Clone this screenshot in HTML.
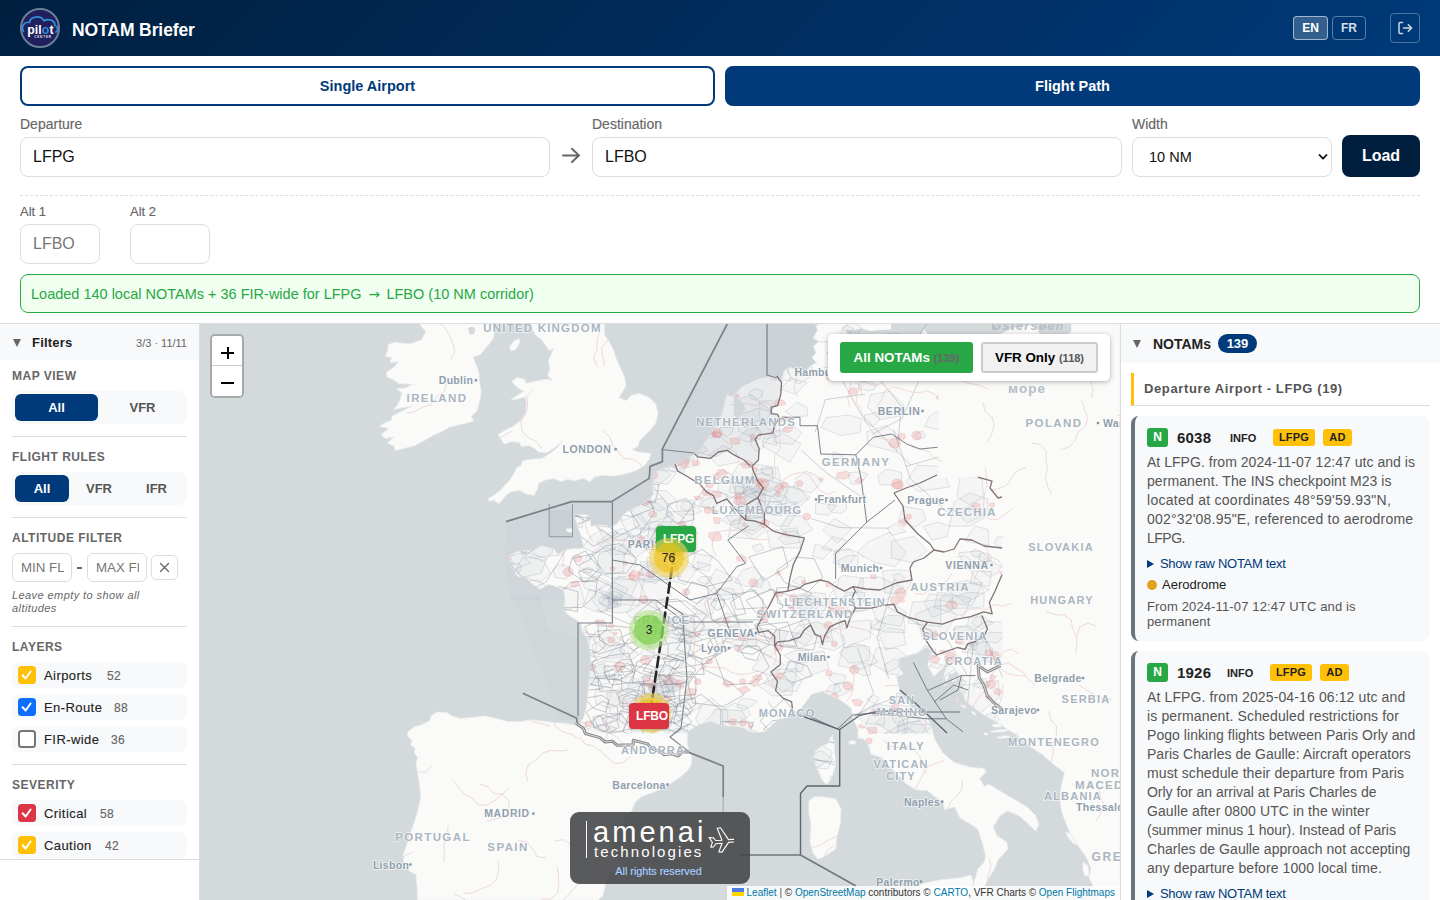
<!DOCTYPE html>
<html lang="en">
<head>
<meta charset="utf-8">
<title>NOTAM Briefer</title>
<style>
*{box-sizing:border-box;margin:0;padding:0}
html,body{width:1440px;height:900px;overflow:hidden;background:#fff}
body{font-family:"Liberation Sans",sans-serif;color:#222;position:relative;font-size:14px}
.abs{position:absolute}
/* header */
#hdr{position:absolute;left:0;top:0;width:1440px;height:56px;background:linear-gradient(135deg,#001f3f 0%,#003a7a 100%)}
#logo{position:absolute;left:20px;top:8px;width:40px;height:40px}
#title{position:absolute;left:72px;top:18.500px;font-size:17.5px;font-weight:700;color:#fff;line-height:22px;white-space:nowrap;letter-spacing:-0.1px}
.lang{position:absolute;top:16px;height:24px;border:1px solid rgba(255,255,255,.35);border-radius:4px;color:#fff;font-size:12px;font-weight:700;text-align:center;line-height:22px}
#en{left:1293px;width:35px;background:rgba(255,255,255,.2);border-color:rgba(255,255,255,.55)}
#fr{left:1332px;width:34px;color:rgba(255,255,255,.85)}
#logout{position:absolute;left:1390px;top:13px;width:30px;height:30px;border:1px solid rgba(255,255,255,.3);border-radius:4px}
/* tabs */
.tab{position:absolute;top:66px;height:40px;border:2px solid #003a7a;border-radius:8px;font-size:14.5px;font-weight:700;text-align:center;line-height:36px}
#tab1{left:20px;width:695px;color:#003a7a;background:#fff}
#tab2{left:725px;width:695px;color:#fff;background:#003a7a}
.lbl{position:absolute;font-size:14px;color:#666;-webkit-text-stroke:.15px #666;line-height:16px;white-space:nowrap}
.inp{position:absolute;height:40px;border:1px solid #ddd;border-radius:8px;background:#fff;font-size:16px;line-height:38px;padding-left:12px;color:#111}
#load{position:absolute;left:1342px;top:135px;width:78px;height:42px;border-radius:8px;background:#001f3f;color:#fff;font-weight:700;font-size:16px;text-align:center;line-height:41px}
#dash{position:absolute;left:20px;top:195px;width:1400px;height:0;border-top:1px dashed #ddd}
#status{position:absolute;left:20px;top:274px;width:1400px;height:39px;border:1px solid #28a745;border-radius:8px;background:#f0fff0;color:#28a745;font-size:14.5px;line-height:39.500px;padding-left:10px;white-space:nowrap}
#hline{position:absolute;left:0;top:323px;width:1440px;height:1px;background:#ddd}

/* sidebar */
#side{position:absolute;left:0;top:324px;width:199px;height:536px;background:#fff;border-bottom:1px solid #ddd}
#side .hd{position:absolute;left:0;top:0;width:199px;height:36px;background:#f8f9fa}
.tri{position:absolute;width:0;height:0;border-left:4px solid transparent;border-right:4px solid transparent;border-top:8px solid #666}
.sl{position:absolute;left:12px;font-size:12px;font-weight:700;color:#666;letter-spacing:.5px;line-height:14px;white-space:nowrap}
.seg{position:absolute;left:12px;width:175px;height:33px;background:#f8f9fa;border-radius:8px}
.seg div{position:absolute;top:3px;height:27px;border-radius:6px;font-size:13px;font-weight:700;color:#555;text-align:center;line-height:27px}
.seg div.on{background:#003a7a;color:#fff}
.dv{position:absolute;left:12px;width:175px;height:1px;background:#ddd}
.fl{position:absolute;height:29px;border:1px solid #ddd;border-radius:6px;font-size:13.300px;color:#777;line-height:27px;padding-left:8px;white-space:nowrap;overflow:hidden;background:#fff}
.row{position:absolute;left:12px;width:175px;height:26px;background:#f8f9fa;border-radius:6px;font-size:13px;color:#222;line-height:26px;white-space:nowrap}
.row .cb{position:absolute;left:6px;top:4px;width:18px;height:18px;border-radius:3.5px}
.row .t{position:absolute;left:32px;top:1px;font-weight:400;letter-spacing:.42px;-webkit-text-stroke:.12px #222}
.row .n{position:absolute;top:1px;font-size:12px;color:#666;letter-spacing:.3px;-webkit-text-stroke:.15px #666}

/* right panel */
#pan{position:absolute;left:1120px;top:324px;width:320px;height:576px;background:#fff;border-left:1px solid #ddd;overflow:hidden}
#pan .hd{position:absolute;left:0;top:0;width:319px;height:39px;background:#f8f9fa}
#pan .sec{position:absolute;left:10px;top:49px;width:299px;height:33px;border-left:3px solid #ffc107;border-bottom:1px solid #ddd;font-size:13px;font-weight:700;color:#555;line-height:32px;padding-left:10px;letter-spacing:.62px;white-space:nowrap}
.card{position:absolute;left:10px;width:299px;background:#f8f9fa;border-left:4px solid #6c757d;border-radius:8px}
.card .nb{position:absolute;left:12px;top:12px;width:21px;height:19px;border-radius:3px;background:#28a745;color:#fff;font-size:12px;font-weight:700;text-align:center;line-height:19px}
.card .id{position:absolute;left:42px;top:12px;font-size:15px;font-weight:700;color:#222;line-height:19px;letter-spacing:.2px}
.card .info{position:absolute;top:12px;font-size:11px;font-weight:700;color:#222;line-height:20px}
.card .bd{position:absolute;top:13px;height:17px;border-radius:3px;background:#ffc107;color:#222;font-size:11px;font-weight:700;text-align:center;line-height:17px;letter-spacing:.2px}
.card .body{position:absolute;left:12px;top:37px;font-size:14px;color:#555;line-height:19px;white-space:nowrap;letter-spacing:-.02px}
.card .raw{position:absolute;left:12px;font-size:13px;color:#003a7a;line-height:16px;white-space:nowrap;padding-left:13px;letter-spacing:-.3px}
.card .raw:before{content:"";position:absolute;left:0;top:4px;border-top:4px solid transparent;border-bottom:4px solid transparent;border-left:7px solid #003a7a}
.card .cat{position:absolute;left:27px;font-size:13px;color:#222;line-height:16px;white-space:nowrap}
.card .cat:before{content:"";position:absolute;left:-15px;top:3px;width:10px;height:10px;border-radius:5px;background:#e0a21f}
.card .when{position:absolute;left:12px;font-size:13px;color:#555;line-height:15px;white-space:nowrap;letter-spacing:.14px}

#map{position:absolute;left:200px;top:324px;width:920px;height:576px;overflow:hidden;background:#d4dadc}

.zc{position:absolute;left:10px;top:10px;width:34px;height:64px;border:2px solid rgba(0,0,0,.22);border-radius:5px;background:#fff;overflow:hidden;background-clip:padding-box}
.zb{position:relative;width:30px;height:30px;background:#fff}.zb i{position:absolute;background:#000;display:block}
.lg{position:absolute;left:628px;top:10px;width:282px;height:47px;background:#fff;border-radius:5px;box-shadow:0 1px 5px rgba(0,0,0,.3)}
.lg div{position:absolute;top:8px;height:31px;border-radius:3px;font-size:13.400px;font-weight:700;line-height:31px;text-align:center;white-space:nowrap}
.lg span{font-size:11px;font-weight:700}
.lg .b1{left:12px;width:133px;background:#28a745;color:#fff}
.lg .b1 span{color:#6a646a}
.lg .b2{left:153px;width:117px;background:#f1f1f1;color:#000;border:2px solid #ccc;line-height:27px}
.lg .b2 span{color:#555}
.apt{position:absolute;width:40px;height:26px;border-radius:4px;color:#fff;font-size:12px;font-weight:700;line-height:26px;text-align:center;box-shadow:0 1px 3px rgba(0,0,0,.25);letter-spacing:-.2px}
.cl{position:absolute;width:40px;height:40px;border-radius:20px}
.cl div{position:absolute;left:5px;top:5px;width:30px;height:30px;border-radius:15px;font-size:12px;line-height:30px;text-align:center;color:#222}
.cl.y{background:rgba(241,211,87,.6)}.cl.y div{background:rgba(240,194,12,.6)}
.cl.g{background:rgba(181,226,140,.6)}.cl.g div{background:rgba(110,204,57,.6)}
.am{position:absolute;left:370px;top:488px;width:180px;height:72px;border-radius:9px;background:rgba(66,67,69,.88)}
.am .bar{position:absolute;left:16px;top:9px;width:1px;height:37px;background:#fff}
.am .a1{position:absolute;left:23px;top:1.500px;font-size:29px;line-height:36px;color:#fff;letter-spacing:3.050px;white-space:nowrap}
.am .a2{position:absolute;left:24px;top:29.800px;font-size:15px;line-height:20px;color:#fff;letter-spacing:2.100px;white-space:nowrap}
.am .pl{position:absolute;left:135.500px;top:13px}
.am .a3{position:absolute;left:0;width:180px;top:51.500px;font-size:10.800px;line-height:14px;color:#a6cbfb;text-align:center;letter-spacing:0;-webkit-text-stroke:.2px #a6cbfb;padding-right:3px}
.attr{position:absolute;right:0;bottom:0;height:14px;padding:0 5px;background:rgba(255,255,255,.8);font-size:10px;line-height:14px;color:#333;white-space:nowrap;letter-spacing:0}
.attr a{color:#0078a8}
</style>
</head>
<body>
<div id="hdr">
  <svg id="logo" viewBox="0 0 40 40">
    <circle cx="20" cy="20" r="19" fill="#20205e" stroke="#6b7f96" stroke-width="2"/>
    <path d="M3.500 23.500C0.500 18 5 13.200 9.500 14.500C10 8.500 20.500 6.500 24 12.800C28 10.300 35 12 35 17.500C38.300 18.500 38.300 22.500 36 24" fill="none" stroke="#2f8fd8" stroke-width="1.700" stroke-linecap="round"/>
    <text x="7.200" y="26.400" font-family="Liberation Sans, sans-serif" font-size="12.300" font-weight="700" fill="#fff" letter-spacing="0.1">pil<tspan fill="#2f8fd8">o</tspan>t</text>
    <text x="23" y="29.600" font-family="Liberation Sans, sans-serif" font-size="3" font-weight="700" fill="#e6e9f5" text-anchor="middle" letter-spacing="0.9">CENTER</text>
  </svg>
  <div id="title">NOTAM Briefer</div>
  <div class="lang" id="en">EN</div>
  <div class="lang" id="fr">FR</div>
  <div id="logout"><svg width="28" height="28" viewBox="0 0 28 28" style="position:absolute;left:0;top:0"><path d="M11.5 8.5H9.3a1.3 1.3 0 0 0-1.3 1.3v8.4a1.3 1.3 0 0 0 1.3 1.3h2.2M12.5 14h8M17.3 10.7l3.3 3.3-3.3 3.3" fill="none" stroke="#cfd8e6" stroke-width="1.5" stroke-linecap="round" stroke-linejoin="round"/></svg></div>
</div>
<div class="tab" id="tab1">Single Airport</div>
<div class="tab" id="tab2">Flight Path</div>

<div class="lbl" style="left:20px;top:116px">Departure</div>
<div class="inp" style="left:20px;top:137px;width:530px">LFPG</div>
<svg class="abs" style="left:561px;top:147px" width="20" height="18" viewBox="0 0 20 18"><path d="M2 8.400H17.600M11 1.800L17.900 8.400L11 15" fill="none" stroke="#666" stroke-width="2" stroke-linecap="round" stroke-linejoin="miter"/></svg>
<div class="lbl" style="left:592px;top:116px">Destination</div>
<div class="inp" style="left:592px;top:137px;width:530px">LFBO</div>
<div class="lbl" style="left:1132px;top:116px">Width</div>
<div class="inp" style="left:1132px;top:137px;width:200px;font-size:14.5px;padding-left:16px">10 NM
  <svg class="abs" style="right:3px;top:15px" width="10" height="8" viewBox="0 0 10 8"><path d="M1.500 2l3.500 3.700L8.500 2" fill="none" stroke="#111" stroke-width="1.8" stroke-linecap="round" stroke-linejoin="round"/></svg>
</div>
<div id="load">Load</div>
<div id="dash"></div>
<div class="lbl" style="left:20px;top:204px;font-size:13px">Alt 1</div>
<div class="inp" style="left:20px;top:224px;width:80px;color:#777">LFBO</div>
<div class="lbl" style="left:130px;top:204px;font-size:13px">Alt 2</div>
<div class="inp" style="left:130px;top:224px;width:80px"></div>
<div id="status">Loaded 140 local NOTAMs + 36 FIR-wide for LFPG <span style="font-family:'DejaVu Sans',sans-serif;font-size:13.500px;line-height:10px;margin:0 2.500px 0 3px">→</span> LFBO (10 NM corridor)</div>
<div id="hline"></div>
<div class="abs" style="left:199px;top:324px;width:1px;height:576px;background:#ddd"></div>

<div id="side">
  <div class="hd">
    <div class="tri" style="left:13px;top:15px"></div>
    <div class="abs" style="left:32px;top:10.500px;font-size:13px;font-weight:700;color:#222;line-height:16px;letter-spacing:.2px">Filters</div>
    <div class="abs" style="right:12px;top:12px;font-size:11px;color:#666;line-height:14px;white-space:nowrap">3/3 · 11/11</div>
  </div>
  <div class="sl" style="top:45px">MAP VIEW</div>
  <div class="seg" style="top:67px"><div class="on" style="left:3px;width:83px">All</div><div style="left:89px;width:83px">VFR</div></div>
  <div class="dv" style="top:112px"></div>
  <div class="sl" style="top:126px">FLIGHT RULES</div>
  <div class="seg" style="top:148px"><div class="on" style="left:3px;width:54px">All</div><div style="left:60px;width:54px">VFR</div><div style="left:117px;width:55px">IFR</div></div>
  <div class="dv" style="top:193px"></div>
  <div class="sl" style="top:207px">ALTITUDE FILTER</div>
  <div class="fl" style="left:12px;top:229px;width:60px"><span style="display:block;width:43px;overflow:hidden">MIN FL</span></div>
  <div class="abs" style="left:77px;top:243px;width:5px;height:1.500px;background:#666"></div>
  <div class="fl" style="left:87px;top:229px;width:60px"><span style="display:block;width:43px;overflow:hidden">MAX FL</span></div>
  <div class="abs" style="left:151px;top:231px;width:27px;height:25px;border:1px solid #ddd;border-radius:5px;background:#fff"><svg width="25" height="23" viewBox="0 0 25 23"><path d="M8.500 7.500l8 8M16.500 7.500l-8 8" stroke="#666" stroke-width="1.300" stroke-linecap="round"/></svg></div>
  <div class="abs" style="left:12px;top:265px;font-size:11px;font-style:italic;color:#666;line-height:13px;letter-spacing:.42px;white-space:nowrap">Leave empty to show all<br>altitudes</div>
  <div class="dv" style="top:302px"></div>
  <div class="sl" style="top:316px">LAYERS</div>
<div class="row" style="top:338px"><div class="cb" style="background:#ffc107"><svg width="18" height="18" viewBox="0 0 18 18"><path d="M4.600 9.300l3 3.200 5-7" fill="none" stroke="#fff" stroke-width="2" stroke-linecap="round" stroke-linejoin="round"/></svg></div><span class="t">Airports</span><span class="n" style="left:95px">52</span></div>
<div class="row" style="top:370px"><div class="cb" style="background:#0d6efd"><svg width="18" height="18" viewBox="0 0 18 18"><path d="M4.600 9.300l3 3.200 5-7" fill="none" stroke="#fff" stroke-width="2" stroke-linecap="round" stroke-linejoin="round"/></svg></div><span class="t">En-Route</span><span class="n" style="left:102px">88</span></div>
<div class="row" style="top:402px"><div class="cb" style="background:#fff;border:2px solid #767676"></div><span class="t">FIR-wide</span><span class="n" style="left:99px">36</span></div>
  <div class="dv" style="top:440px"></div>
  <div class="sl" style="top:454px">SEVERITY</div>
<div class="row" style="top:476px"><div class="cb" style="background:#dc3545"><svg width="18" height="18" viewBox="0 0 18 18"><path d="M4.600 9.300l3 3.200 5-7" fill="none" stroke="#fff" stroke-width="2" stroke-linecap="round" stroke-linejoin="round"/></svg></div><span class="t">Critical</span><span class="n" style="left:88px">58</span></div>
<div class="row" style="top:508px"><div class="cb" style="background:#ffc107"><svg width="18" height="18" viewBox="0 0 18 18"><path d="M4.600 9.300l3 3.200 5-7" fill="none" stroke="#fff" stroke-width="2" stroke-linecap="round" stroke-linejoin="round"/></svg></div><span class="t">Caution</span><span class="n" style="left:93px">42</span></div>
</div>

<div id="map">
<svg id="mapsvg" width="920" height="576" viewBox="200 324 920 576" style="position:absolute;left:0;top:0;font-family:'Liberation Sans',sans-serif">
<rect x="200" y="324" width="920" height="576" fill="#d4dadc"/>
<path d="M727.2 324.0 L840.0 324.0 L840.0 400.0 L700.0 470.0 L662.4 461.6 L662.4 448.8Z" fill="#6d7780" fill-opacity=".035"/><path d="M767.0 324.0 L840.0 324.0 L840.0 380.0 L767.0 375.0Z" fill="#6d7780" fill-opacity=".03"/><path d="M506.0 521.6 L571.6 501.6 L611.6 501.6 L649.2 478.4 L650.0 466.4 L662.4 461.6 L700.0 470.0 L700.0 600.0 L510.0 600.0 L505.0 560.0Z" fill="#6d7780" fill-opacity=".035"/><rect x="549.2" y="510.4" width="23.300" height="26.4" fill="#6d7780" fill-opacity=".06"/><path d="M578.0 623.0 L612.0 623.0 L612.0 718.0 L578.0 718.0Z" fill="#6d7780" fill-opacity=".025"/><path d="M513.0 597.0 L540.0 597.0 L548.0 628.0 L580.0 639.0 L580.0 720.0 L560.0 720.0Z" fill="#6d7780" fill-opacity=".03"/>
<defs><clipPath id="landclip"><path d="M815.2 324.0 L817.6 330.4 L813.0 338.4 L819.0 341.5 L813.5 346.0 L816.0 352.8 L812.0 358.0 L817.0 362.5 L810.4 366.0 L806.0 371.5 L800.0 369.6 L793.6 368.8 L789.0 367.5 L784.0 371.2 L782.3 379.9 L773.2 376.9 L759.6 378.8 L741.8 387.1 L733.0 396.6 L726.8 395.5 L723.6 409.0 L722.0 414.3 L712.3 432.1 L706.1 440.6 L699.3 451.5 L691.3 455.9 L684.9 459.6 L672.4 466.1 L660.6 469.3 L654.5 472.6 L652.7 488.0 L653.7 494.4 L646.0 502.4 L636.4 507.2 L626.8 512.0 L620.4 517.6 L617.2 524.0 L610.8 526.7 L599.6 524.8 L590.8 526.4 L590.0 520.0 L588.4 515.2 L582.0 514.4 L574.8 514.4 L576.4 523.2 L579.6 531.2 L582.0 539.2 L584.4 548.5 L574.0 548.8 L566.0 549.6 L558.0 554.4 L553.2 548.8 L546.8 547.2 L540.4 545.3 L534.0 550.4 L526.0 550.4 L516.4 552.0 L510.0 555.2 L509.2 560.0 L514.8 562.4 L511.6 568.0 L519.6 569.9 L514.8 572.8 L518.0 576.3 L526.0 577.6 L532.4 584.0 L540.4 589.1 L548.4 584.3 L558.0 587.2 L564.4 592.0 L565.0 599.6 L564.4 610.8 L569.2 615.6 L577.2 620.4 L581.2 624.4 L582.0 631.6 L586.0 636.4 L588.4 642.8 L590.0 650.8 L590.8 660.4 L590.0 673.2 L588.4 686.0 L587.6 698.8 L586.0 710.0 L583.6 718.0 L580.4 722.8 L576.4 725.2 L564.0 723.2 L552.8 722.4 L540.0 720.8 L530.4 720.0 L520.8 721.6 L508.0 721.6 L498.4 719.2 L485.6 716.0 L472.8 717.6 L460.0 718.4 L452.0 716.0 L447.2 712.8 L437.6 712.0 L431.2 716.0 L429.6 720.8 L421.6 724.8 L413.6 727.2 L408.0 732.0 L407.2 736.0 L412.0 740.0 L410.4 744.8 L415.2 748.0 L414.4 752.8 L417.6 757.6 L416.0 764.0 L417.6 772.0 L420.0 788.0 L420.8 797.6 L418.4 808.8 L415.2 820.0 L411.2 831.2 L406.4 845.6 L403.2 855.2 L404.0 864.8 L409.6 871.2 L416.0 874.4 L416.8 884.0 L417.6 893.6 L417.6 900.0 L598.0 900.0 L602.6 895.9 L607.6 875.2 L623.7 864.1 L615.1 857.1 L611.0 842.4 L618.5 827.6 L632.0 810.0 L635.2 802.0 L641.6 796.4 L652.8 792.4 L664.0 787.6 L672.0 782.8 L680.0 777.2 L688.0 770.0 L691.2 764.4 L692.0 757.2 L688.8 751.6 L687.2 742.8 L687.2 733.2 L689.6 730.0 L696.0 726.0 L704.0 722.8 L712.0 721.2 L718.4 724.4 L728.0 726.0 L736.0 726.0 L744.0 727.6 L748.8 731.6 L758.4 732.4 L766.4 730.8 L772.8 723.6 L779.2 719.6 L788.8 716.4 L801.2 708.0 L811.5 694.3 L821.7 691.2 L830.1 694.7 L842.0 701.0 L851.5 708.3 L853.1 718.4 L858.1 729.3 L858.1 737.7 L863.1 738.7 L867.7 743.3 L871.1 754.1 L881.3 757.2 L887.0 763.7 L896.8 773.4 L905.7 783.2 L915.5 789.8 L927.3 790.5 L934.8 796.8 L942.8 801.6 L944.6 809.7 L954.6 806.7 L955.6 808.9 L960.0 817.8 L971.1 824.4 L977.8 828.9 L982.2 842.2 L985.6 855.6 L984.4 862.2 L977.8 868.9 L975.6 877.8 L973.3 885.6 L978.0 892.0 L984.0 887.3 L988.9 877.8 L994.4 868.9 L997.8 860.0 L1007.8 848.9 L1006.7 842.2 L996.7 835.6 L993.3 826.7 L1000.0 815.6 L1007.8 811.1 L1018.9 815.6 L1028.9 824.4 L1035.6 831.1 L1038.9 824.4 L1035.6 815.6 L1026.7 806.7 L1013.3 798.9 L1000.0 791.1 L988.9 784.4 L984.4 786.4 L979.6 778.4 L986.0 772.0 L984.4 768.8 L970.0 767.2 L954.0 762.4 L942.8 752.8 L934.8 740.0 L931.6 727.2 L926.8 716.0 L910.8 706.4 L899.6 692.0 L896.4 676.0 L902.9 673.9 L898.4 665.8 L899.1 658.1 L916.6 652.9 L926.8 647.0 L931.8 651.2 L927.7 664.9 L933.7 676.4 L941.6 669.0 L947.1 661.6 L957.6 672.6 L962.1 688.3 L965.1 700.4 L980.3 712.7 L992.6 719.6 L1015.1 734.0 L1030.1 746.4 L1041.8 754.1 L1052.9 763.7 L1064.5 772.5 L1061.1 787.1 L1060.0 799.8 L1062.0 812.7 L1066.7 824.4 L1070.0 833.3 L1075.6 842.2 L1082.2 851.1 L1087.8 860.0 L1091.1 868.9 L1088.9 877.8 L1093.3 886.2 L1098.0 900.0 L1120.0 900.0 L1120.0 324.0Z M604.4 324.0 L604.4 334.4 L609.2 341.6 L614.0 351.2 L616.4 359.2 L620.4 368.0 L624.4 376.8 L626.0 385.6 L622.0 392.8 L618.8 397.6 L626.0 400.8 L631.6 395.2 L639.6 393.6 L649.2 397.6 L655.6 404.0 L658.0 413.6 L655.6 423.2 L649.2 431.2 L644.4 436.0 L639.6 440.8 L638.0 446.4 L631.6 449.6 L638.0 452.0 L650.8 453.6 L649.2 459.2 L644.4 465.6 L636.4 470.4 L626.8 473.6 L614.0 476.0 L602.8 475.2 L594.8 476.8 L590.0 481.6 L583.6 478.4 L574.0 480.8 L567.6 479.2 L561.2 481.6 L553.2 478.4 L545.2 480.0 L538.8 483.2 L537.2 489.6 L534.0 495.2 L526.0 493.9 L519.6 490.4 L510.0 492.0 L505.2 496.0 L502.0 500.0 L498.8 503.5 L493.2 500.0 L489.2 501.6 L488.4 498.4 L494.0 495.2 L500.4 490.4 L505.2 484.8 L510.0 480.0 L514.0 473.6 L516.4 468.0 L521.2 465.6 L522.8 460.8 L532.4 459.2 L542.0 458.4 L550.0 453.6 L558.0 447.2 L562.8 440.0 L556.4 446.4 L546.8 452.8 L538.8 452.0 L534.0 448.0 L529.2 445.6 L521.2 446.4 L519.6 442.4 L511.6 441.6 L504.4 444.0 L500.4 438.4 L498.0 434.4 L505.2 430.4 L513.2 426.4 L521.2 420.0 L526.0 412.0 L526.8 404.0 L525.2 396.8 L519.6 398.4 L510.8 400.0 L516.4 396.0 L524.4 391.2 L518.0 388.0 L511.6 381.6 L517.2 377.6 L524.4 379.2 L526.0 383.5 L532.4 381.9 L542.0 380.0 L547.6 379.2 L553.2 380.8 L547.6 375.2 L550.0 368.8 L548.4 360.8 L554.0 348.0 L549.2 350.4 L542.0 340.0 L535.6 335.2 L530.0 324.0Z M419.6 324.0 L426.0 332.0 L421.2 340.0 L410.0 344.0 L394.0 342.4 L388.4 344.8 L387.6 351.2 L385.2 356.0 L391.6 357.6 L390.0 362.4 L398.8 361.6 L394.0 367.2 L386.8 372.0 L386.8 376.8 L394.0 380.0 L398.8 383.5 L413.2 384.3 L405.2 388.0 L396.4 388.8 L402.0 392.8 L400.4 399.2 L397.2 405.6 L393.2 409.6 L405.2 407.2 L413.2 405.9 L402.0 411.2 L392.4 416.0 L391.6 420.0 L382.8 424.0 L379.6 426.4 L389.2 428.3 L381.2 434.4 L385.2 438.4 L394.0 436.8 L387.6 443.2 L394.0 445.9 L395.6 450.4 L405.2 448.0 L414.8 445.6 L426.0 439.5 L432.4 435.5 L442.0 431.5 L448.4 427.5 L458.0 425.1 L467.6 422.7 L474.0 421.1 L471.1 416.8 L477.2 410.4 L479.6 400.8 L481.2 391.2 L479.6 383.2 L478.8 372.0 L475.6 364.0 L473.2 356.8 L480.4 354.4 L488.4 344.8 L493.2 338.4 L494.0 332.0 L492.4 324.0Z M832.4 735.6 L834.0 742.8 L834.8 754.0 L835.6 763.6 L833.2 773.2 L830.0 781.2 L826.0 784.4 L822.0 779.6 L818.8 771.6 L815.6 765.2 L814.0 757.2 L815.6 750.8 L822.0 746.0 L828.4 743.6 L830.0 738.0Z M808.9 801.1 L814.0 797.0 L822.2 796.7 L835.6 798.9 L841.1 808.9 L840.0 824.4 L836.7 837.8 L835.6 848.9 L824.4 856.7 L817.8 858.9 L813.3 853.3 L810.0 842.2 L811.1 824.4 L808.9 813.3Z M921.0 884.0 L940.0 880.0 L960.0 878.0 L971.0 875.0 L973.0 882.0 L968.0 900.0 L915.0 900.0Z M511.0 351.0 L509.5 347.0 L514.0 341.0 L519.0 339.0 L520.0 342.0 L516.0 349.0Z M566.5 529.0 L572.5 528.5 L572.5 532.0 L567.0 532.0Z M1066.0 832.0 L1070.0 834.0 L1076.0 842.0 L1077.0 845.0 L1073.0 843.0 L1068.0 837.0Z M1083.0 862.0 L1088.0 866.0 L1089.0 875.0 L1085.0 876.0 L1083.0 870.0Z M955.4 671.7 L953.7 673.6 L950.9 674.1 L947.9 673.0 L946.1 670.8 L946.0 668.3 L947.7 666.4 L950.5 665.9 L953.5 667.0 L955.3 669.2Z M948.4 677.4 L947.2 682.6 L945.7 685.7 L944.3 685.5 L943.7 682.1 L944.0 676.8 L945.2 671.6 L946.7 668.5 L948.1 668.7 L948.7 672.1Z M957.2 678.2 L957.1 679.3 L956.1 680.5 L954.5 681.4 L952.9 681.7 L952.0 681.2 L952.1 680.1 L953.1 678.9 L954.7 678.0 L956.3 677.7Z M965.9 693.4 L964.2 693.3 L961.2 691.5 L957.9 688.7 L955.6 686.0 L955.1 684.4 L956.8 684.5 L959.8 686.3 L963.1 689.1 L965.4 691.8Z M965.6 708.1 L964.3 707.9 L961.7 706.3 L958.8 703.9 L956.8 701.6 L956.4 700.3 L957.7 700.5 L960.3 702.1 L963.2 704.5 L965.2 706.8Z M1002.9 725.6 L1001.8 726.5 L999.1 727.1 L995.7 727.1 L993.0 726.5 L991.9 725.6 L993.0 724.7 L995.7 724.1 L999.1 724.1 L1001.8 724.7Z M1008.7 730.1 L1007.0 730.9 L1002.6 731.7 L997.0 732.2 L992.5 732.2 L990.7 731.7 L992.4 730.9 L996.8 730.1 L1002.4 729.6 L1006.9 729.6Z M1009.6 736.5 L1008.4 737.3 L1005.2 738.1 L1001.2 738.4 L997.9 738.3 L996.6 737.7 L997.8 736.9 L1001.0 736.1 L1005.0 735.8 L1008.3 735.9Z M1022.7 742.0 L1021.9 742.8 L1019.6 743.7 L1016.6 744.5 L1014.1 744.9 L1013.1 744.6 L1013.9 743.8 L1016.2 742.9 L1019.2 742.1 L1021.7 741.7Z M988.0 734.0 L987.6 734.7 L986.6 735.1 L985.4 735.1 L984.4 734.7 L984.0 734.0 L984.4 733.3 L985.4 732.9 L986.6 732.9 L987.6 733.3Z M856.0 742.4 L855.3 743.5 L853.5 744.1 L851.3 744.1 L849.5 743.5 L848.8 742.4 L849.5 741.3 L851.3 740.7 L853.5 740.7 L855.3 741.3Z M975.8 714.9 L975.0 715.0 L973.6 714.3 L972.2 713.1 L971.3 711.9 L971.2 711.1 L972.0 711.0 L973.4 711.7 L974.8 712.9 L975.7 714.1Z"/></clipPath></defs>
<path d="M815.2 324.0 L817.6 330.4 L813.0 338.4 L819.0 341.5 L813.5 346.0 L816.0 352.8 L812.0 358.0 L817.0 362.5 L810.4 366.0 L806.0 371.5 L800.0 369.6 L793.6 368.8 L789.0 367.5 L784.0 371.2 L782.3 379.9 L773.2 376.9 L759.6 378.8 L741.8 387.1 L733.0 396.6 L726.8 395.5 L723.6 409.0 L722.0 414.3 L712.3 432.1 L706.1 440.6 L699.3 451.5 L691.3 455.9 L684.9 459.6 L672.4 466.1 L660.6 469.3 L654.5 472.6 L652.7 488.0 L653.7 494.4 L646.0 502.4 L636.4 507.2 L626.8 512.0 L620.4 517.6 L617.2 524.0 L610.8 526.7 L599.6 524.8 L590.8 526.4 L590.0 520.0 L588.4 515.2 L582.0 514.4 L574.8 514.4 L576.4 523.2 L579.6 531.2 L582.0 539.2 L584.4 548.5 L574.0 548.8 L566.0 549.6 L558.0 554.4 L553.2 548.8 L546.8 547.2 L540.4 545.3 L534.0 550.4 L526.0 550.4 L516.4 552.0 L510.0 555.2 L509.2 560.0 L514.8 562.4 L511.6 568.0 L519.6 569.9 L514.8 572.8 L518.0 576.3 L526.0 577.6 L532.4 584.0 L540.4 589.1 L548.4 584.3 L558.0 587.2 L564.4 592.0 L565.0 599.6 L564.4 610.8 L569.2 615.6 L577.2 620.4 L581.2 624.4 L582.0 631.6 L586.0 636.4 L588.4 642.8 L590.0 650.8 L590.8 660.4 L590.0 673.2 L588.4 686.0 L587.6 698.8 L586.0 710.0 L583.6 718.0 L580.4 722.8 L576.4 725.2 L564.0 723.2 L552.8 722.4 L540.0 720.8 L530.4 720.0 L520.8 721.6 L508.0 721.6 L498.4 719.2 L485.6 716.0 L472.8 717.6 L460.0 718.4 L452.0 716.0 L447.2 712.8 L437.6 712.0 L431.2 716.0 L429.6 720.8 L421.6 724.8 L413.6 727.2 L408.0 732.0 L407.2 736.0 L412.0 740.0 L410.4 744.8 L415.2 748.0 L414.4 752.8 L417.6 757.6 L416.0 764.0 L417.6 772.0 L420.0 788.0 L420.8 797.6 L418.4 808.8 L415.2 820.0 L411.2 831.2 L406.4 845.6 L403.2 855.2 L404.0 864.8 L409.6 871.2 L416.0 874.4 L416.8 884.0 L417.6 893.6 L417.6 900.0 L598.0 900.0 L602.6 895.9 L607.6 875.2 L623.7 864.1 L615.1 857.1 L611.0 842.4 L618.5 827.6 L632.0 810.0 L635.2 802.0 L641.6 796.4 L652.8 792.4 L664.0 787.6 L672.0 782.8 L680.0 777.2 L688.0 770.0 L691.2 764.4 L692.0 757.2 L688.8 751.6 L687.2 742.8 L687.2 733.2 L689.6 730.0 L696.0 726.0 L704.0 722.8 L712.0 721.2 L718.4 724.4 L728.0 726.0 L736.0 726.0 L744.0 727.6 L748.8 731.6 L758.4 732.4 L766.4 730.8 L772.8 723.6 L779.2 719.6 L788.8 716.4 L801.2 708.0 L811.5 694.3 L821.7 691.2 L830.1 694.7 L842.0 701.0 L851.5 708.3 L853.1 718.4 L858.1 729.3 L858.1 737.7 L863.1 738.7 L867.7 743.3 L871.1 754.1 L881.3 757.2 L887.0 763.7 L896.8 773.4 L905.7 783.2 L915.5 789.8 L927.3 790.5 L934.8 796.8 L942.8 801.6 L944.6 809.7 L954.6 806.7 L955.6 808.9 L960.0 817.8 L971.1 824.4 L977.8 828.9 L982.2 842.2 L985.6 855.6 L984.4 862.2 L977.8 868.9 L975.6 877.8 L973.3 885.6 L978.0 892.0 L984.0 887.3 L988.9 877.8 L994.4 868.9 L997.8 860.0 L1007.8 848.9 L1006.7 842.2 L996.7 835.6 L993.3 826.7 L1000.0 815.6 L1007.8 811.1 L1018.9 815.6 L1028.9 824.4 L1035.6 831.1 L1038.9 824.4 L1035.6 815.6 L1026.7 806.7 L1013.3 798.9 L1000.0 791.1 L988.9 784.4 L984.4 786.4 L979.6 778.4 L986.0 772.0 L984.4 768.8 L970.0 767.2 L954.0 762.4 L942.8 752.8 L934.8 740.0 L931.6 727.2 L926.8 716.0 L910.8 706.4 L899.6 692.0 L896.4 676.0 L902.9 673.9 L898.4 665.8 L899.1 658.1 L916.6 652.9 L926.8 647.0 L931.8 651.2 L927.7 664.9 L933.7 676.4 L941.6 669.0 L947.1 661.6 L957.6 672.6 L962.1 688.3 L965.1 700.4 L980.3 712.7 L992.6 719.6 L1015.1 734.0 L1030.1 746.4 L1041.8 754.1 L1052.9 763.7 L1064.5 772.5 L1061.1 787.1 L1060.0 799.8 L1062.0 812.7 L1066.7 824.4 L1070.0 833.3 L1075.6 842.2 L1082.2 851.1 L1087.8 860.0 L1091.1 868.9 L1088.9 877.8 L1093.3 886.2 L1098.0 900.0 L1120.0 900.0 L1120.0 324.0Z M604.4 324.0 L604.4 334.4 L609.2 341.6 L614.0 351.2 L616.4 359.2 L620.4 368.0 L624.4 376.8 L626.0 385.6 L622.0 392.8 L618.8 397.6 L626.0 400.8 L631.6 395.2 L639.6 393.6 L649.2 397.6 L655.6 404.0 L658.0 413.6 L655.6 423.2 L649.2 431.2 L644.4 436.0 L639.6 440.8 L638.0 446.4 L631.6 449.6 L638.0 452.0 L650.8 453.6 L649.2 459.2 L644.4 465.6 L636.4 470.4 L626.8 473.6 L614.0 476.0 L602.8 475.2 L594.8 476.8 L590.0 481.6 L583.6 478.4 L574.0 480.8 L567.6 479.2 L561.2 481.6 L553.2 478.4 L545.2 480.0 L538.8 483.2 L537.2 489.6 L534.0 495.2 L526.0 493.9 L519.6 490.4 L510.0 492.0 L505.2 496.0 L502.0 500.0 L498.8 503.5 L493.2 500.0 L489.2 501.6 L488.4 498.4 L494.0 495.2 L500.4 490.4 L505.2 484.8 L510.0 480.0 L514.0 473.6 L516.4 468.0 L521.2 465.6 L522.8 460.8 L532.4 459.2 L542.0 458.4 L550.0 453.6 L558.0 447.2 L562.8 440.0 L556.4 446.4 L546.8 452.8 L538.8 452.0 L534.0 448.0 L529.2 445.6 L521.2 446.4 L519.6 442.4 L511.6 441.6 L504.4 444.0 L500.4 438.4 L498.0 434.4 L505.2 430.4 L513.2 426.4 L521.2 420.0 L526.0 412.0 L526.8 404.0 L525.2 396.8 L519.6 398.4 L510.8 400.0 L516.4 396.0 L524.4 391.2 L518.0 388.0 L511.6 381.6 L517.2 377.6 L524.4 379.2 L526.0 383.5 L532.4 381.9 L542.0 380.0 L547.6 379.2 L553.2 380.8 L547.6 375.2 L550.0 368.8 L548.4 360.8 L554.0 348.0 L549.2 350.4 L542.0 340.0 L535.6 335.2 L530.0 324.0Z M419.6 324.0 L426.0 332.0 L421.2 340.0 L410.0 344.0 L394.0 342.4 L388.4 344.8 L387.6 351.2 L385.2 356.0 L391.6 357.6 L390.0 362.4 L398.8 361.6 L394.0 367.2 L386.8 372.0 L386.8 376.8 L394.0 380.0 L398.8 383.5 L413.2 384.3 L405.2 388.0 L396.4 388.8 L402.0 392.8 L400.4 399.2 L397.2 405.6 L393.2 409.6 L405.2 407.2 L413.2 405.9 L402.0 411.2 L392.4 416.0 L391.6 420.0 L382.8 424.0 L379.6 426.4 L389.2 428.3 L381.2 434.4 L385.2 438.4 L394.0 436.8 L387.6 443.2 L394.0 445.9 L395.6 450.4 L405.2 448.0 L414.8 445.6 L426.0 439.5 L432.4 435.5 L442.0 431.5 L448.4 427.5 L458.0 425.1 L467.6 422.7 L474.0 421.1 L471.1 416.8 L477.2 410.4 L479.6 400.8 L481.2 391.2 L479.6 383.2 L478.8 372.0 L475.6 364.0 L473.2 356.8 L480.4 354.4 L488.4 344.8 L493.2 338.4 L494.0 332.0 L492.4 324.0Z M832.4 735.6 L834.0 742.8 L834.8 754.0 L835.6 763.6 L833.2 773.2 L830.0 781.2 L826.0 784.4 L822.0 779.6 L818.8 771.6 L815.6 765.2 L814.0 757.2 L815.6 750.8 L822.0 746.0 L828.4 743.6 L830.0 738.0Z M808.9 801.1 L814.0 797.0 L822.2 796.7 L835.6 798.9 L841.1 808.9 L840.0 824.4 L836.7 837.8 L835.6 848.9 L824.4 856.7 L817.8 858.9 L813.3 853.3 L810.0 842.2 L811.1 824.4 L808.9 813.3Z M921.0 884.0 L940.0 880.0 L960.0 878.0 L971.0 875.0 L973.0 882.0 L968.0 900.0 L915.0 900.0Z M511.0 351.0 L509.5 347.0 L514.0 341.0 L519.0 339.0 L520.0 342.0 L516.0 349.0Z M566.5 529.0 L572.5 528.5 L572.5 532.0 L567.0 532.0Z M1066.0 832.0 L1070.0 834.0 L1076.0 842.0 L1077.0 845.0 L1073.0 843.0 L1068.0 837.0Z M1083.0 862.0 L1088.0 866.0 L1089.0 875.0 L1085.0 876.0 L1083.0 870.0Z M955.4 671.7 L953.7 673.6 L950.9 674.1 L947.9 673.0 L946.1 670.8 L946.0 668.3 L947.7 666.4 L950.5 665.9 L953.5 667.0 L955.3 669.2Z M948.4 677.4 L947.2 682.6 L945.7 685.7 L944.3 685.5 L943.7 682.1 L944.0 676.8 L945.2 671.6 L946.7 668.5 L948.1 668.7 L948.7 672.1Z M957.2 678.2 L957.1 679.3 L956.1 680.5 L954.5 681.4 L952.9 681.7 L952.0 681.2 L952.1 680.1 L953.1 678.9 L954.7 678.0 L956.3 677.7Z M965.9 693.4 L964.2 693.3 L961.2 691.5 L957.9 688.7 L955.6 686.0 L955.1 684.4 L956.8 684.5 L959.8 686.3 L963.1 689.1 L965.4 691.8Z M965.6 708.1 L964.3 707.9 L961.7 706.3 L958.8 703.9 L956.8 701.6 L956.4 700.3 L957.7 700.5 L960.3 702.1 L963.2 704.5 L965.2 706.8Z M1002.9 725.6 L1001.8 726.5 L999.1 727.1 L995.7 727.1 L993.0 726.5 L991.9 725.6 L993.0 724.7 L995.7 724.1 L999.1 724.1 L1001.8 724.7Z M1008.7 730.1 L1007.0 730.9 L1002.6 731.7 L997.0 732.2 L992.5 732.2 L990.7 731.7 L992.4 730.9 L996.8 730.1 L1002.4 729.6 L1006.9 729.6Z M1009.6 736.5 L1008.4 737.3 L1005.2 738.1 L1001.2 738.4 L997.9 738.3 L996.6 737.7 L997.8 736.9 L1001.0 736.1 L1005.0 735.8 L1008.3 735.9Z M1022.7 742.0 L1021.9 742.8 L1019.6 743.7 L1016.6 744.5 L1014.1 744.9 L1013.1 744.6 L1013.9 743.8 L1016.2 742.9 L1019.2 742.1 L1021.7 741.7Z M988.0 734.0 L987.6 734.7 L986.6 735.1 L985.4 735.1 L984.4 734.7 L984.0 734.0 L984.4 733.3 L985.4 732.9 L986.6 732.9 L987.6 733.3Z M856.0 742.4 L855.3 743.5 L853.5 744.1 L851.3 744.1 L849.5 743.5 L848.8 742.4 L849.5 741.3 L851.3 740.7 L853.5 740.7 L855.3 741.3Z M975.8 714.9 L975.0 715.0 L973.6 714.3 L972.2 713.1 L971.3 711.9 L971.2 711.1 L972.0 711.0 L973.4 711.7 L974.8 712.9 L975.7 714.1Z" fill="#fafaf8" stroke="#eef0f0" stroke-width="0.8"/>
<path d="M891.0 324.0 L1071.0 324.0 L1071.4 330.7 L1060.0 348.0 L1043.0 342.0 L1040.0 335.0 L1036.0 326.0 L1030.0 325.5 L1017.9 326.0 L1002.2 333.1 L991.7 339.0 L972.8 348.7 L953.0 355.7 L942.8 358.8 L925.7 351.8 L929.1 335.4 L924.1 329.2 L916.6 344.0 L902.9 337.4 L893.4 348.7 L879.1 359.6 L865.9 357.2 L864.7 351.8 L871.1 340.1 L862.0 343.3 L849.0 342.9 L846.7 330.7 L845.0 329.0 L852.0 330.5 L862.0 328.5 L870.0 331.0 L880.0 330.0 L891.0 329.5Z" fill="#d4dadc"/>
<path d="M468.0 328.0 L472.0 326.5 L475.5 329.0 L474.0 334.0 L469.5 334.5Z" fill="#d4dadc"/>
<defs><clipPath id="rclip"><path d="M727.2 324.0 L938.5 324.0 L938.5 477.4 L1002.5 477.4 L1002.5 733.4 L874.5 733.4 L874.5 797.4 L810.5 797.4 L810.5 733.4 L595.0 733.4 L592.0 733.0 L583.0 729.0 L576.4 725.2 L560.0 725.0 L555.0 600.0 L500.0 575.0 L500.0 540.0 L506.0 521.6 L571.6 501.6 L611.6 501.6 L649.2 478.4 L650.0 466.4 L662.4 461.6 L662.4 448.8Z"/></clipPath></defs>
<g clip-path="url(#landclip)"><g clip-path="url(#rclip)"><path d="M666.9 384.0 L673.9 401.7 L658.7 406.5 L645.8 392.1Z" fill="#5f7390" fill-opacity=".035" stroke="#8c97a8" stroke-opacity=".42" stroke-width=".6"/><path d="M549.8 589.0 L541.1 601.2 L528.3 606.5 L519.7 602.8 L503.1 592.8 L514.3 581.1 L538.0 580.2Z" fill="#5f7390" fill-opacity=".035" stroke="#8c97a8" stroke-opacity=".42" stroke-width=".6"/><path d="M767.5 353.9 L772.2 348.8 L779.1 351.4 L781.7 356.1 L774.5 357.7Z" fill="#5f7390" fill-opacity=".035" stroke="#8c97a8" stroke-opacity=".42" stroke-width=".6"/><path d="M760.7 484.8 L755.2 493.2 L747.7 494.1 L734.9 492.5 L733.2 483.6 L742.1 478.3 L756.4 479.6Z" fill="#5f7390" fill-opacity=".035" stroke="#8c97a8" stroke-opacity=".42" stroke-width=".6"/><path d="M715.7 709.1 L742.6 710.8 L749.8 727.9 L735.2 742.0 L712.3 739.2 L705.3 721.9Z" fill="#5f7390" fill-opacity=".035" stroke="#8c97a8" stroke-opacity=".42" stroke-width=".6"/><path d="M738.3 430.9 L738.9 425.0 L749.4 422.3 L758.6 427.5 L750.9 436.8Z" fill="#5f7390" fill-opacity=".035" stroke="#8c97a8" stroke-opacity=".42" stroke-width=".6"/><path d="M971.9 644.1 L987.1 641.5 L993.0 649.8 L990.7 656.9 L980.6 661.9 L968.0 663.3 L967.2 652.3Z" fill="#5f7390" fill-opacity=".035" stroke="#8c97a8" stroke-opacity=".42" stroke-width=".6"/><path d="M811.0 376.8 L799.1 383.9 L793.2 379.7 L787.3 371.6 L789.9 362.8 L810.9 364.5 L812.9 370.6Z" fill="#5f7390" fill-opacity=".035" stroke="#8c97a8" stroke-opacity=".42" stroke-width=".6"/><path d="M646.4 450.8 L665.7 435.3 L694.2 445.0 L689.8 458.8 L666.9 466.3Z" fill="#5f7390" fill-opacity=".035" stroke="#8c97a8" stroke-opacity=".42" stroke-width=".6"/><path d="M750.3 753.9 L756.8 747.2 L774.2 754.6 L767.9 764.2 L754.4 761.7Z" fill="#5f7390" fill-opacity=".035" stroke="#8c97a8" stroke-opacity=".42" stroke-width=".6"/><path d="M761.0 490.1 L764.9 494.3 L757.3 497.4 L752.5 492.4Z" fill="#5f7390" fill-opacity=".035" stroke="#8c97a8" stroke-opacity=".42" stroke-width=".6"/><path d="M544.2 383.9 L528.0 376.5 L528.3 365.3 L542.4 362.4 L556.1 375.1Z" fill="#5f7390" fill-opacity=".035" stroke="#8c97a8" stroke-opacity=".42" stroke-width=".6"/><path d="M812.4 613.4 L795.6 615.0 L791.3 606.0 L804.5 595.6 L822.4 602.8Z" fill="#5f7390" fill-opacity=".035" stroke="#8c97a8" stroke-opacity=".42" stroke-width=".6"/><path d="M505.8 435.5 L499.1 429.8 L504.3 416.9 L516.7 415.6 L529.6 419.7 L525.4 425.8 L521.1 436.2Z" fill="#5f7390" fill-opacity=".035" stroke="#8c97a8" stroke-opacity=".42" stroke-width=".6"/><path d="M900.3 626.7 L877.4 621.9 L871.9 607.6 L893.9 604.0 L906.1 612.1Z" fill="#5f7390" fill-opacity=".035" stroke="#8c97a8" stroke-opacity=".42" stroke-width=".6"/><path d="M649.0 694.3 L649.2 702.1 L633.8 698.9 L625.5 695.3 L628.6 684.7 L636.4 681.8 L654.6 685.3Z" fill="#5f7390" fill-opacity=".035" stroke="#8c97a8" stroke-opacity=".42" stroke-width=".6"/><path d="M970.0 752.6 L962.3 754.1 L954.1 751.6 L957.3 742.6 L964.9 742.2 L970.3 748.4Z" fill="#5f7390" fill-opacity=".035" stroke="#8c97a8" stroke-opacity=".42" stroke-width=".6"/><path d="M933.6 789.5 L939.8 780.1 L950.5 780.6 L948.2 788.4Z" fill="#5f7390" fill-opacity=".035" stroke="#8c97a8" stroke-opacity=".42" stroke-width=".6"/><path d="M654.7 668.3 L655.9 665.7 L660.7 664.8 L664.1 666.2 L663.9 668.8 L663.9 671.7 L658.3 672.0Z" fill="#5f7390" fill-opacity=".035" stroke="#8c97a8" stroke-opacity=".42" stroke-width=".6"/><path d="M896.7 734.9 L899.1 721.8 L916.4 714.8 L933.0 726.6 L916.3 736.3Z" fill="#5f7390" fill-opacity=".035" stroke="#8c97a8" stroke-opacity=".42" stroke-width=".6"/><path d="M557.5 454.1 L544.1 459.4 L530.4 448.0 L533.7 439.5 L551.6 441.0Z" fill="#5f7390" fill-opacity=".035" stroke="#8c97a8" stroke-opacity=".42" stroke-width=".6"/><path d="M576.0 344.3 L585.5 342.0 L591.6 348.4 L580.3 352.4 L574.1 351.9Z" fill="#5f7390" fill-opacity=".035" stroke="#8c97a8" stroke-opacity=".42" stroke-width=".6"/><path d="M997.3 573.5 L989.3 576.6 L982.1 571.6 L981.9 562.9 L991.7 560.9 L1001.1 566.8Z" fill="#5f7390" fill-opacity=".035" stroke="#8c97a8" stroke-opacity=".42" stroke-width=".6"/><path d="M670.4 345.8 L679.0 345.1 L680.2 353.4 L667.6 352.8Z" fill="#5f7390" fill-opacity=".035" stroke="#8c97a8" stroke-opacity=".42" stroke-width=".6"/><path d="M760.9 424.8 L744.6 427.2 L738.5 414.9 L758.9 408.0Z" fill="#5f7390" fill-opacity=".035" stroke="#8c97a8" stroke-opacity=".42" stroke-width=".6"/><path d="M920.3 720.9 L897.6 726.4 L892.4 718.3 L894.2 708.6 L913.0 710.4Z" fill="#5f7390" fill-opacity=".035" stroke="#8c97a8" stroke-opacity=".42" stroke-width=".6"/><path d="M750.5 367.0 L732.2 375.1 L713.9 364.5 L711.4 354.2 L719.6 344.3 L737.7 347.6 L748.6 355.9Z" fill="#5f7390" fill-opacity=".035" stroke="#8c97a8" stroke-opacity=".42" stroke-width=".6"/><path d="M530.5 630.2 L522.0 631.4 L518.3 628.0 L514.3 622.9 L522.5 618.6 L528.5 620.2 L532.2 625.3Z" fill="#5f7390" fill-opacity=".035" stroke="#8c97a8" stroke-opacity=".42" stroke-width=".6"/><path d="M566.4 745.8 L562.2 756.9 L552.5 751.6 L553.6 742.9Z" fill="#5f7390" fill-opacity=".035" stroke="#8c97a8" stroke-opacity=".42" stroke-width=".6"/><path d="M605.7 606.5 L599.9 603.2 L598.6 600.3 L602.2 594.7 L608.6 597.0 L614.5 601.2 L612.6 604.7Z" fill="#5f7390" fill-opacity=".035" stroke="#8c97a8" stroke-opacity=".42" stroke-width=".6"/><path d="M717.8 503.9 L713.4 508.6 L700.8 506.1 L703.0 500.6 L711.5 496.7Z" fill="#5f7390" fill-opacity=".035" stroke="#8c97a8" stroke-opacity=".42" stroke-width=".6"/><path d="M800.7 490.1 L808.6 499.6 L798.3 506.9 L784.7 498.2 L788.9 486.5Z" fill="#5f7390" fill-opacity=".035" stroke="#8c97a8" stroke-opacity=".42" stroke-width=".6"/><path d="M733.3 333.5 L726.2 343.3 L713.0 350.3 L695.8 343.6 L701.8 334.2 L717.5 327.9Z" fill="#5f7390" fill-opacity=".035" stroke="#8c97a8" stroke-opacity=".42" stroke-width=".6"/><path d="M729.1 492.3 L731.0 483.7 L740.3 482.6 L749.7 487.9 L739.6 494.4Z" fill="#5f7390" fill-opacity=".035" stroke="#8c97a8" stroke-opacity=".42" stroke-width=".6"/><path d="M673.4 692.2 L663.5 692.5 L654.0 687.8 L658.4 677.1 L667.6 677.0 L677.2 680.9 L676.5 686.9Z" fill="#5f7390" fill-opacity=".035" stroke="#8c97a8" stroke-opacity=".42" stroke-width=".6"/><path d="M630.7 782.6 L633.3 779.7 L642.1 779.4 L645.8 783.3 L646.1 789.3 L641.0 789.4 L631.9 788.0Z" fill="#5f7390" fill-opacity=".035" stroke="#8c97a8" stroke-opacity=".42" stroke-width=".6"/><path d="M990.5 554.8 L991.2 556.4 L990.7 561.1 L982.9 561.8 L979.0 559.1 L979.8 555.3 L982.6 552.5Z" fill="#5f7390" fill-opacity=".035" stroke="#8c97a8" stroke-opacity=".42" stroke-width=".6"/><path d="M954.6 626.2 L966.5 626.7 L975.4 631.9 L964.6 637.3 L954.6 632.9Z" fill="#5f7390" fill-opacity=".035" stroke="#8c97a8" stroke-opacity=".42" stroke-width=".6"/><path d="M765.2 792.1 L773.7 792.9 L779.9 802.1 L770.8 803.3 L759.1 800.9Z" fill="#5f7390" fill-opacity=".035" stroke="#8c97a8" stroke-opacity=".42" stroke-width=".6"/><path d="M716.7 456.4 L694.0 452.7 L694.5 438.1 L720.7 436.7 L733.0 446.8Z" fill="#5f7390" fill-opacity=".035" stroke="#8c97a8" stroke-opacity=".42" stroke-width=".6"/><path d="M654.4 719.1 L646.5 715.4 L653.4 708.3 L662.1 711.5 L667.1 717.9Z" fill="#5f7390" fill-opacity=".035" stroke="#8c97a8" stroke-opacity=".42" stroke-width=".6"/><path d="M542.3 336.3 L527.3 348.6 L510.2 343.3 L514.9 330.2 L520.3 322.4 L536.9 330.8Z" fill="#5f7390" fill-opacity=".035" stroke="#8c97a8" stroke-opacity=".42" stroke-width=".6"/><path d="M550.5 656.3 L549.4 662.1 L547.4 666.4 L539.7 662.9 L537.8 661.0 L540.3 655.2 L547.2 652.6Z" fill="#5f7390" fill-opacity=".035" stroke="#8c97a8" stroke-opacity=".42" stroke-width=".6"/><path d="M693.4 460.2 L673.9 466.9 L656.6 466.9 L641.7 454.1 L646.6 444.8 L666.5 436.5 L691.3 442.9Z" fill="#5f7390" fill-opacity=".035" stroke="#8c97a8" stroke-opacity=".42" stroke-width=".6"/><path d="M915.8 749.6 L910.9 771.8 L884.0 770.6 L878.6 757.8 L891.6 743.3Z" fill="#5f7390" fill-opacity=".035" stroke="#8c97a8" stroke-opacity=".42" stroke-width=".6"/><path d="M523.3 424.1 L528.1 411.3 L544.3 408.6 L559.7 415.6 L546.9 429.2Z" fill="#5f7390" fill-opacity=".035" stroke="#8c97a8" stroke-opacity=".42" stroke-width=".6"/><path d="M987.9 789.6 L989.5 781.5 L999.3 782.8 L1003.3 788.1 L997.6 792.0Z" fill="#5f7390" fill-opacity=".035" stroke="#8c97a8" stroke-opacity=".42" stroke-width=".6"/><path d="M872.9 426.9 L864.4 421.5 L864.3 415.1 L876.1 412.6 L880.1 419.0Z" fill="#5f7390" fill-opacity=".035" stroke="#8c97a8" stroke-opacity=".42" stroke-width=".6"/><path d="M508.2 740.3 L509.6 745.9 L500.1 750.8 L493.9 746.1 L495.2 740.2 L500.7 736.8Z" fill="#5f7390" fill-opacity=".035" stroke="#8c97a8" stroke-opacity=".42" stroke-width=".6"/><path d="M754.5 530.5 L738.6 529.5 L721.3 520.2 L729.9 513.7 L742.0 501.9 L751.8 511.0 L765.4 521.5Z" fill="#5f7390" fill-opacity=".035" stroke="#8c97a8" stroke-opacity=".42" stroke-width=".6"/><path d="M815.4 513.7 L815.9 502.7 L836.5 505.4 L828.8 515.2Z" fill="#5f7390" fill-opacity=".035" stroke="#8c97a8" stroke-opacity=".42" stroke-width=".6"/><path d="M533.6 753.9 L533.4 762.7 L527.0 766.5 L516.7 764.6 L508.9 757.1 L514.9 754.4 L523.6 751.0Z" fill="#5f7390" fill-opacity=".035" stroke="#8c97a8" stroke-opacity=".42" stroke-width=".6"/><path d="M703.3 384.8 L695.9 390.2 L683.8 386.3 L686.1 376.9 L696.8 376.9Z" fill="#5f7390" fill-opacity=".035" stroke="#8c97a8" stroke-opacity=".42" stroke-width=".6"/><path d="M780.4 527.8 L788.1 515.6 L801.6 515.8 L812.8 529.2 L798.0 537.0 L787.4 536.8Z" fill="#5f7390" fill-opacity=".035" stroke="#8c97a8" stroke-opacity=".42" stroke-width=".6"/><path d="M701.4 706.7 L680.8 716.8 L666.9 705.4 L690.3 696.3Z" fill="#5f7390" fill-opacity=".035" stroke="#8c97a8" stroke-opacity=".42" stroke-width=".6"/><path d="M893.9 332.7 L899.2 334.0 L901.3 338.1 L898.8 340.2 L891.2 339.1 L886.8 338.4 L886.3 334.2Z" fill="#5f7390" fill-opacity=".035" stroke="#8c97a8" stroke-opacity=".42" stroke-width=".6"/><path d="M660.8 567.5 L656.5 573.0 L652.6 577.2 L642.9 575.2 L638.2 571.3 L644.1 565.2 L648.8 562.0Z" fill="#5f7390" fill-opacity=".035" stroke="#8c97a8" stroke-opacity=".42" stroke-width=".6"/><path d="M642.1 568.5 L653.4 563.0 L666.8 564.7 L663.4 576.1 L655.7 583.8 L636.0 576.9Z" fill="#5f7390" fill-opacity=".035" stroke="#8c97a8" stroke-opacity=".42" stroke-width=".6"/><path d="M706.4 447.5 L707.2 450.8 L703.7 452.5 L701.0 452.5 L697.8 451.2 L695.8 447.5 L700.6 445.9Z" fill="#5f7390" fill-opacity=".035" stroke="#8c97a8" stroke-opacity=".42" stroke-width=".6"/><path d="M720.4 427.6 L733.7 427.2 L732.4 432.1 L726.9 437.0 L718.5 433.1Z" fill="#5f7390" fill-opacity=".035" stroke="#8c97a8" stroke-opacity=".42" stroke-width=".6"/><path d="M902.0 763.1 L913.6 751.1 L931.1 746.6 L941.8 754.0 L944.1 766.4 L931.5 774.8 L923.4 774.4Z" fill="#5f7390" fill-opacity=".035" stroke="#8c97a8" stroke-opacity=".42" stroke-width=".6"/><path d="M782.2 645.7 L770.2 657.4 L745.7 643.5 L752.7 628.6 L768.7 629.1 L788.5 631.1Z" fill="#5f7390" fill-opacity=".035" stroke="#8c97a8" stroke-opacity=".42" stroke-width=".6"/><path d="M595.8 480.2 L591.3 468.3 L612.4 469.2 L612.1 480.4Z" fill="#5f7390" fill-opacity=".035" stroke="#8c97a8" stroke-opacity=".42" stroke-width=".6"/><path d="M874.8 695.1 L878.6 698.0 L878.1 701.2 L875.0 702.8 L872.7 702.7 L866.8 699.3 L869.4 697.5Z" fill="#5f7390" fill-opacity=".035" stroke="#8c97a8" stroke-opacity=".42" stroke-width=".6"/><path d="M740.7 699.0 L747.4 698.6 L757.1 701.0 L753.0 705.3 L744.0 709.8 L736.8 706.7Z" fill="#5f7390" fill-opacity=".035" stroke="#8c97a8" stroke-opacity=".42" stroke-width=".6"/><path d="M771.0 379.6 L771.6 367.4 L787.8 369.0 L791.1 380.7Z" fill="#5f7390" fill-opacity=".035" stroke="#8c97a8" stroke-opacity=".42" stroke-width=".6"/><path d="M770.8 496.7 L763.9 517.4 L743.9 518.8 L726.7 499.6 L750.1 489.7Z" fill="#5f7390" fill-opacity=".035" stroke="#8c97a8" stroke-opacity=".42" stroke-width=".6"/><path d="M645.8 540.9 L667.8 535.0 L677.4 541.4 L669.5 558.1 L653.9 552.2Z" fill="#5f7390" fill-opacity=".035" stroke="#8c97a8" stroke-opacity=".42" stroke-width=".6"/><path d="M622.5 488.0 L605.5 481.7 L611.8 472.5 L628.7 472.1 L637.3 479.9Z" fill="#5f7390" fill-opacity=".035" stroke="#8c97a8" stroke-opacity=".42" stroke-width=".6"/><path d="M646.6 458.8 L640.5 454.6 L650.3 450.2 L655.1 456.2Z" fill="#5f7390" fill-opacity=".035" stroke="#8c97a8" stroke-opacity=".42" stroke-width=".6"/><path d="M513.7 434.4 L532.5 446.1 L512.6 457.0 L488.3 445.6Z" fill="#5f7390" fill-opacity=".035" stroke="#8c97a8" stroke-opacity=".42" stroke-width=".6"/><path d="M876.6 647.7 L898.0 648.6 L912.1 660.8 L887.4 672.4 L871.2 663.6Z" fill="#5f7390" fill-opacity=".035" stroke="#8c97a8" stroke-opacity=".42" stroke-width=".6"/><path d="M735.1 615.7 L740.0 627.2 L727.6 627.2 L714.4 621.6 L727.2 612.8Z" fill="#5f7390" fill-opacity=".035" stroke="#8c97a8" stroke-opacity=".42" stroke-width=".6"/><path d="M671.9 717.5 L687.7 724.0 L688.0 734.7 L670.7 737.1 L659.2 726.7Z" fill="#5f7390" fill-opacity=".035" stroke="#8c97a8" stroke-opacity=".42" stroke-width=".6"/><path d="M561.8 798.5 L547.1 794.6 L562.5 783.8 L570.5 792.9Z" fill="#5f7390" fill-opacity=".035" stroke="#8c97a8" stroke-opacity=".42" stroke-width=".6"/><path d="M674.0 517.5 L666.4 531.3 L635.5 528.6 L630.2 507.6 L662.4 497.8Z" fill="#5f7390" fill-opacity=".035" stroke="#8c97a8" stroke-opacity=".42" stroke-width=".6"/><path d="M553.5 645.3 L554.2 630.9 L579.5 624.9 L591.3 637.0 L588.0 649.8 L571.1 650.7Z" fill="#5f7390" fill-opacity=".035" stroke="#8c97a8" stroke-opacity=".42" stroke-width=".6"/><path d="M772.7 496.7 L750.1 490.5 L765.4 479.5 L784.2 484.8Z" fill="#5f7390" fill-opacity=".035" stroke="#8c97a8" stroke-opacity=".42" stroke-width=".6"/><path d="M618.8 508.6 L622.3 519.2 L610.3 527.2 L600.0 526.5 L588.0 518.2 L589.9 508.2 L604.9 506.8Z" fill="#5f7390" fill-opacity=".035" stroke="#8c97a8" stroke-opacity=".42" stroke-width=".6"/><path d="M601.7 389.2 L615.0 382.8 L633.7 389.8 L620.9 398.7Z" fill="#5f7390" fill-opacity=".035" stroke="#8c97a8" stroke-opacity=".42" stroke-width=".6"/><path d="M840.2 567.7 L837.8 560.5 L847.8 555.7 L858.1 555.5 L857.9 563.9 L849.6 568.2Z" fill="#5f7390" fill-opacity=".035" stroke="#8c97a8" stroke-opacity=".42" stroke-width=".6"/><path d="M923.1 509.9 L925.6 519.5 L915.7 527.2 L898.3 520.6 L903.6 506.4Z" fill="#5f7390" fill-opacity=".035" stroke="#8c97a8" stroke-opacity=".42" stroke-width=".6"/><path d="M777.4 526.0 L761.6 517.2 L767.1 507.4 L786.6 507.4 L794.9 515.6 L788.1 526.4Z" fill="#5f7390" fill-opacity=".035" stroke="#8c97a8" stroke-opacity=".42" stroke-width=".6"/><path d="M826.4 417.6 L849.0 415.0 L861.3 418.6 L860.0 432.6 L840.6 435.6 L821.0 427.4Z" fill="#5f7390" fill-opacity=".035" stroke="#8c97a8" stroke-opacity=".42" stroke-width=".6"/><path d="M530.1 327.1 L528.9 335.7 L517.8 344.7 L505.3 340.0 L503.0 335.8 L506.2 322.7 L524.5 324.5Z" fill="#5f7390" fill-opacity=".035" stroke="#8c97a8" stroke-opacity=".42" stroke-width=".6"/><path d="M720.5 366.4 L724.5 377.0 L696.7 384.6 L694.0 374.1 L701.9 363.2Z" fill="#5f7390" fill-opacity=".035" stroke="#8c97a8" stroke-opacity=".42" stroke-width=".6"/><path d="M769.9 547.9 L767.2 530.9 L797.0 527.9 L801.1 547.9Z" fill="#5f7390" fill-opacity=".035" stroke="#8c97a8" stroke-opacity=".42" stroke-width=".6"/><path d="M953.5 758.0 L945.7 762.0 L939.7 758.9 L946.1 753.7Z" fill="#5f7390" fill-opacity=".035" stroke="#8c97a8" stroke-opacity=".42" stroke-width=".6"/><path d="M742.6 346.0 L751.9 349.0 L753.3 354.4 L749.2 359.7 L739.1 359.6 L732.0 356.8 L734.8 349.4Z" fill="#5f7390" fill-opacity=".035" stroke="#8c97a8" stroke-opacity=".42" stroke-width=".6"/><path d="M798.5 648.4 L791.2 633.8 L797.0 626.1 L816.9 621.8 L830.4 626.8 L832.8 641.3 L818.8 642.2Z" fill="#5f7390" fill-opacity=".035" stroke="#8c97a8" stroke-opacity=".42" stroke-width=".6"/><path d="M630.8 538.4 L620.9 521.1 L640.7 513.8 L649.9 528.4Z" fill="#5f7390" fill-opacity=".035" stroke="#8c97a8" stroke-opacity=".42" stroke-width=".6"/><path d="M753.5 566.8 L763.7 578.3 L761.7 587.1 L747.6 586.6 L734.8 582.5 L742.6 570.2Z" fill="#5f7390" fill-opacity=".035" stroke="#8c97a8" stroke-opacity=".42" stroke-width=".6"/><path d="M530.7 714.6 L531.8 699.7 L548.8 697.6 L558.5 706.4 L546.9 719.2Z" fill="#5f7390" fill-opacity=".035" stroke="#8c97a8" stroke-opacity=".42" stroke-width=".6"/><path d="M786.5 507.7 L772.4 496.7 L781.0 487.0 L797.0 486.5 L810.4 497.3Z" fill="#5f7390" fill-opacity=".035" stroke="#8c97a8" stroke-opacity=".42" stroke-width=".6"/><path d="M529.2 422.1 L535.5 410.3 L555.8 405.9 L572.1 414.7 L562.1 423.9 L554.8 431.8 L541.5 431.2Z" fill="#5f7390" fill-opacity=".035" stroke="#8c97a8" stroke-opacity=".42" stroke-width=".6"/><path d="M791.7 730.2 L786.9 743.5 L773.2 744.8 L764.9 732.9Z" fill="#5f7390" fill-opacity=".035" stroke="#8c97a8" stroke-opacity=".42" stroke-width=".6"/><path d="M771.5 411.3 L766.5 419.6 L738.8 424.8 L734.0 401.3 L751.1 394.7Z" fill="#5f7390" fill-opacity=".035" stroke="#8c97a8" stroke-opacity=".42" stroke-width=".6"/><path d="M870.3 637.6 L843.9 647.8 L838.9 622.3 L871.0 620.1Z" fill="#5f7390" fill-opacity=".035" stroke="#8c97a8" stroke-opacity=".42" stroke-width=".6"/><path d="M692.3 514.9 L681.6 514.4 L676.7 508.9 L676.3 502.1 L692.4 500.1 L701.2 511.6Z" fill="#5f7390" fill-opacity=".035" stroke="#8c97a8" stroke-opacity=".42" stroke-width=".6"/><path d="M574.3 533.1 L578.6 536.7 L573.7 541.5 L567.9 540.6 L562.3 537.8 L567.8 533.5Z" fill="#5f7390" fill-opacity=".035" stroke="#8c97a8" stroke-opacity=".42" stroke-width=".6"/><path d="M966.4 603.2 L939.2 585.3 L968.5 580.3 L989.6 589.6Z" fill="#5f7390" fill-opacity=".035" stroke="#8c97a8" stroke-opacity=".42" stroke-width=".6"/><path d="M642.9 398.8 L650.3 402.7 L657.8 415.5 L646.2 420.5 L625.4 422.7 L617.5 409.2 L626.8 403.7Z" fill="#5f7390" fill-opacity=".035" stroke="#8c97a8" stroke-opacity=".42" stroke-width=".6"/><path d="M638.6 605.7 L608.2 603.4 L612.1 578.7 L644.0 580.2Z" fill="#5f7390" fill-opacity=".035" stroke="#8c97a8" stroke-opacity=".42" stroke-width=".6"/><path d="M902.3 731.8 L906.9 727.6 L916.5 732.9 L916.9 739.5 L911.4 741.6 L902.1 738.9Z" fill="#5f7390" fill-opacity=".035" stroke="#8c97a8" stroke-opacity=".42" stroke-width=".6"/><path d="M670.7 596.5 L648.1 603.5 L638.3 579.0 L667.8 579.4Z" fill="#5f7390" fill-opacity=".035" stroke="#8c97a8" stroke-opacity=".42" stroke-width=".6"/><path d="M929.5 666.2 L934.6 662.4 L942.8 665.2 L938.3 668.6Z" fill="#5f7390" fill-opacity=".035" stroke="#8c97a8" stroke-opacity=".42" stroke-width=".6"/><path d="M846.4 540.4 L838.6 552.3 L821.6 548.6 L832.9 536.5Z" fill="#5f7390" fill-opacity=".035" stroke="#8c97a8" stroke-opacity=".42" stroke-width=".6"/><path d="M677.5 521.7 L697.3 533.3 L668.3 544.7 L647.4 540.5 L649.6 521.7Z" fill="#5f7390" fill-opacity=".035" stroke="#8c97a8" stroke-opacity=".42" stroke-width=".6"/><path d="M537.4 539.2 L520.8 529.2 L527.9 518.4 L545.3 530.7Z" fill="#5f7390" fill-opacity=".035" stroke="#8c97a8" stroke-opacity=".42" stroke-width=".6"/><path d="M930.0 637.9 L917.8 625.3 L915.0 614.2 L933.1 606.6 L945.9 605.3 L956.8 615.4 L945.6 632.6Z" fill="#5f7390" fill-opacity=".035" stroke="#8c97a8" stroke-opacity=".42" stroke-width=".6"/><path d="M617.7 550.6 L627.5 536.6 L642.2 535.6 L646.9 549.2 L636.2 557.3Z" fill="#5f7390" fill-opacity=".035" stroke="#8c97a8" stroke-opacity=".42" stroke-width=".6"/><path d="M595.4 510.5 L603.9 500.3 L618.1 500.7 L624.4 511.7 L610.1 515.4Z" fill="#5f7390" fill-opacity=".035" stroke="#8c97a8" stroke-opacity=".42" stroke-width=".6"/><path d="M672.9 741.7 L670.3 735.9 L668.1 731.3 L677.7 728.3 L685.2 730.7 L685.1 736.7 L679.8 740.6Z" fill="#5f7390" fill-opacity=".035" stroke="#8c97a8" stroke-opacity=".42" stroke-width=".6"/><path d="M985.5 661.4 L970.0 645.1 L989.1 632.2 L1012.3 633.0 L1018.2 648.8 L1005.4 662.4Z" fill="#5f7390" fill-opacity=".035" stroke="#8c97a8" stroke-opacity=".42" stroke-width=".6"/><path d="M945.2 390.3 L943.5 369.5 L977.9 373.0 L973.3 396.6Z" fill="#5f7390" fill-opacity=".035" stroke="#8c97a8" stroke-opacity=".42" stroke-width=".6"/><path d="M925.2 660.9 L918.2 654.4 L924.8 645.3 L935.5 649.4 L936.0 656.3Z" fill="#5f7390" fill-opacity=".035" stroke="#8c97a8" stroke-opacity=".42" stroke-width=".6"/><path d="M579.9 585.1 L584.6 602.3 L565.7 610.8 L556.7 589.7Z" fill="#5f7390" fill-opacity=".035" stroke="#8c97a8" stroke-opacity=".42" stroke-width=".6"/><path d="M533.4 440.8 L524.5 458.6 L502.5 460.7 L493.2 445.2 L510.1 432.9Z" fill="#5f7390" fill-opacity=".035" stroke="#8c97a8" stroke-opacity=".42" stroke-width=".6"/><path d="M962.3 651.9 L971.7 638.5 L986.4 639.6 L985.8 655.5Z" fill="#5f7390" fill-opacity=".035" stroke="#8c97a8" stroke-opacity=".42" stroke-width=".6"/><path d="M964.1 616.5 L934.4 607.6 L937.4 592.1 L970.8 597.9Z" fill="#5f7390" fill-opacity=".035" stroke="#8c97a8" stroke-opacity=".42" stroke-width=".6"/><path d="M986.9 744.6 L997.5 738.4 L1007.4 740.9 L1008.3 751.8 L989.7 755.3Z" fill="#5f7390" fill-opacity=".035" stroke="#8c97a8" stroke-opacity=".42" stroke-width=".6"/><path d="M853.7 328.8 L850.6 332.4 L846.7 332.7 L843.0 330.3 L842.6 327.2 L847.5 325.3 L849.8 326.9Z" fill="#5f7390" fill-opacity=".035" stroke="#8c97a8" stroke-opacity=".42" stroke-width=".6"/><path d="M887.9 373.2 L886.5 379.2 L876.3 378.9 L876.0 373.5 L880.4 370.6Z" fill="#5f7390" fill-opacity=".035" stroke="#8c97a8" stroke-opacity=".42" stroke-width=".6"/><path d="M803.9 744.8 L790.2 725.8 L833.1 717.8 L835.6 742.1Z" fill="#5f7390" fill-opacity=".035" stroke="#8c97a8" stroke-opacity=".42" stroke-width=".6"/><path d="M610.2 359.6 L601.7 345.0 L625.3 329.9 L643.0 341.0 L644.8 355.4Z" fill="#5f7390" fill-opacity=".035" stroke="#8c97a8" stroke-opacity=".42" stroke-width=".6"/><path d="M626.3 474.6 L621.4 482.5 L600.6 487.2 L591.8 470.0 L599.6 455.5 L623.8 458.1Z" fill="#5f7390" fill-opacity=".035" stroke="#8c97a8" stroke-opacity=".42" stroke-width=".6"/><path d="M569.3 483.7 L584.0 482.1 L600.2 491.2 L592.1 505.8 L574.1 503.4 L561.2 491.9Z" fill="#5f7390" fill-opacity=".035" stroke="#8c97a8" stroke-opacity=".42" stroke-width=".6"/><path d="M697.3 561.9 L711.1 564.9 L708.3 571.3 L698.5 569.0Z" fill="#5f7390" fill-opacity=".035" stroke="#8c97a8" stroke-opacity=".42" stroke-width=".6"/><path d="M849.3 663.4 L839.3 652.7 L853.7 643.3 L869.8 647.0 L869.0 660.6Z" fill="#5f7390" fill-opacity=".035" stroke="#8c97a8" stroke-opacity=".42" stroke-width=".6"/><path d="M675.4 628.1 L668.8 622.1 L678.3 617.8 L683.4 624.5Z" fill="#5f7390" fill-opacity=".035" stroke="#8c97a8" stroke-opacity=".42" stroke-width=".6"/><path d="M929.4 594.0 L952.6 596.2 L952.2 610.1 L932.1 617.5 L924.4 603.2Z" fill="#5f7390" fill-opacity=".035" stroke="#8c97a8" stroke-opacity=".42" stroke-width=".6"/><path d="M788.8 484.2 L782.0 501.6 L763.7 501.4 L744.4 495.1 L741.7 479.2 L762.0 472.6Z" fill="#5f7390" fill-opacity=".035" stroke="#8c97a8" stroke-opacity=".42" stroke-width=".6"/><path d="M535.8 671.1 L511.6 667.7 L509.7 651.5 L523.1 648.3 L537.5 657.5Z" fill="#5f7390" fill-opacity=".035" stroke="#8c97a8" stroke-opacity=".42" stroke-width=".6"/><path d="M855.4 556.5 L847.7 566.0 L833.2 563.0 L835.5 550.3 L848.9 548.8Z" fill="#5f7390" fill-opacity=".035" stroke="#8c97a8" stroke-opacity=".42" stroke-width=".6"/><path d="M975.8 642.3 L978.2 646.8 L975.3 649.8 L967.6 649.8 L965.4 647.0 L970.8 642.0Z" fill="#5f7390" fill-opacity=".035" stroke="#8c97a8" stroke-opacity=".42" stroke-width=".6"/><path d="M736.7 596.8 L724.2 600.3 L713.9 601.4 L715.3 594.7 L717.1 589.6 L724.2 587.6 L733.5 589.2Z" fill="#5f7390" fill-opacity=".035" stroke="#8c97a8" stroke-opacity=".42" stroke-width=".6"/><path d="M804.9 611.0 L831.8 609.8 L843.8 624.9 L818.0 637.7 L799.1 624.5Z" fill="#5f7390" fill-opacity=".035" stroke="#8c97a8" stroke-opacity=".42" stroke-width=".6"/><path d="M547.2 674.6 L541.6 668.1 L543.8 661.6 L553.1 660.0 L558.6 660.3 L563.6 669.0 L555.5 674.9Z" fill="#5f7390" fill-opacity=".035" stroke="#8c97a8" stroke-opacity=".42" stroke-width=".6"/><path d="M989.8 559.5 L980.4 566.4 L964.0 567.2 L958.7 552.8 L980.6 550.7Z" fill="#5f7390" fill-opacity=".035" stroke="#8c97a8" stroke-opacity=".42" stroke-width=".6"/><path d="M672.0 345.9 L672.9 334.8 L681.9 329.1 L700.1 329.4 L699.9 340.8 L698.3 346.8 L683.5 349.1Z" fill="#5f7390" fill-opacity=".035" stroke="#8c97a8" stroke-opacity=".42" stroke-width=".6"/><path d="M587.2 367.9 L588.5 361.5 L599.2 358.8 L610.2 362.0 L608.7 368.5 L597.0 371.7Z" fill="#5f7390" fill-opacity=".035" stroke="#8c97a8" stroke-opacity=".42" stroke-width=".6"/><path d="M676.0 634.9 L682.7 630.7 L690.9 635.1 L690.3 640.6 L680.3 640.1Z" fill="#5f7390" fill-opacity=".035" stroke="#8c97a8" stroke-opacity=".42" stroke-width=".6"/><path d="M623.1 540.9 L613.5 540.8 L613.5 532.2 L622.4 528.4 L630.9 533.2Z" fill="#5f7390" fill-opacity=".035" stroke="#8c97a8" stroke-opacity=".42" stroke-width=".6"/><path d="M621.3 593.5 L621.7 599.0 L617.5 600.9 L609.1 601.7 L605.9 596.1 L609.7 592.4 L614.4 591.1Z" fill="#5f7390" fill-opacity=".035" stroke="#8c97a8" stroke-opacity=".42" stroke-width=".6"/><path d="M773.0 777.8 L779.4 781.9 L778.4 787.2 L771.8 789.6 L764.5 787.8 L764.6 780.4Z" fill="#5f7390" fill-opacity=".035" stroke="#8c97a8" stroke-opacity=".42" stroke-width=".6"/><path d="M817.2 747.9 L798.7 746.6 L801.8 734.6 L812.7 727.1 L829.3 739.4Z" fill="#5f7390" fill-opacity=".035" stroke="#8c97a8" stroke-opacity=".42" stroke-width=".6"/><path d="M519.2 614.4 L515.8 611.3 L515.5 608.2 L520.0 605.3 L528.4 607.9 L527.0 612.3 L524.7 614.7Z" fill="#5f7390" fill-opacity=".035" stroke="#8c97a8" stroke-opacity=".42" stroke-width=".6"/><path d="M946.9 733.6 L972.8 730.4 L979.9 739.0 L969.9 751.5 L957.9 745.5Z" fill="#5f7390" fill-opacity=".035" stroke="#8c97a8" stroke-opacity=".42" stroke-width=".6"/><path d="M784.7 514.4 L776.6 504.8 L796.7 501.5 L797.0 512.4Z" fill="#5f7390" fill-opacity=".035" stroke="#8c97a8" stroke-opacity=".42" stroke-width=".6"/><path d="M666.4 345.6 L699.0 343.5 L719.5 351.2 L701.6 371.6 L674.8 365.9Z" fill="#5f7390" fill-opacity=".035" stroke="#8c97a8" stroke-opacity=".42" stroke-width=".6"/><path d="M670.7 444.7 L698.2 450.1 L697.2 464.7 L678.1 470.4 L665.4 462.1Z" fill="#5f7390" fill-opacity=".035" stroke="#8c97a8" stroke-opacity=".42" stroke-width=".6"/><path d="M678.0 788.4 L672.8 797.7 L655.3 803.8 L649.1 795.3 L658.5 782.8Z" fill="#5f7390" fill-opacity=".035" stroke="#8c97a8" stroke-opacity=".42" stroke-width=".6"/><path d="M712.8 742.6 L707.5 737.7 L712.1 734.1 L715.9 734.1 L723.0 736.7 L719.3 740.7Z" fill="#5f7390" fill-opacity=".035" stroke="#8c97a8" stroke-opacity=".42" stroke-width=".6"/><path d="M543.2 437.0 L552.8 435.6 L555.1 438.4 L552.2 444.1 L543.3 441.9Z" fill="#5f7390" fill-opacity=".035" stroke="#8c97a8" stroke-opacity=".42" stroke-width=".6"/><path d="M591.6 485.2 L589.1 476.8 L600.6 466.4 L621.2 471.5 L620.7 484.8 L607.8 488.6Z" fill="#5f7390" fill-opacity=".035" stroke="#8c97a8" stroke-opacity=".42" stroke-width=".6"/><path d="M939.3 600.4 L953.7 583.9 L982.8 582.5 L972.1 606.0Z" fill="#5f7390" fill-opacity=".035" stroke="#8c97a8" stroke-opacity=".42" stroke-width=".6"/><path d="M663.1 636.7 L685.5 639.2 L694.4 655.1 L669.4 660.2 L646.1 650.2Z" fill="#5f7390" fill-opacity=".035" stroke="#8c97a8" stroke-opacity=".42" stroke-width=".6"/><path d="M739.6 461.9 L717.9 466.1 L708.6 454.8 L723.3 445.3 L736.1 452.2Z" fill="#5f7390" fill-opacity=".035" stroke="#8c97a8" stroke-opacity=".42" stroke-width=".6"/><path d="M568.1 342.3 L583.8 348.1 L581.9 359.1 L569.4 362.5 L559.0 362.0 L550.0 353.6 L553.7 344.8Z" fill="#5f7390" fill-opacity=".035" stroke="#8c97a8" stroke-opacity=".42" stroke-width=".6"/><path d="M982.1 623.8 L976.5 628.0 L967.4 625.3 L968.9 617.3 L981.3 616.7Z" fill="#5f7390" fill-opacity=".035" stroke="#8c97a8" stroke-opacity=".42" stroke-width=".6"/><path d="M745.5 757.5 L763.1 770.7 L746.8 782.2 L722.7 773.9 L723.4 757.0Z" fill="#5f7390" fill-opacity=".035" stroke="#8c97a8" stroke-opacity=".42" stroke-width=".6"/><path d="M609.0 754.6 L601.1 749.6 L590.3 745.6 L596.2 736.8 L611.1 736.3 L614.8 743.9Z" fill="#5f7390" fill-opacity=".035" stroke="#8c97a8" stroke-opacity=".42" stroke-width=".6"/><path d="M928.4 792.2 L921.5 787.0 L929.6 780.8 L936.8 787.7Z" fill="#5f7390" fill-opacity=".035" stroke="#8c97a8" stroke-opacity=".42" stroke-width=".6"/><path d="M503.4 662.5 L486.2 654.5 L489.8 648.2 L501.7 641.0 L514.3 639.6 L525.2 653.8 L514.1 662.6Z" fill="#5f7390" fill-opacity=".035" stroke="#8c97a8" stroke-opacity=".42" stroke-width=".6"/><path d="M623.3 543.9 L633.2 554.6 L636.6 564.3 L629.9 575.8 L611.2 578.9 L596.4 568.9 L599.0 554.3Z" fill="#5f7390" fill-opacity=".035" stroke="#8c97a8" stroke-opacity=".42" stroke-width=".6"/><path d="M729.8 626.3 L742.8 622.0 L753.1 631.0 L743.4 640.8 L725.3 638.2Z" fill="#5f7390" fill-opacity=".035" stroke="#8c97a8" stroke-opacity=".42" stroke-width=".6"/><path d="M673.9 620.3 L672.4 633.5 L655.7 633.4 L642.5 620.9 L655.2 612.4Z" fill="#5f7390" fill-opacity=".035" stroke="#8c97a8" stroke-opacity=".42" stroke-width=".6"/><path d="M685.1 428.1 L674.5 423.9 L677.5 415.5 L686.9 418.4 L692.6 422.7Z" fill="#5f7390" fill-opacity=".035" stroke="#8c97a8" stroke-opacity=".42" stroke-width=".6"/><path d="M584.5 572.5 L583.0 569.1 L587.8 567.6 L592.9 568.9 L590.6 572.5Z" fill="#5f7390" fill-opacity=".035" stroke="#8c97a8" stroke-opacity=".42" stroke-width=".6"/><path d="M511.2 669.9 L529.1 667.2 L539.6 683.7 L531.1 698.5 L512.6 698.5 L504.2 684.8Z" fill="#5f7390" fill-opacity=".035" stroke="#8c97a8" stroke-opacity=".42" stroke-width=".6"/><path d="M513.4 436.7 L507.7 441.4 L502.7 439.5 L495.0 437.5 L498.9 432.4 L506.2 428.4 L511.2 429.5Z" fill="#5f7390" fill-opacity=".035" stroke="#8c97a8" stroke-opacity=".42" stroke-width=".6"/><path d="M645.5 525.0 L629.3 507.2 L654.3 500.9 L672.7 515.2Z" fill="#5f7390" fill-opacity=".035" stroke="#8c97a8" stroke-opacity=".42" stroke-width=".6"/><path d="M956.6 642.9 L952.9 629.0 L966.0 625.5 L984.9 634.1 L975.9 646.1Z" fill="#5f7390" fill-opacity=".035" stroke="#8c97a8" stroke-opacity=".42" stroke-width=".6"/><path d="M641.1 696.4 L647.3 704.5 L638.2 708.2 L628.2 707.6 L625.6 699.4Z" fill="#5f7390" fill-opacity=".035" stroke="#8c97a8" stroke-opacity=".42" stroke-width=".6"/><path d="M534.3 603.1 L544.0 603.8 L544.5 609.5 L542.5 613.0 L532.2 613.1 L529.4 609.4 L530.3 606.2Z" fill="#5f7390" fill-opacity=".035" stroke="#8c97a8" stroke-opacity=".42" stroke-width=".6"/><path d="M605.0 713.2 L621.2 714.1 L627.6 723.8 L622.0 731.8 L602.5 731.6 L589.9 721.6Z" fill="#5f7390" fill-opacity=".035" stroke="#8c97a8" stroke-opacity=".42" stroke-width=".6"/><path d="M658.3 728.5 L657.5 721.7 L664.6 720.5 L672.0 724.0 L666.3 730.0Z" fill="#5f7390" fill-opacity=".035" stroke="#8c97a8" stroke-opacity=".42" stroke-width=".6"/><path d="M564.9 719.4 L560.4 722.6 L550.9 720.9 L553.5 715.5 L559.9 712.4Z" fill="#5f7390" fill-opacity=".035" stroke="#8c97a8" stroke-opacity=".42" stroke-width=".6"/><path d="M792.1 581.7 L798.0 576.7 L804.5 577.5 L804.8 582.2 L800.2 585.1Z" fill="#5f7390" fill-opacity=".035" stroke="#8c97a8" stroke-opacity=".42" stroke-width=".6"/><path d="M582.9 479.8 L595.7 487.5 L592.8 496.5 L577.0 499.9 L573.3 487.9Z" fill="#5f7390" fill-opacity=".035" stroke="#8c97a8" stroke-opacity=".42" stroke-width=".6"/><path d="M512.0 569.6 L511.5 564.3 L519.5 563.4 L521.9 568.0 L518.2 574.1Z" fill="#5f7390" fill-opacity=".035" stroke="#8c97a8" stroke-opacity=".42" stroke-width=".6"/><path d="M657.8 451.7 L650.7 453.1 L644.9 448.7 L650.9 443.9 L657.6 445.5Z" fill="#5f7390" fill-opacity=".035" stroke="#8c97a8" stroke-opacity=".42" stroke-width=".6"/><path d="M595.4 383.6 L598.0 378.6 L605.9 378.2 L609.8 382.6 L608.5 387.4 L604.4 389.0 L596.4 389.9Z" fill="#5f7390" fill-opacity=".035" stroke="#8c97a8" stroke-opacity=".42" stroke-width=".6"/><path d="M649.2 753.0 L641.3 752.1 L641.5 747.3 L643.1 745.2 L647.4 742.5 L651.6 745.6 L654.2 749.3Z" fill="#5f7390" fill-opacity=".035" stroke="#8c97a8" stroke-opacity=".42" stroke-width=".6"/><path d="M797.0 402.2 L807.0 407.6 L807.9 415.9 L793.9 416.8 L784.9 411.7 L791.7 406.8Z" fill="#5f7390" fill-opacity=".035" stroke="#8c97a8" stroke-opacity=".42" stroke-width=".6"/><path d="M845.9 676.0 L843.4 682.9 L834.9 684.9 L828.4 677.8 L834.0 672.7Z" fill="#5f7390" fill-opacity=".035" stroke="#8c97a8" stroke-opacity=".42" stroke-width=".6"/><path d="M768.0 770.1 L774.3 772.9 L770.2 779.0 L760.1 778.4 L758.8 773.8Z" fill="#5f7390" fill-opacity=".035" stroke="#8c97a8" stroke-opacity=".42" stroke-width=".6"/><path d="M704.2 613.3 L720.7 626.0 L702.9 635.8 L676.6 626.9 L681.8 615.6Z" fill="#5f7390" fill-opacity=".035" stroke="#8c97a8" stroke-opacity=".42" stroke-width=".6"/><path d="M495.7 383.3 L495.0 371.7 L506.4 363.4 L520.8 367.9 L520.3 384.1 L505.3 389.3Z" fill="#5f7390" fill-opacity=".035" stroke="#8c97a8" stroke-opacity=".42" stroke-width=".6"/><path d="M763.0 442.3 L764.6 435.8 L775.1 434.4 L776.8 445.3Z" fill="#5f7390" fill-opacity=".035" stroke="#8c97a8" stroke-opacity=".42" stroke-width=".6"/><path d="M764.8 490.4 L765.4 506.3 L737.1 505.9 L735.1 485.8Z" fill="#5f7390" fill-opacity=".035" stroke="#8c97a8" stroke-opacity=".42" stroke-width=".6"/><path d="M979.3 556.8 L974.2 556.9 L970.6 552.1 L975.1 549.4 L981.0 552.0Z" fill="#5f7390" fill-opacity=".035" stroke="#8c97a8" stroke-opacity=".42" stroke-width=".6"/><path d="M973.1 630.5 L984.6 621.5 L1002.9 622.1 L1010.5 629.1 L997.0 643.2 L982.3 640.9Z" fill="#5f7390" fill-opacity=".035" stroke="#8c97a8" stroke-opacity=".42" stroke-width=".6"/><path d="M640.1 561.9 L663.6 559.9 L674.3 577.9 L645.0 582.8Z" fill="#5f7390" fill-opacity=".035" stroke="#8c97a8" stroke-opacity=".42" stroke-width=".6"/><path d="M949.1 526.0 L952.9 511.4 L973.8 505.5 L984.8 517.5 L969.2 526.3Z" fill="#5f7390" fill-opacity=".035" stroke="#8c97a8" stroke-opacity=".42" stroke-width=".6"/><path d="M639.5 443.1 L632.6 444.8 L628.7 441.7 L625.9 439.9 L631.3 436.6 L635.9 434.8 L641.1 439.1Z" fill="#5f7390" fill-opacity=".035" stroke="#8c97a8" stroke-opacity=".42" stroke-width=".6"/><path d="M695.5 553.8 L712.6 556.5 L708.6 565.5 L694.2 570.5 L692.8 562.7Z" fill="#5f7390" fill-opacity=".035" stroke="#8c97a8" stroke-opacity=".42" stroke-width=".6"/><path d="M773.2 432.5 L792.6 425.9 L801.7 432.8 L792.6 444.5 L774.7 442.3Z" fill="#5f7390" fill-opacity=".035" stroke="#8c97a8" stroke-opacity=".42" stroke-width=".6"/><path d="M884.4 725.2 L865.1 723.3 L854.9 715.0 L873.6 704.8 L885.0 709.5Z" fill="#5f7390" fill-opacity=".035" stroke="#8c97a8" stroke-opacity=".42" stroke-width=".6"/><path d="M534.9 654.0 L533.7 635.2 L557.6 630.6 L564.5 652.4Z" fill="#5f7390" fill-opacity=".035" stroke="#8c97a8" stroke-opacity=".42" stroke-width=".6"/><path d="M540.5 539.4 L527.8 547.3 L516.1 534.6 L533.2 527.8Z" fill="#5f7390" fill-opacity=".035" stroke="#8c97a8" stroke-opacity=".42" stroke-width=".6"/><path d="M911.7 784.1 L902.3 790.0 L892.8 782.2 L898.7 776.3 L910.1 776.5Z" fill="#5f7390" fill-opacity=".035" stroke="#8c97a8" stroke-opacity=".42" stroke-width=".6"/><path d="M602.7 663.5 L609.3 672.6 L609.4 683.1 L596.3 685.9 L583.6 680.7 L589.8 669.5Z" fill="#5f7390" fill-opacity=".035" stroke="#8c97a8" stroke-opacity=".42" stroke-width=".6"/><path d="M677.4 534.1 L654.9 531.8 L663.1 520.8 L668.3 511.9 L693.8 510.8 L693.1 521.2 L691.4 528.8Z" fill="#5f7390" fill-opacity=".035" stroke="#8c97a8" stroke-opacity=".42" stroke-width=".6"/><path d="M979.0 798.8 L971.5 797.3 L961.1 790.0 L963.4 783.3 L981.2 785.7 L985.4 791.5Z" fill="#5f7390" fill-opacity=".035" stroke="#8c97a8" stroke-opacity=".42" stroke-width=".6"/><path d="M776.0 747.4 L796.4 748.9 L813.3 759.4 L791.1 769.6 L772.8 763.6Z" fill="#5f7390" fill-opacity=".035" stroke="#8c97a8" stroke-opacity=".42" stroke-width=".6"/><path d="M602.3 529.1 L612.7 538.9 L615.5 549.4 L594.8 552.8 L583.0 547.2 L590.5 536.2Z" fill="#5f7390" fill-opacity=".035" stroke="#8c97a8" stroke-opacity=".42" stroke-width=".6"/><path d="M770.5 506.6 L758.4 518.4 L736.8 510.9 L740.4 498.0 L751.7 493.8Z" fill="#5f7390" fill-opacity=".035" stroke="#8c97a8" stroke-opacity=".42" stroke-width=".6"/><path d="M728.1 765.0 L711.4 782.4 L681.6 783.2 L684.5 756.2Z" fill="#5f7390" fill-opacity=".035" stroke="#8c97a8" stroke-opacity=".42" stroke-width=".6"/><path d="M882.3 571.1 L898.7 569.7 L910.4 571.2 L911.0 584.2 L903.5 593.2 L884.7 593.0 L883.9 581.0Z" fill="#5f7390" fill-opacity=".035" stroke="#8c97a8" stroke-opacity=".42" stroke-width=".6"/><path d="M847.9 368.3 L835.9 371.7 L833.0 362.5 L843.1 361.3Z" fill="#5f7390" fill-opacity=".035" stroke="#8c97a8" stroke-opacity=".42" stroke-width=".6"/><path d="M833.5 691.4 L835.2 683.5 L846.6 682.4 L853.8 688.7 L847.1 692.7 L839.2 696.4Z" fill="#5f7390" fill-opacity=".035" stroke="#8c97a8" stroke-opacity=".42" stroke-width=".6"/><path d="M709.2 743.3 L710.8 738.2 L719.3 738.1 L726.9 743.7 L716.0 749.3Z" fill="#5f7390" fill-opacity=".035" stroke="#8c97a8" stroke-opacity=".42" stroke-width=".6"/><path d="M882.1 737.3 L864.7 727.5 L874.6 703.4 L899.9 708.2 L906.3 733.4Z" fill="#5f7390" fill-opacity=".035" stroke="#8c97a8" stroke-opacity=".42" stroke-width=".6"/><path d="M894.3 579.2 L893.1 574.6 L900.6 573.8 L904.8 578.2 L898.4 583.4Z" fill="#5f7390" fill-opacity=".035" stroke="#8c97a8" stroke-opacity=".42" stroke-width=".6"/><path d="M884.6 632.1 L870.9 627.2 L887.7 615.3 L903.7 615.9 L905.3 632.5Z" fill="#5f7390" fill-opacity=".035" stroke="#8c97a8" stroke-opacity=".42" stroke-width=".6"/><path d="M533.4 678.1 L524.5 662.9 L548.4 665.1 L547.3 677.4Z" fill="#5f7390" fill-opacity=".035" stroke="#8c97a8" stroke-opacity=".42" stroke-width=".6"/><path d="M540.8 469.8 L545.3 461.2 L556.6 463.8 L559.9 471.4 L548.1 478.4Z" fill="#5f7390" fill-opacity=".035" stroke="#8c97a8" stroke-opacity=".42" stroke-width=".6"/><path d="M842.9 457.2 L835.6 459.4 L832.8 456.9 L833.6 452.2 L839.2 453.4Z" fill="#5f7390" fill-opacity=".035" stroke="#8c97a8" stroke-opacity=".42" stroke-width=".6"/><path d="M799.0 345.3 L804.6 355.6 L795.1 361.9 L784.1 356.3 L788.3 348.9Z" fill="#5f7390" fill-opacity=".035" stroke="#8c97a8" stroke-opacity=".42" stroke-width=".6"/><path d="M914.1 436.9 L916.7 432.7 L923.0 431.3 L925.4 436.2 L923.4 438.0 L918.1 439.4Z" fill="#5f7390" fill-opacity=".035" stroke="#8c97a8" stroke-opacity=".42" stroke-width=".6"/><path d="M669.8 339.3 L686.6 347.4 L687.5 354.8 L670.3 359.6 L656.8 359.2 L659.6 348.8Z" fill="#5f7390" fill-opacity=".035" stroke="#8c97a8" stroke-opacity=".42" stroke-width=".6"/><path d="M644.2 767.4 L633.1 774.0 L622.9 765.5 L630.1 754.9 L638.8 758.5Z" fill="#5f7390" fill-opacity=".035" stroke="#8c97a8" stroke-opacity=".42" stroke-width=".6"/><path d="M839.5 332.6 L850.0 320.4 L862.4 328.1 L855.9 337.6Z" fill="#5f7390" fill-opacity=".035" stroke="#8c97a8" stroke-opacity=".42" stroke-width=".6"/><path d="M565.3 497.0 L580.2 483.1 L594.6 494.6 L582.7 503.2Z" fill="#5f7390" fill-opacity=".035" stroke="#8c97a8" stroke-opacity=".42" stroke-width=".6"/><path d="M1010.7 541.6 L1001.9 548.0 L994.2 542.9 L997.7 537.1 L1008.0 536.0Z" fill="#5f7390" fill-opacity=".035" stroke="#8c97a8" stroke-opacity=".42" stroke-width=".6"/><path d="M779.4 512.5 L776.0 514.9 L764.5 512.4 L766.6 507.5 L769.7 501.8 L779.6 502.4 L786.0 508.4Z" fill="#5f7390" fill-opacity=".035" stroke="#8c97a8" stroke-opacity=".42" stroke-width=".6"/><path d="M942.0 783.9 L928.0 787.7 L922.6 784.4 L924.6 777.2 L930.5 773.1 L941.3 775.5Z" fill="#5f7390" fill-opacity=".035" stroke="#8c97a8" stroke-opacity=".42" stroke-width=".6"/><path d="M846.2 592.3 L864.8 592.5 L864.1 600.1 L859.4 610.3 L849.7 611.2 L843.1 602.9Z" fill="#5f7390" fill-opacity=".035" stroke="#8c97a8" stroke-opacity=".42" stroke-width=".6"/><path d="M674.0 562.0 L698.0 568.7 L685.6 584.8 L665.1 578.6Z" fill="#5f7390" fill-opacity=".035" stroke="#8c97a8" stroke-opacity=".42" stroke-width=".6"/><path d="M981.1 738.6 L991.2 748.6 L987.5 758.2 L969.9 751.4 L969.9 742.3Z" fill="#5f7390" fill-opacity=".035" stroke="#8c97a8" stroke-opacity=".42" stroke-width=".6"/><path d="M830.1 685.5 L838.0 683.7 L840.9 690.7 L833.6 694.1 L826.0 691.4Z" fill="#5f7390" fill-opacity=".035" stroke="#8c97a8" stroke-opacity=".42" stroke-width=".6"/><path d="M669.8 676.6 L678.3 680.3 L682.6 686.5 L676.2 690.8 L667.1 691.7 L663.5 683.0Z" fill="#5f7390" fill-opacity=".035" stroke="#8c97a8" stroke-opacity=".42" stroke-width=".6"/><path d="M919.9 627.8 L931.1 629.2 L934.6 635.0 L922.0 636.4Z" fill="#5f7390" fill-opacity=".035" stroke="#8c97a8" stroke-opacity=".42" stroke-width=".6"/><path d="M542.4 325.7 L537.2 333.5 L530.8 329.6 L528.2 320.7 L536.4 321.1Z" fill="#5f7390" fill-opacity=".035" stroke="#8c97a8" stroke-opacity=".42" stroke-width=".6"/><path d="M772.5 468.0 L773.2 477.4 L766.6 482.1 L753.6 480.0 L751.8 473.0 L759.5 469.7Z" fill="#5f7390" fill-opacity=".035" stroke="#8c97a8" stroke-opacity=".42" stroke-width=".6"/><path d="M812.4 784.7 L821.5 795.0 L809.3 807.8 L790.8 801.1 L793.7 783.9Z" fill="#5f7390" fill-opacity=".035" stroke="#8c97a8" stroke-opacity=".42" stroke-width=".6"/><path d="M721.9 709.7 L734.2 703.1 L746.9 706.6 L750.3 714.8 L737.0 724.5 L723.1 721.6Z" fill="#5f7390" fill-opacity=".035" stroke="#8c97a8" stroke-opacity=".42" stroke-width=".6"/><path d="M602.5 454.9 L612.8 449.9 L623.1 458.5 L627.3 469.7 L604.3 474.5 L591.2 463.8Z" fill="#5f7390" fill-opacity=".035" stroke="#8c97a8" stroke-opacity=".42" stroke-width=".6"/><path d="M656.4 463.2 L670.9 474.8 L655.7 487.6 L642.2 473.9Z" fill="#5f7390" fill-opacity=".035" stroke="#8c97a8" stroke-opacity=".42" stroke-width=".6"/><path d="M654.3 687.6 L672.8 686.7 L675.5 704.4 L660.8 712.3 L643.2 698.7Z" fill="#5f7390" fill-opacity=".035" stroke="#8c97a8" stroke-opacity=".42" stroke-width=".6"/><path d="M914.2 767.0 L926.1 764.2 L937.2 768.7 L932.8 776.5 L917.3 778.9Z" fill="#5f7390" fill-opacity=".035" stroke="#8c97a8" stroke-opacity=".42" stroke-width=".6"/><path d="M777.9 367.8 L764.6 349.1 L781.6 342.9 L802.2 355.8Z" fill="#5f7390" fill-opacity=".035" stroke="#8c97a8" stroke-opacity=".42" stroke-width=".6"/><path d="M509.3 457.8 L526.4 447.3 L540.1 455.9 L542.2 471.7 L515.7 471.0Z" fill="#5f7390" fill-opacity=".035" stroke="#8c97a8" stroke-opacity=".42" stroke-width=".6"/><path d="M873.9 389.7 L868.3 390.8 L858.0 388.6 L859.1 382.3 L868.9 380.9 L876.2 384.3Z" fill="#5f7390" fill-opacity=".035" stroke="#8c97a8" stroke-opacity=".42" stroke-width=".6"/><path d="M698.1 724.2 L695.6 718.3 L701.5 704.7 L711.3 697.7 L727.6 711.3 L727.9 720.6 L720.7 731.5Z" fill="#5f7390" fill-opacity=".035" stroke="#8c97a8" stroke-opacity=".42" stroke-width=".6"/><path d="M504.1 629.7 L527.9 637.9 L526.7 651.1 L510.5 656.3 L497.0 655.8 L491.4 645.9 L493.5 637.9Z" fill="#5f7390" fill-opacity=".035" stroke="#8c97a8" stroke-opacity=".42" stroke-width=".6"/><path d="M889.4 742.3 L883.2 733.8 L891.2 732.4 L901.7 736.9 L900.5 743.4Z" fill="#5f7390" fill-opacity=".035" stroke="#8c97a8" stroke-opacity=".42" stroke-width=".6"/><path d="M714.2 757.4 L690.5 749.9 L695.9 734.7 L715.2 731.6 L722.4 741.4Z" fill="#5f7390" fill-opacity=".035" stroke="#8c97a8" stroke-opacity=".42" stroke-width=".6"/><path d="M579.6 577.8 L599.7 577.6 L609.0 582.1 L594.8 591.8 L584.8 588.2Z" fill="#5f7390" fill-opacity=".035" stroke="#8c97a8" stroke-opacity=".42" stroke-width=".6"/><path d="M506.4 560.1 L518.2 549.9 L546.7 558.7 L541.4 572.9 L522.4 577.8Z" fill="#5f7390" fill-opacity=".035" stroke="#8c97a8" stroke-opacity=".42" stroke-width=".6"/><path d="M760.5 543.6 L764.0 549.1 L756.0 552.4 L752.1 546.2Z" fill="#5f7390" fill-opacity=".035" stroke="#8c97a8" stroke-opacity=".42" stroke-width=".6"/><path d="M940.0 774.6 L959.8 786.8 L935.2 797.6 L920.6 786.0Z" fill="#5f7390" fill-opacity=".035" stroke="#8c97a8" stroke-opacity=".42" stroke-width=".6"/><path d="M557.0 368.2 L533.0 367.0 L526.6 357.4 L531.7 349.9 L550.0 343.6 L558.6 354.5Z" fill="#5f7390" fill-opacity=".035" stroke="#8c97a8" stroke-opacity=".42" stroke-width=".6"/><path d="M616.2 368.0 L603.6 370.0 L601.2 363.3 L607.3 358.6 L617.5 361.6Z" fill="#5f7390" fill-opacity=".035" stroke="#8c97a8" stroke-opacity=".42" stroke-width=".6"/><path d="M761.4 433.0 L758.5 440.1 L746.7 441.7 L738.0 438.5 L745.8 430.6 L757.3 426.9Z" fill="#5f7390" fill-opacity=".035" stroke="#8c97a8" stroke-opacity=".42" stroke-width=".6"/><path d="M694.9 621.0 L695.1 636.3 L678.6 640.4 L654.4 627.8 L662.8 615.3 L682.6 611.8Z" fill="#5f7390" fill-opacity=".035" stroke="#8c97a8" stroke-opacity=".42" stroke-width=".6"/><path d="M656.3 774.1 L657.0 768.5 L664.4 765.9 L670.7 771.1 L666.5 774.4Z" fill="#5f7390" fill-opacity=".035" stroke="#8c97a8" stroke-opacity=".42" stroke-width=".6"/><path d="M553.1 380.1 L568.9 391.6 L550.1 402.1 L537.0 390.1Z" fill="#5f7390" fill-opacity=".035" stroke="#8c97a8" stroke-opacity=".42" stroke-width=".6"/><path d="M597.7 385.0 L585.0 391.2 L581.6 383.2 L592.3 376.5Z" fill="#5f7390" fill-opacity=".035" stroke="#8c97a8" stroke-opacity=".42" stroke-width=".6"/><path d="M832.9 792.6 L829.1 785.9 L830.7 776.7 L842.0 776.1 L850.2 786.3 L843.1 792.3Z" fill="#5f7390" fill-opacity=".035" stroke="#8c97a8" stroke-opacity=".42" stroke-width=".6"/><path d="M817.8 742.7 L832.4 751.8 L829.2 759.8 L811.7 771.0 L796.4 763.4 L796.8 756.6 L798.4 743.8Z" fill="#5f7390" fill-opacity=".035" stroke="#8c97a8" stroke-opacity=".42" stroke-width=".6"/><path d="M519.8 703.2 L515.4 712.0 L507.0 720.0 L490.6 716.2 L477.4 704.1 L485.4 694.2 L505.6 688.8Z" fill="#5f7390" fill-opacity=".035" stroke="#8c97a8" stroke-opacity=".42" stroke-width=".6"/><path d="M620.6 640.5 L604.9 649.7 L592.8 640.2 L607.8 629.1Z" fill="#5f7390" fill-opacity=".035" stroke="#8c97a8" stroke-opacity=".42" stroke-width=".6"/><path d="M641.5 767.5 L631.6 765.3 L632.8 758.7 L643.4 759.3Z" fill="#5f7390" fill-opacity=".035" stroke="#8c97a8" stroke-opacity=".42" stroke-width=".6"/><path d="M545.5 456.8 L546.0 451.8 L551.3 450.7 L557.6 454.6 L556.3 458.7 L550.8 461.9Z" fill="#5f7390" fill-opacity=".035" stroke="#8c97a8" stroke-opacity=".42" stroke-width=".6"/><path d="M970.2 791.6 L980.1 792.5 L987.9 798.5 L978.7 804.4 L969.6 809.1 L962.8 805.0 L960.4 794.2Z" fill="#5f7390" fill-opacity=".035" stroke="#8c97a8" stroke-opacity=".42" stroke-width=".6"/><path d="M969.4 505.0 L956.9 496.4 L960.3 475.6 L982.0 478.6 L983.8 497.0Z" fill="#5f7390" fill-opacity=".035" stroke="#8c97a8" stroke-opacity=".42" stroke-width=".6"/><path d="M912.5 602.1 L940.5 599.7 L941.2 626.7 L908.1 623.2Z" fill="#5f7390" fill-opacity=".035" stroke="#8c97a8" stroke-opacity=".42" stroke-width=".6"/><path d="M555.7 399.8 L543.7 417.6 L518.7 409.7 L508.7 389.3 L536.4 383.0Z" fill="#5f7390" fill-opacity=".035" stroke="#8c97a8" stroke-opacity=".42" stroke-width=".6"/><path d="M634.2 535.3 L629.8 553.8 L611.9 554.9 L596.5 542.8 L611.2 532.4Z" fill="#5f7390" fill-opacity=".035" stroke="#8c97a8" stroke-opacity=".42" stroke-width=".6"/><path d="M772.6 696.0 L757.8 685.6 L777.5 677.2 L793.2 681.8 L791.8 695.1Z" fill="#5f7390" fill-opacity=".035" stroke="#8c97a8" stroke-opacity=".42" stroke-width=".6"/><path d="M640.6 527.7 L667.3 529.0 L683.9 542.0 L678.0 555.9 L652.0 555.3 L639.9 544.6Z" fill="#5f7390" fill-opacity=".035" stroke="#8c97a8" stroke-opacity=".42" stroke-width=".6"/><path d="M972.9 447.3 L974.7 425.2 L1004.6 435.4 L999.4 450.7Z" fill="#5f7390" fill-opacity=".035" stroke="#8c97a8" stroke-opacity=".42" stroke-width=".6"/><path d="M618.3 604.4 L598.7 612.6 L583.0 606.4 L589.3 589.1 L605.7 594.4Z" fill="#5f7390" fill-opacity=".035" stroke="#8c97a8" stroke-opacity=".42" stroke-width=".6"/><path d="M610.8 422.5 L576.2 411.6 L598.7 396.6 L616.5 409.3Z" fill="#5f7390" fill-opacity=".035" stroke="#8c97a8" stroke-opacity=".42" stroke-width=".6"/><path d="M783.7 655.5 L795.3 650.4 L808.5 650.3 L808.5 661.6 L795.5 663.8Z" fill="#5f7390" fill-opacity=".035" stroke="#8c97a8" stroke-opacity=".42" stroke-width=".6"/><path d="M574.1 765.8 L563.3 770.8 L557.2 766.3 L555.9 757.6 L563.6 753.4 L570.6 756.0 L577.1 761.2Z" fill="#5f7390" fill-opacity=".035" stroke="#8c97a8" stroke-opacity=".42" stroke-width=".6"/><path d="M886.5 425.4 L899.4 436.4 L896.8 452.5 L867.3 444.4 L866.9 431.6Z" fill="#5f7390" fill-opacity=".035" stroke="#8c97a8" stroke-opacity=".42" stroke-width=".6"/><path d="M964.0 413.2 L971.8 417.5 L968.7 424.2 L958.9 422.4 L952.4 415.8Z" fill="#5f7390" fill-opacity=".035" stroke="#8c97a8" stroke-opacity=".42" stroke-width=".6"/><path d="M768.0 775.4 L756.5 777.5 L743.8 771.1 L748.4 760.7 L764.2 754.5 L770.1 763.6Z" fill="#5f7390" fill-opacity=".035" stroke="#8c97a8" stroke-opacity=".42" stroke-width=".6"/><path d="M837.7 543.3 L822.9 530.1 L834.2 518.3 L851.8 528.4Z" fill="#5f7390" fill-opacity=".035" stroke="#8c97a8" stroke-opacity=".42" stroke-width=".6"/><path d="M662.7 775.7 L641.6 777.7 L622.9 775.5 L632.1 756.0 L652.7 759.2 L663.4 767.4Z" fill="#5f7390" fill-opacity=".035" stroke="#8c97a8" stroke-opacity=".42" stroke-width=".6"/><path d="M606.4 768.3 L620.3 769.3 L617.0 778.1 L610.0 783.3 L600.1 774.3Z" fill="#5f7390" fill-opacity=".035" stroke="#8c97a8" stroke-opacity=".42" stroke-width=".6"/><path d="M580.4 728.8 L599.9 741.9 L575.5 750.0 L557.8 733.2Z" fill="#5f7390" fill-opacity=".035" stroke="#8c97a8" stroke-opacity=".42" stroke-width=".6"/><path d="M903.8 587.8 L887.5 599.7 L868.7 604.2 L856.2 593.9 L860.7 578.1 L879.6 577.2Z" fill="#5f7390" fill-opacity=".035" stroke="#8c97a8" stroke-opacity=".42" stroke-width=".6"/><path d="M766.2 524.9 L752.6 534.7 L737.3 528.0 L741.6 511.2 L763.1 513.4Z" fill="#5f7390" fill-opacity=".035" stroke="#8c97a8" stroke-opacity=".42" stroke-width=".6"/><path d="M642.2 719.1 L644.8 715.8 L650.7 716.4 L652.5 721.8 L646.8 722.5Z" fill="#5f7390" fill-opacity=".035" stroke="#8c97a8" stroke-opacity=".42" stroke-width=".6"/><path d="M887.9 627.7 L903.1 629.8 L905.9 644.4 L886.0 649.8 L879.1 634.5Z" fill="#5f7390" fill-opacity=".035" stroke="#8c97a8" stroke-opacity=".42" stroke-width=".6"/><path d="M652.3 377.3 L660.5 361.8 L689.8 367.8 L683.2 384.3 L665.7 387.4Z" fill="#5f7390" fill-opacity=".035" stroke="#8c97a8" stroke-opacity=".42" stroke-width=".6"/><path d="M995.2 413.4 L990.1 415.7 L982.1 413.7 L982.7 406.5 L993.1 408.0Z" fill="#5f7390" fill-opacity=".035" stroke="#8c97a8" stroke-opacity=".42" stroke-width=".6"/><path d="M738.2 811.4 L746.7 787.4 L769.3 789.2 L776.9 808.6Z" fill="#5f7390" fill-opacity=".035" stroke="#8c97a8" stroke-opacity=".42" stroke-width=".6"/><path d="M601.5 612.6 L590.8 598.3 L598.8 589.2 L612.1 594.5 L618.7 605.3Z" fill="#5f7390" fill-opacity=".035" stroke="#8c97a8" stroke-opacity=".42" stroke-width=".6"/><path d="M763.0 576.5 L769.3 582.1 L770.8 590.0 L757.0 594.3 L751.4 588.1 L755.3 581.7Z" fill="#5f7390" fill-opacity=".035" stroke="#8c97a8" stroke-opacity=".42" stroke-width=".6"/><path d="M622.6 690.8 L614.3 680.5 L632.6 676.0 L642.7 685.2Z" fill="#5f7390" fill-opacity=".035" stroke="#8c97a8" stroke-opacity=".42" stroke-width=".6"/><path d="M800.3 654.6 L823.9 651.1 L829.1 668.7 L805.3 677.5 L794.7 668.7Z" fill="#5f7390" fill-opacity=".035" stroke="#8c97a8" stroke-opacity=".42" stroke-width=".6"/><path d="M834.2 650.6 L819.2 647.2 L825.2 635.9 L832.4 629.3 L843.2 635.9 L845.5 643.6Z" fill="#5f7390" fill-opacity=".035" stroke="#8c97a8" stroke-opacity=".42" stroke-width=".6"/><path d="M589.8 470.5 L579.7 481.2 L564.9 481.4 L552.9 481.3 L550.2 467.6 L560.7 463.4 L576.4 464.2Z" fill="#5f7390" fill-opacity=".035" stroke="#8c97a8" stroke-opacity=".42" stroke-width=".6"/><path d="M808.2 591.7 L825.5 593.8 L826.2 606.6 L820.2 616.5 L804.6 617.7 L793.3 610.8 L793.3 600.2Z" fill="#5f7390" fill-opacity=".035" stroke="#8c97a8" stroke-opacity=".42" stroke-width=".6"/><path d="M679.0 330.1 L679.2 342.5 L661.2 339.6 L666.3 331.1Z" fill="#5f7390" fill-opacity=".035" stroke="#8c97a8" stroke-opacity=".42" stroke-width=".6"/><path d="M590.9 781.0 L601.6 772.0 L620.6 780.9 L612.8 791.2 L591.7 788.6Z" fill="#5f7390" fill-opacity=".035" stroke="#8c97a8" stroke-opacity=".42" stroke-width=".6"/><path d="M787.4 497.5 L781.6 515.4 L766.0 514.4 L757.3 503.1 L770.2 487.6Z" fill="#5f7390" fill-opacity=".035" stroke="#8c97a8" stroke-opacity=".42" stroke-width=".6"/><path d="M734.1 478.1 L740.4 484.4 L747.4 491.4 L736.2 498.1 L726.5 496.4 L717.8 489.6 L719.1 482.4Z" fill="#5f7390" fill-opacity=".035" stroke="#8c97a8" stroke-opacity=".42" stroke-width=".6"/><path d="M599.2 674.1 L587.0 668.1 L602.0 661.0 L613.2 670.2Z" fill="#5f7390" fill-opacity=".035" stroke="#8c97a8" stroke-opacity=".42" stroke-width=".6"/><path d="M647.3 698.9 L652.6 696.9 L659.8 698.4 L660.8 703.2 L656.2 706.6 L648.1 705.0 L645.3 703.8Z" fill="#5f7390" fill-opacity=".035" stroke="#8c97a8" stroke-opacity=".42" stroke-width=".6"/><path d="M751.0 398.9 L748.7 393.1 L754.0 388.6 L762.7 390.7 L761.6 397.2 L755.5 400.2Z" fill="#5f7390" fill-opacity=".035" stroke="#8c97a8" stroke-opacity=".42" stroke-width=".6"/><path d="M499.7 692.5 L505.2 683.4 L519.7 680.8 L526.4 682.8 L538.9 692.0 L529.2 695.9 L516.6 701.8Z" fill="#5f7390" fill-opacity=".035" stroke="#8c97a8" stroke-opacity=".42" stroke-width=".6"/><path d="M908.4 360.6 L889.0 354.0 L897.0 345.9 L915.3 351.4Z" fill="#5f7390" fill-opacity=".035" stroke="#8c97a8" stroke-opacity=".42" stroke-width=".6"/><path d="M779.6 427.8 L780.6 435.7 L767.1 439.1 L760.7 437.2 L756.2 428.0 L761.7 422.5 L772.1 421.9Z" fill="#5f7390" fill-opacity=".035" stroke="#8c97a8" stroke-opacity=".42" stroke-width=".6"/><path d="M618.8 576.0 L637.3 581.9 L629.8 599.7 L602.1 598.4Z" fill="#5f7390" fill-opacity=".035" stroke="#8c97a8" stroke-opacity=".42" stroke-width=".6"/><path d="M947.0 536.6 L931.9 540.0 L923.3 526.3 L936.9 522.2 L949.6 525.8Z" fill="#5f7390" fill-opacity=".035" stroke="#8c97a8" stroke-opacity=".42" stroke-width=".6"/><path d="M657.1 709.4 L640.7 709.7 L632.2 700.3 L642.1 692.1 L662.8 696.9Z" fill="#5f7390" fill-opacity=".035" stroke="#8c97a8" stroke-opacity=".42" stroke-width=".6"/><path d="M554.9 577.1 L553.2 569.4 L559.6 564.2 L570.1 566.9 L569.5 574.0 L565.9 579.2Z" fill="#5f7390" fill-opacity=".035" stroke="#8c97a8" stroke-opacity=".42" stroke-width=".6"/><path d="M938.9 429.8 L924.5 426.5 L929.4 416.4 L935.5 412.3 L943.5 412.5 L950.3 421.8 L948.2 428.5Z" fill="#5f7390" fill-opacity=".035" stroke="#8c97a8" stroke-opacity=".42" stroke-width=".6"/><path d="M538.6 480.3 L516.1 473.8 L508.2 455.5 L534.5 445.5 L551.9 458.0 L559.5 467.2Z" fill="#5f7390" fill-opacity=".035" stroke="#8c97a8" stroke-opacity=".42" stroke-width=".6"/><path d="M792.9 672.0 L786.1 669.1 L787.2 661.8 L796.9 662.0 L804.0 665.5 L802.0 671.3Z" fill="#5f7390" fill-opacity=".035" stroke="#8c97a8" stroke-opacity=".42" stroke-width=".6"/><path d="M823.1 718.9 L806.0 707.6 L825.1 701.0 L838.6 710.5Z" fill="#5f7390" fill-opacity=".035" stroke="#8c97a8" stroke-opacity=".42" stroke-width=".6"/><path d="M889.3 807.0 L874.1 794.7 L891.8 788.5 L903.7 797.2Z" fill="#5f7390" fill-opacity=".035" stroke="#8c97a8" stroke-opacity=".42" stroke-width=".6"/><path d="M666.8 490.9 L677.3 500.9 L660.1 511.3 L643.4 505.0 L648.1 489.8Z" fill="#5f7390" fill-opacity=".035" stroke="#8c97a8" stroke-opacity=".42" stroke-width=".6"/><path d="M949.7 487.0 L918.5 491.3 L905.9 482.4 L917.1 465.3 L940.9 466.3Z" fill="#5f7390" fill-opacity=".035" stroke="#8c97a8" stroke-opacity=".42" stroke-width=".6"/><path d="M610.6 602.6 L618.7 594.8 L635.3 599.8 L628.8 611.2 L619.1 613.1 L606.0 611.1Z" fill="#5f7390" fill-opacity=".035" stroke="#8c97a8" stroke-opacity=".42" stroke-width=".6"/><path d="M863.3 577.9 L863.0 589.9 L837.5 599.5 L831.1 585.1 L843.0 575.4Z" fill="#5f7390" fill-opacity=".035" stroke="#8c97a8" stroke-opacity=".42" stroke-width=".6"/><path d="M856.5 352.4 L840.0 357.0 L828.2 353.7 L829.7 343.5 L834.9 336.7 L846.4 339.4 L859.5 344.3Z" fill="#5f7390" fill-opacity=".035" stroke="#8c97a8" stroke-opacity=".42" stroke-width=".6"/><path d="M844.3 753.0 L836.4 752.4 L838.9 746.5 L847.8 743.6 L850.5 748.0Z" fill="#5f7390" fill-opacity=".035" stroke="#8c97a8" stroke-opacity=".42" stroke-width=".6"/><path d="M516.1 340.9 L523.9 330.4 L543.1 327.2 L553.9 339.9 L551.0 352.0 L529.1 348.7Z" fill="#5f7390" fill-opacity=".035" stroke="#8c97a8" stroke-opacity=".42" stroke-width=".6"/><path d="M906.1 531.8 L892.4 535.2 L887.0 528.3 L895.2 523.4Z" fill="#5f7390" fill-opacity=".035" stroke="#8c97a8" stroke-opacity=".42" stroke-width=".6"/><path d="M971.5 622.9 L978.4 613.7 L993.5 622.9 L981.3 629.2Z" fill="#5f7390" fill-opacity=".035" stroke="#8c97a8" stroke-opacity=".42" stroke-width=".6"/><path d="M793.4 487.1 L795.8 478.6 L806.0 471.1 L815.5 474.9 L822.8 481.3 L816.2 487.9 L810.6 493.2Z" fill="#5f7390" fill-opacity=".035" stroke="#8c97a8" stroke-opacity=".42" stroke-width=".6"/><path d="M878.0 661.8 L860.7 669.5 L838.2 665.7 L842.7 647.5 L864.5 645.3Z" fill="#5f7390" fill-opacity=".035" stroke="#8c97a8" stroke-opacity=".42" stroke-width=".6"/><path d="M951.2 698.5 L962.5 685.3 L998.3 680.4 L999.7 696.9 L980.6 712.8Z" fill="#5f7390" fill-opacity=".035" stroke="#8c97a8" stroke-opacity=".42" stroke-width=".6"/><path d="M505.5 392.3 L512.3 374.0 L537.3 374.2 L541.8 393.6Z" fill="#5f7390" fill-opacity=".035" stroke="#8c97a8" stroke-opacity=".42" stroke-width=".6"/><path d="M987.7 794.5 L984.0 788.1 L989.5 785.3 L996.9 787.4 L997.6 794.4Z" fill="#5f7390" fill-opacity=".035" stroke="#8c97a8" stroke-opacity=".42" stroke-width=".6"/><path d="M626.5 663.6 L603.2 661.1 L619.8 642.8 L639.3 654.1Z" fill="#5f7390" fill-opacity=".035" stroke="#8c97a8" stroke-opacity=".42" stroke-width=".6"/><path d="M732.3 375.3 L715.7 376.5 L711.7 366.9 L724.6 357.9 L734.0 365.9Z" fill="#5f7390" fill-opacity=".035" stroke="#8c97a8" stroke-opacity=".42" stroke-width=".6"/><path d="M514.8 479.5 L521.6 483.0 L523.9 487.5 L519.2 493.2 L510.2 490.8 L504.1 484.7Z" fill="#5f7390" fill-opacity=".035" stroke="#8c97a8" stroke-opacity=".42" stroke-width=".6"/><path d="M832.1 549.4 L822.6 559.7 L812.4 555.8 L815.3 543.9Z" fill="#5f7390" fill-opacity=".035" stroke="#8c97a8" stroke-opacity=".42" stroke-width=".6"/><path d="M725.9 789.3 L731.5 796.4 L721.2 802.2 L711.9 802.3 L706.2 795.8 L707.7 786.1Z" fill="#5f7390" fill-opacity=".035" stroke="#8c97a8" stroke-opacity=".42" stroke-width=".6"/><path d="M629.3 737.7 L632.6 726.9 L649.3 726.6 L657.5 735.4 L664.8 745.9 L654.0 752.9 L636.0 752.6Z" fill="#5f7390" fill-opacity=".035" stroke="#8c97a8" stroke-opacity=".42" stroke-width=".6"/><path d="M740.3 523.3 L731.2 524.7 L726.1 515.5 L741.9 515.1Z" fill="#5f7390" fill-opacity=".035" stroke="#8c97a8" stroke-opacity=".42" stroke-width=".6"/><path d="M688.5 379.0 L681.6 379.8 L677.6 377.8 L676.5 374.5 L680.2 369.8 L686.0 371.3 L690.9 375.5Z" fill="#5f7390" fill-opacity=".035" stroke="#8c97a8" stroke-opacity=".42" stroke-width=".6"/><path d="M520.9 553.2 L530.6 563.3 L513.7 569.8 L507.3 556.6Z" fill="#5f7390" fill-opacity=".035" stroke="#8c97a8" stroke-opacity=".42" stroke-width=".6"/><path d="M534.0 666.0 L544.9 669.8 L546.7 674.4 L536.3 677.0 L530.5 674.1Z" fill="#5f7390" fill-opacity=".035" stroke="#8c97a8" stroke-opacity=".42" stroke-width=".6"/><path d="M505.1 679.9 L505.1 670.9 L522.6 660.9 L536.3 674.9 L528.9 684.6Z" fill="#5f7390" fill-opacity=".035" stroke="#8c97a8" stroke-opacity=".42" stroke-width=".6"/><path d="M914.1 686.6 L909.5 690.1 L904.0 689.8 L903.8 685.1 L908.4 681.6Z" fill="#5f7390" fill-opacity=".035" stroke="#8c97a8" stroke-opacity=".42" stroke-width=".6"/><path d="M884.4 664.3 L895.2 658.7 L902.5 664.9 L898.0 674.6 L885.9 673.7Z" fill="#5f7390" fill-opacity=".035" stroke="#8c97a8" stroke-opacity=".42" stroke-width=".6"/><path d="M778.8 673.7 L793.3 670.7 L801.8 680.5 L796.5 691.4 L782.1 690.7 L771.1 683.2Z" fill="#5f7390" fill-opacity=".035" stroke="#8c97a8" stroke-opacity=".42" stroke-width=".6"/><path d="M650.2 645.7 L654.0 650.0 L654.1 655.8 L642.7 655.8 L640.4 653.6 L643.5 647.9Z" fill="#5f7390" fill-opacity=".035" stroke="#8c97a8" stroke-opacity=".42" stroke-width=".6"/><path d="M572.3 515.7 L583.3 518.0 L582.3 527.5 L566.8 525.1 L563.1 517.6Z" fill="#5f7390" fill-opacity=".035" stroke="#8c97a8" stroke-opacity=".42" stroke-width=".6"/><path d="M789.7 462.3 L762.4 445.7 L775.3 428.6 L801.2 444.0Z" fill="#5f7390" fill-opacity=".035" stroke="#8c97a8" stroke-opacity=".42" stroke-width=".6"/><path d="M762.2 780.6 L755.8 782.4 L750.0 777.3 L755.1 772.9 L765.6 775.8Z" fill="#5f7390" fill-opacity=".035" stroke="#8c97a8" stroke-opacity=".42" stroke-width=".6"/><path d="M682.6 776.0 L666.9 771.7 L656.0 762.2 L658.4 754.9 L669.8 747.6 L686.9 750.0 L695.5 764.8Z" fill="#5f7390" fill-opacity=".035" stroke="#8c97a8" stroke-opacity=".42" stroke-width=".6"/><path d="M673.7 353.7 L679.5 344.8 L692.2 343.0 L705.1 351.3 L693.9 364.6Z" fill="#5f7390" fill-opacity=".035" stroke="#8c97a8" stroke-opacity=".42" stroke-width=".6"/><path d="M541.4 632.5 L528.1 623.2 L545.8 608.9 L561.7 615.9 L564.9 629.0Z" fill="#5f7390" fill-opacity=".035" stroke="#8c97a8" stroke-opacity=".42" stroke-width=".6"/><path d="M606.5 547.4 L624.3 552.5 L623.6 571.5 L594.6 576.7 L579.1 567.3 L588.2 555.1Z" fill="#5f7390" fill-opacity=".035" stroke="#8c97a8" stroke-opacity=".42" stroke-width=".6"/><path d="M967.5 523.0 L952.8 509.5 L954.1 501.8 L969.6 492.9 L987.7 499.0 L988.4 513.2Z" fill="#5f7390" fill-opacity=".035" stroke="#8c97a8" stroke-opacity=".42" stroke-width=".6"/><path d="M780.5 389.1 L790.5 377.9 L807.0 382.7 L795.4 394.4Z" fill="#5f7390" fill-opacity=".035" stroke="#8c97a8" stroke-opacity=".42" stroke-width=".6"/><path d="M890.4 391.4 L903.3 404.6 L901.3 415.7 L879.3 419.9 L867.6 407.3 L870.7 394.5Z" fill="#5f7390" fill-opacity=".035" stroke="#8c97a8" stroke-opacity=".42" stroke-width=".6"/><path d="M516.6 481.1 L504.6 489.1 L495.9 477.0 L509.9 473.4Z" fill="#5f7390" fill-opacity=".035" stroke="#8c97a8" stroke-opacity=".42" stroke-width=".6"/><path d="M871.2 626.3 L871.8 622.5 L875.9 618.7 L883.2 622.5 L885.8 625.5 L880.9 630.0 L871.7 629.7Z" fill="#5f7390" fill-opacity=".035" stroke="#8c97a8" stroke-opacity=".42" stroke-width=".6"/><path d="M568.4 647.1 L575.8 646.5 L580.3 649.2 L577.1 653.6 L570.3 652.3Z" fill="#5f7390" fill-opacity=".035" stroke="#8c97a8" stroke-opacity=".42" stroke-width=".6"/><path d="M698.5 506.2 L707.5 489.1 L728.3 494.7 L720.4 512.4Z" fill="#5f7390" fill-opacity=".035" stroke="#8c97a8" stroke-opacity=".42" stroke-width=".6"/><path d="M542.4 657.5 L540.4 671.5 L512.7 676.9 L506.1 658.3 L518.4 651.3Z" fill="#5f7390" fill-opacity=".035" stroke="#8c97a8" stroke-opacity=".42" stroke-width=".6"/><path d="M896.5 693.1 L907.9 693.6 L918.7 697.5 L913.2 707.9 L895.8 704.3Z" fill="#5f7390" fill-opacity=".035" stroke="#8c97a8" stroke-opacity=".42" stroke-width=".6"/><path d="M938.9 759.1 L965.1 763.7 L949.2 779.6 L934.8 771.3Z" fill="#5f7390" fill-opacity=".035" stroke="#8c97a8" stroke-opacity=".42" stroke-width=".6"/><path d="M713.3 476.9 L722.6 469.8 L733.2 475.5 L729.4 481.7 L720.4 481.4Z" fill="#5f7390" fill-opacity=".035" stroke="#8c97a8" stroke-opacity=".42" stroke-width=".6"/><path d="M800.3 593.4 L818.8 597.7 L810.8 609.8 L801.5 609.8 L791.6 600.5Z" fill="#5f7390" fill-opacity=".035" stroke="#8c97a8" stroke-opacity=".42" stroke-width=".6"/><path d="M582.7 764.8 L580.6 755.6 L591.7 753.0 L597.8 759.5 L594.2 766.0Z" fill="#5f7390" fill-opacity=".035" stroke="#8c97a8" stroke-opacity=".42" stroke-width=".6"/><path d="M793.8 645.9 L768.8 641.4 L776.8 629.7 L801.2 633.7Z" fill="#5f7390" fill-opacity=".035" stroke="#8c97a8" stroke-opacity=".42" stroke-width=".6"/><path d="M692.9 347.0 L677.5 363.7 L650.9 356.7 L648.8 333.2 L681.5 330.8Z" fill="#5f7390" fill-opacity=".035" stroke="#8c97a8" stroke-opacity=".42" stroke-width=".6"/><path d="M862.1 481.8 L857.4 484.5 L851.1 483.7 L848.5 476.4 L849.3 472.7 L860.8 471.7 L867.7 474.0Z" fill="#5f7390" fill-opacity=".035" stroke="#8c97a8" stroke-opacity=".42" stroke-width=".6"/><path d="M594.0 447.4 L583.2 446.5 L576.7 441.0 L576.9 429.6 L588.4 431.8 L599.5 436.0Z" fill="#5f7390" fill-opacity=".035" stroke="#8c97a8" stroke-opacity=".42" stroke-width=".6"/><path d="M906.0 722.6 L919.4 720.7 L928.7 733.6 L929.7 744.4 L914.4 751.0 L892.1 745.8 L885.3 732.7Z" fill="#5f7390" fill-opacity=".035" stroke="#8c97a8" stroke-opacity=".42" stroke-width=".6"/><path d="M547.0 463.5 L561.1 482.5 L544.6 492.5 L525.0 477.2Z" fill="#5f7390" fill-opacity=".035" stroke="#8c97a8" stroke-opacity=".42" stroke-width=".6"/><path d="M707.5 576.3 L712.1 577.9 L708.6 583.7 L703.4 584.0 L697.6 580.5 L700.9 576.6Z" fill="#5f7390" fill-opacity=".035" stroke="#8c97a8" stroke-opacity=".42" stroke-width=".6"/><path d="M649.2 577.2 L646.6 557.5 L672.0 559.1 L681.1 576.3Z" fill="#5f7390" fill-opacity=".035" stroke="#8c97a8" stroke-opacity=".42" stroke-width=".6"/><path d="M988.1 529.5 L989.2 545.5 L964.9 541.0 L974.8 525.9Z" fill="#5f7390" fill-opacity=".035" stroke="#8c97a8" stroke-opacity=".42" stroke-width=".6"/><path d="M954.0 669.7 L962.9 677.6 L961.0 687.7 L947.2 685.0 L942.6 681.0 L946.5 674.4Z" fill="#5f7390" fill-opacity=".035" stroke="#8c97a8" stroke-opacity=".42" stroke-width=".6"/><path d="M800.9 630.1 L812.3 637.0 L806.2 645.4 L790.4 639.2Z" fill="#5f7390" fill-opacity=".035" stroke="#8c97a8" stroke-opacity=".42" stroke-width=".6"/><path d="M772.2 340.7 L779.5 327.1 L798.2 335.9 L787.6 348.5Z" fill="#5f7390" fill-opacity=".035" stroke="#8c97a8" stroke-opacity=".42" stroke-width=".6"/><path d="M953.6 608.6 L950.0 599.5 L958.3 595.5 L968.7 592.2 L984.0 593.3 L983.9 606.8 L972.9 607.8Z" fill="#5f7390" fill-opacity=".035" stroke="#8c97a8" stroke-opacity=".42" stroke-width=".6"/><path d="M504.7 455.8 L505.0 452.7 L510.7 449.8 L514.9 451.6 L519.4 453.8 L515.2 456.6 L509.6 457.8Z" fill="#5f7390" fill-opacity=".035" stroke="#8c97a8" stroke-opacity=".42" stroke-width=".6"/><path d="M778.3 783.0 L764.7 783.8 L758.7 775.9 L772.6 773.1Z" fill="#5f7390" fill-opacity=".035" stroke="#8c97a8" stroke-opacity=".42" stroke-width=".6"/><path d="M966.5 681.2 L960.0 690.9 L944.8 686.6 L949.4 676.2Z" fill="#5f7390" fill-opacity=".035" stroke="#8c97a8" stroke-opacity=".42" stroke-width=".6"/><path d="M549.3 654.2 L540.3 662.6 L531.0 661.0 L523.7 651.3 L538.7 648.7Z" fill="#5f7390" fill-opacity=".035" stroke="#8c97a8" stroke-opacity=".42" stroke-width=".6"/><path d="M891.5 558.0 L891.2 541.6 L914.1 536.4 L926.8 550.7 L912.4 562.5Z" fill="#5f7390" fill-opacity=".035" stroke="#8c97a8" stroke-opacity=".42" stroke-width=".6"/><path d="M703.1 596.7 L716.9 600.6 L712.0 614.6 L692.7 608.7Z" fill="#5f7390" fill-opacity=".035" stroke="#8c97a8" stroke-opacity=".42" stroke-width=".6"/><path d="M665.7 467.1 L676.2 473.5 L667.8 484.2 L653.5 481.8 L654.2 470.4Z" fill="#5f7390" fill-opacity=".035" stroke="#8c97a8" stroke-opacity=".42" stroke-width=".6"/><path d="M606.9 692.6 L635.3 690.7 L635.1 712.0 L610.2 714.6Z" fill="#5f7390" fill-opacity=".035" stroke="#8c97a8" stroke-opacity=".42" stroke-width=".6"/><path d="M790.5 764.2 L766.8 762.5 L750.3 757.5 L758.7 740.1 L773.1 734.6 L790.7 743.2 L803.9 750.1Z" fill="#5f7390" fill-opacity=".035" stroke="#8c97a8" stroke-opacity=".42" stroke-width=".6"/><path d="M666.5 351.5 L671.3 356.9 L670.4 360.2 L663.4 360.9 L658.5 356.3Z" fill="#5f7390" fill-opacity=".035" stroke="#8c97a8" stroke-opacity=".42" stroke-width=".6"/><path d="M592.7 738.1 L587.1 729.1 L599.4 724.3 L616.2 727.8 L606.6 736.8Z" fill="#5f7390" fill-opacity=".035" stroke="#8c97a8" stroke-opacity=".42" stroke-width=".6"/><path d="M673.7 620.7 L642.9 628.9 L626.3 612.8 L648.2 599.6Z" fill="#5f7390" fill-opacity=".035" stroke="#8c97a8" stroke-opacity=".42" stroke-width=".6"/><path d="M957.1 709.3 L957.2 712.7 L954.1 714.9 L949.5 715.5 L947.6 711.2 L952.5 708.4Z" fill="#5f7390" fill-opacity=".035" stroke="#8c97a8" stroke-opacity=".42" stroke-width=".6"/><path d="M593.6 655.7 L592.0 645.1 L607.7 637.0 L620.2 645.0 L624.9 651.0 L622.3 657.3 L606.8 658.3Z" fill="#5f7390" fill-opacity=".035" stroke="#8c97a8" stroke-opacity=".42" stroke-width=".6"/><path d="M725.0 395.3 L702.0 402.0 L695.7 384.1 L716.3 371.7 L728.4 372.4 L737.7 386.9Z" fill="#5f7390" fill-opacity=".035" stroke="#8c97a8" stroke-opacity=".42" stroke-width=".6"/><path d="M607.2 598.8 L598.6 589.9 L613.3 582.0 L628.3 589.1 L621.7 597.7Z" fill="#5f7390" fill-opacity=".035" stroke="#8c97a8" stroke-opacity=".42" stroke-width=".6"/><path d="M638.9 747.8 L643.0 740.7 L662.0 748.9 L665.8 753.6 L658.0 762.7 L650.2 766.3 L639.2 760.4Z" fill="#5f7390" fill-opacity=".035" stroke="#8c97a8" stroke-opacity=".42" stroke-width=".6"/><path d="M690.9 418.9 L695.1 419.2 L696.9 423.0 L691.1 425.5 L686.0 421.7Z" fill="#5f7390" fill-opacity=".035" stroke="#8c97a8" stroke-opacity=".42" stroke-width=".6"/><path d="M551.3 539.6 L552.6 552.0 L544.9 560.7 L525.0 555.6 L525.7 544.1 L535.8 540.8Z" fill="#5f7390" fill-opacity=".035" stroke="#8c97a8" stroke-opacity=".42" stroke-width=".6"/><path d="M933.3 724.4 L938.2 745.1 L896.4 744.2 L911.8 724.3Z" fill="#5f7390" fill-opacity=".035" stroke="#8c97a8" stroke-opacity=".42" stroke-width=".6"/><path d="M600.0 520.7 L593.7 518.7 L592.8 515.8 L598.8 511.4 L606.3 513.3 L604.3 519.0Z" fill="#5f7390" fill-opacity=".035" stroke="#8c97a8" stroke-opacity=".42" stroke-width=".6"/><path d="M760.2 409.4 L759.0 401.3 L771.8 400.3 L775.3 405.4 L771.3 411.2Z" fill="#5f7390" fill-opacity=".035" stroke="#8c97a8" stroke-opacity=".42" stroke-width=".6"/><path d="M981.4 688.3 L973.1 686.0 L976.6 679.9 L986.1 678.4 L988.6 686.0Z" fill="#5f7390" fill-opacity=".035" stroke="#8c97a8" stroke-opacity=".42" stroke-width=".6"/><path d="M784.4 664.7 L772.9 676.1 L751.8 669.4 L764.3 653.0Z" fill="#5f7390" fill-opacity=".035" stroke="#8c97a8" stroke-opacity=".42" stroke-width=".6"/><path d="M766.6 529.8 L755.2 539.1 L728.2 537.2 L731.4 521.5 L745.8 515.1Z" fill="#5f7390" fill-opacity=".035" stroke="#8c97a8" stroke-opacity=".42" stroke-width=".6"/><path d="M772.8 473.6 L766.0 475.5 L762.3 473.6 L761.2 468.3 L767.4 467.0 L771.9 468.4Z" fill="#5f7390" fill-opacity=".035" stroke="#8c97a8" stroke-opacity=".42" stroke-width=".6"/><path d="M891.4 469.9 L901.2 472.6 L901.7 480.3 L890.2 485.0 L879.7 484.6 L877.7 475.5 L886.1 469.6Z" fill="#5f7390" fill-opacity=".035" stroke="#8c97a8" stroke-opacity=".42" stroke-width=".6"/><path d="M992.0 571.6 L989.4 586.4 L970.2 583.6 L972.9 571.0Z" fill="#5f7390" fill-opacity=".035" stroke="#8c97a8" stroke-opacity=".42" stroke-width=".6"/><path d="M569.9 677.7 L581.2 667.5 L596.1 671.3 L599.3 681.8 L588.0 686.1Z" fill="#5f7390" fill-opacity=".035" stroke="#8c97a8" stroke-opacity=".42" stroke-width=".6"/><path d="M549.9 734.8 L546.2 746.2 L534.6 749.3 L529.1 741.8 L534.1 734.6Z" fill="#5f7390" fill-opacity=".035" stroke="#8c97a8" stroke-opacity=".42" stroke-width=".6"/><path d="M862.6 675.5 L854.9 671.4 L852.4 665.9 L861.1 663.0 L872.0 664.5 L869.4 669.0 L871.0 675.0Z" fill="#5f7390" fill-opacity=".035" stroke="#8c97a8" stroke-opacity=".42" stroke-width=".6"/><path d="M689.1 457.1 L684.2 472.3 L652.3 469.7 L668.1 448.5Z" fill="#5f7390" fill-opacity=".035" stroke="#8c97a8" stroke-opacity=".42" stroke-width=".6"/><path d="M765.1 795.2 L746.3 795.1 L727.4 787.7 L740.7 770.3 L761.9 775.1 L781.1 780.7Z" fill="#5f7390" fill-opacity=".035" stroke="#8c97a8" stroke-opacity=".42" stroke-width=".6"/><path d="M585.8 676.7 L581.1 682.6 L573.0 678.6 L574.9 673.2 L583.7 673.4Z" fill="#5f7390" fill-opacity=".035" stroke="#8c97a8" stroke-opacity=".42" stroke-width=".6"/><path d="M786.5 531.4 L797.0 531.1 L802.6 542.1 L784.6 544.5 L778.3 538.5Z" fill="#5f7390" fill-opacity=".035" stroke="#8c97a8" stroke-opacity=".42" stroke-width=".6"/><path d="M857.3 552.7 L867.3 542.2 L890.0 532.1 L899.4 545.6 L906.4 552.5 L895.0 566.8 L874.4 562.2Z" fill="#5f7390" fill-opacity=".035" stroke="#8c97a8" stroke-opacity=".42" stroke-width=".6"/><path d="M986.9 714.1 L994.1 713.7 L999.1 719.2 L995.7 723.0 L984.5 720.8Z" fill="#5f7390" fill-opacity=".035" stroke="#8c97a8" stroke-opacity=".42" stroke-width=".6"/><path d="M689.9 786.0 L675.9 793.1 L662.9 785.6 L673.1 776.0 L692.4 776.0Z" fill="#5f7390" fill-opacity=".035" stroke="#8c97a8" stroke-opacity=".42" stroke-width=".6"/><path d="M495.4 410.9 L483.7 394.5 L500.4 384.0 L524.7 388.1 L526.6 404.6Z" fill="#5f7390" fill-opacity=".035" stroke="#8c97a8" stroke-opacity=".42" stroke-width=".6"/><path d="M758.5 491.0 L760.5 496.2 L749.7 501.3 L741.9 492.6 L747.2 486.2Z" fill="#5f7390" fill-opacity=".035" stroke="#8c97a8" stroke-opacity=".42" stroke-width=".6"/><path d="M565.1 494.1 L578.9 488.2 L598.8 491.8 L595.2 507.0 L576.2 510.5 L565.5 503.3Z" fill="#5f7390" fill-opacity=".035" stroke="#8c97a8" stroke-opacity=".42" stroke-width=".6"/><path d="M726.4 775.6 L718.9 767.9 L737.5 762.3 L745.8 772.4Z" fill="#5f7390" fill-opacity=".035" stroke="#8c97a8" stroke-opacity=".42" stroke-width=".6"/><path d="M680.7 506.4 L683.8 500.8 L687.5 501.6 L694.6 504.1 L695.2 506.9 L687.6 511.3 L681.7 509.6Z" fill="#5f7390" fill-opacity=".035" stroke="#8c97a8" stroke-opacity=".42" stroke-width=".6"/><path d="M531.6 533.2 L554.0 536.6 L562.6 554.9 L538.5 557.2 L522.8 543.8Z" fill="#5f7390" fill-opacity=".035" stroke="#8c97a8" stroke-opacity=".42" stroke-width=".6"/><path d="M663.2 664.6 L675.1 673.2 L690.0 683.8 L668.7 696.0 L645.9 696.7 L638.0 679.1Z" fill="#5f7390" fill-opacity=".035" stroke="#8c97a8" stroke-opacity=".42" stroke-width=".6"/><path d="M875.4 722.9 L890.9 709.1 L907.9 712.5 L907.5 727.7 L893.8 733.4Z" fill="#5f7390" fill-opacity=".035" stroke="#8c97a8" stroke-opacity=".42" stroke-width=".6"/><path d="M756.7 645.2 L741.6 648.2 L724.5 640.5 L736.6 633.5 L755.7 634.5Z" fill="#5f7390" fill-opacity=".035" stroke="#8c97a8" stroke-opacity=".42" stroke-width=".6"/><path d="M846.1 503.5 L846.8 508.9 L841.4 513.4 L832.8 512.5 L827.7 508.1 L831.1 500.6 L841.4 500.6Z" fill="#5f7390" fill-opacity=".035" stroke="#8c97a8" stroke-opacity=".42" stroke-width=".6"/><path d="M655.7 361.4 L670.7 349.8 L699.3 352.4 L696.9 367.2 L679.0 376.4Z" fill="#5f7390" fill-opacity=".035" stroke="#8c97a8" stroke-opacity=".42" stroke-width=".6"/><path d="M668.3 781.3 L655.4 772.6 L659.0 753.6 L687.0 762.1 L696.4 776.9Z" fill="#5f7390" fill-opacity=".035" stroke="#8c97a8" stroke-opacity=".42" stroke-width=".6"/><path d="M520.8 715.1 L544.6 723.9 L538.0 740.7 L507.7 733.2Z" fill="#5f7390" fill-opacity=".035" stroke="#8c97a8" stroke-opacity=".42" stroke-width=".6"/><path d="M624.5 701.8 L610.2 708.4 L596.0 703.7 L594.7 697.9 L595.8 688.9 L607.3 686.5 L624.1 696.1Z" fill="#5f7390" fill-opacity=".035" stroke="#8c97a8" stroke-opacity=".42" stroke-width=".6"/><path d="M873.6 775.3 L884.2 765.4 L899.6 765.9 L913.3 766.2 L914.9 776.0 L902.3 783.3 L888.0 787.6Z" fill="#5f7390" fill-opacity=".035" stroke="#8c97a8" stroke-opacity=".42" stroke-width=".6"/><path d="M543.9 561.8 L551.0 573.2 L540.0 582.5 L519.5 575.2 L516.7 568.6 L521.9 557.8 L534.8 557.8Z" fill="#5f7390" fill-opacity=".035" stroke="#8c97a8" stroke-opacity=".42" stroke-width=".6"/><path d="M606.9 597.1 L613.1 595.6 L620.4 598.5 L621.1 605.9 L611.9 608.6 L606.9 607.2 L599.4 603.0Z" fill="#5f7390" fill-opacity=".035" stroke="#8c97a8" stroke-opacity=".42" stroke-width=".6"/><path d="M763.8 447.1 L757.1 452.0 L750.4 445.3 L751.5 437.8 L762.0 439.3Z" fill="#5f7390" fill-opacity=".035" stroke="#8c97a8" stroke-opacity=".42" stroke-width=".6"/><path d="M634.9 456.7 L637.2 448.4 L650.9 445.9 L653.0 454.2 L645.1 458.5Z" fill="#5f7390" fill-opacity=".035" stroke="#8c97a8" stroke-opacity=".42" stroke-width=".6"/><path d="M780.6 481.6 L770.5 491.8 L748.0 485.5 L731.5 476.2 L739.0 463.9 L762.0 465.1 L777.9 467.6Z" fill="#5f7390" fill-opacity=".035" stroke="#8c97a8" stroke-opacity=".42" stroke-width=".6"/><path d="M585.8 730.2 L579.0 746.7 L553.5 746.3 L551.7 735.5 L551.1 720.8 L568.4 720.4 L585.9 722.8Z" fill="#5f7390" fill-opacity=".035" stroke="#8c97a8" stroke-opacity=".42" stroke-width=".6"/><path d="M603.0 519.2 L603.4 514.7 L607.5 513.1 L614.1 514.6 L615.0 517.3 L611.9 521.6 L606.3 520.7Z" fill="#5f7390" fill-opacity=".035" stroke="#8c97a8" stroke-opacity=".42" stroke-width=".6"/><path d="M742.4 357.9 L739.7 351.3 L747.0 349.0 L755.6 352.4 L753.5 358.5Z" fill="#5f7390" fill-opacity=".035" stroke="#8c97a8" stroke-opacity=".42" stroke-width=".6"/><path d="M506.0 330.4 L518.4 323.5 L531.7 331.7 L509.7 340.4Z" fill="#5f7390" fill-opacity=".035" stroke="#8c97a8" stroke-opacity=".42" stroke-width=".6"/><path d="M495.8 492.7 L517.7 486.2 L534.8 500.7 L505.9 507.4Z" fill="#5f7390" fill-opacity=".035" stroke="#8c97a8" stroke-opacity=".42" stroke-width=".6"/><path d="M678.3 365.5 L682.6 367.4 L682.9 370.9 L679.9 374.0 L672.9 375.7 L671.2 371.9 L672.9 366.9Z" fill="#5f7390" fill-opacity=".035" stroke="#8c97a8" stroke-opacity=".42" stroke-width=".6"/><path d="M499.0 499.2 L517.3 506.6 L523.3 519.8 L513.6 531.7 L497.7 522.7 L490.1 512.9Z" fill="#5f7390" fill-opacity=".035" stroke="#8c97a8" stroke-opacity=".42" stroke-width=".6"/><path d="M738.7 579.9 L744.3 594.0 L715.6 595.2 L704.9 585.6 L716.5 568.7Z" fill="#5f7390" fill-opacity=".035" stroke="#8c97a8" stroke-opacity=".42" stroke-width=".6"/><path d="M794.7 684.4 L783.0 692.8 L763.4 682.9 L776.1 669.6 L797.3 668.6Z" fill="#5f7390" fill-opacity=".035" stroke="#8c97a8" stroke-opacity=".42" stroke-width=".6"/><path d="M827.6 768.9 L806.0 767.1 L807.3 755.4 L821.3 750.8 L832.5 758.4Z" fill="#5f7390" fill-opacity=".035" stroke="#8c97a8" stroke-opacity=".42" stroke-width=".6"/><path d="M674.7 696.5 L658.9 698.0 L648.1 689.2 L658.3 678.7 L671.6 682.1Z" fill="#5f7390" fill-opacity=".035" stroke="#8c97a8" stroke-opacity=".42" stroke-width=".6"/><path d="M864.1 479.8 L858.5 483.5 L854.6 481.2 L858.9 477.2Z" fill="#e98b8b" fill-opacity=".26" stroke="#e08a8a" stroke-opacity=".45" stroke-width=".5"/><path d="M499.0 783.0 L502.9 781.9 L505.9 783.4 L503.5 785.7 L500.0 786.9 L498.2 785.2Z" fill="#e98b8b" fill-opacity=".26" stroke="#e08a8a" stroke-opacity=".45" stroke-width=".5"/><path d="M933.9 744.1 L931.4 746.0 L928.8 742.9 L932.0 742.4Z" fill="#e98b8b" fill-opacity=".26" stroke="#e08a8a" stroke-opacity=".45" stroke-width=".5"/><path d="M766.1 788.6 L759.5 786.7 L759.6 783.4 L763.2 781.1 L766.8 782.0 L767.7 786.2Z" fill="#e98b8b" fill-opacity=".26" stroke="#e08a8a" stroke-opacity=".45" stroke-width=".5"/><path d="M733.6 363.0 L731.3 360.6 L735.6 358.6 L738.7 362.0Z" fill="#e98b8b" fill-opacity=".26" stroke="#e08a8a" stroke-opacity=".45" stroke-width=".5"/><path d="M675.1 330.3 L672.0 330.8 L670.6 329.4 L672.6 327.4 L675.8 327.5Z" fill="#e98b8b" fill-opacity=".26" stroke="#e08a8a" stroke-opacity=".45" stroke-width=".5"/><ellipse cx="895.2" cy="600.5" rx="4.8" ry="4.1" fill="#e98b8b" fill-opacity=".28" stroke="#e08a8a" stroke-opacity=".45" stroke-width=".5"/><path d="M567.0 480.8 L561.7 481.2 L560.4 476.8 L567.3 476.2Z" fill="#e98b8b" fill-opacity=".26" stroke="#e08a8a" stroke-opacity=".45" stroke-width=".5"/><path d="M867.0 727.8 L876.6 726.9 L876.7 732.9 L868.9 734.1Z" fill="#e98b8b" fill-opacity=".26" stroke="#e08a8a" stroke-opacity=".45" stroke-width=".5"/><path d="M940.3 650.2 L942.8 650.1 L945.6 651.3 L944.8 653.1 L942.2 654.2 L940.3 652.5Z" fill="#e98b8b" fill-opacity=".26" stroke="#e08a8a" stroke-opacity=".45" stroke-width=".5"/><ellipse cx="565.9" cy="710.4" rx="4.7" ry="4.1" fill="#e98b8b" fill-opacity=".28" stroke="#e08a8a" stroke-opacity=".45" stroke-width=".5"/><path d="M645.4 750.0 L643.7 756.0 L635.6 753.2 L639.7 749.9Z" fill="#e98b8b" fill-opacity=".26" stroke="#e08a8a" stroke-opacity=".45" stroke-width=".5"/><ellipse cx="625.3" cy="563.1" rx="2.1" ry="1.9" fill="#e98b8b" fill-opacity=".28" stroke="#e08a8a" stroke-opacity=".45" stroke-width=".5"/><ellipse cx="737.4" cy="648.5" rx="2.7" ry="2.3" fill="#e98b8b" fill-opacity=".28" stroke="#e08a8a" stroke-opacity=".45" stroke-width=".5"/><ellipse cx="665.8" cy="367.3" rx="2.5" ry="2.2" fill="#e98b8b" fill-opacity=".28" stroke="#e08a8a" stroke-opacity=".45" stroke-width=".5"/><path d="M899.5 741.0 L902.7 741.6 L902.3 743.8 L898.8 743.3Z" fill="#e98b8b" fill-opacity=".26" stroke="#e08a8a" stroke-opacity=".45" stroke-width=".5"/><ellipse cx="523.5" cy="368.9" rx="4.6" ry="4.0" fill="#e98b8b" fill-opacity=".28" stroke="#e08a8a" stroke-opacity=".45" stroke-width=".5"/><ellipse cx="834.4" cy="644.1" rx="3.0" ry="2.6" fill="#e98b8b" fill-opacity=".28" stroke="#e08a8a" stroke-opacity=".45" stroke-width=".5"/><path d="M609.3 741.8 L603.4 740.7 L600.7 738.4 L604.5 736.1 L608.8 735.0 L611.1 738.8Z" fill="#e98b8b" fill-opacity=".26" stroke="#e08a8a" stroke-opacity=".45" stroke-width=".5"/><path d="M830.8 713.1 L833.3 711.9 L836.1 713.5 L835.8 715.5 L833.7 715.8 L831.1 715.2Z" fill="#e98b8b" fill-opacity=".26" stroke="#e08a8a" stroke-opacity=".45" stroke-width=".5"/><path d="M740.8 463.3 L746.8 460.2 L753.1 463.1 L752.9 467.5 L742.7 467.8Z" fill="#e98b8b" fill-opacity=".26" stroke="#e08a8a" stroke-opacity=".45" stroke-width=".5"/><ellipse cx="708.0" cy="510.1" rx="4.0" ry="3.5" fill="#e98b8b" fill-opacity=".28" stroke="#e08a8a" stroke-opacity=".45" stroke-width=".5"/><path d="M955.2 642.8 L956.1 639.8 L959.7 637.2 L962.7 639.7 L963.6 641.9 L960.2 644.4Z" fill="#e98b8b" fill-opacity=".26" stroke="#e08a8a" stroke-opacity=".45" stroke-width=".5"/><ellipse cx="827.9" cy="585.0" rx="2.3" ry="2.0" fill="#e98b8b" fill-opacity=".28" stroke="#e08a8a" stroke-opacity=".45" stroke-width=".5"/><path d="M994.1 390.6 L995.6 391.9 L995.6 395.9 L991.8 396.9 L986.9 395.1 L989.0 391.6Z" fill="#e98b8b" fill-opacity=".26" stroke="#e08a8a" stroke-opacity=".45" stroke-width=".5"/><path d="M535.6 642.0 L532.6 642.2 L531.7 641.0 L533.1 638.9 L535.6 640.0Z" fill="#e98b8b" fill-opacity=".26" stroke="#e08a8a" stroke-opacity=".45" stroke-width=".5"/><path d="M644.0 428.1 L636.4 426.7 L635.0 421.0 L642.9 421.7Z" fill="#e98b8b" fill-opacity=".26" stroke="#e08a8a" stroke-opacity=".45" stroke-width=".5"/><ellipse cx="738.2" cy="496.2" rx="3.8" ry="3.3" fill="#e98b8b" fill-opacity=".28" stroke="#e08a8a" stroke-opacity=".45" stroke-width=".5"/><ellipse cx="900.8" cy="593.0" rx="5.5" ry="4.8" fill="#e98b8b" fill-opacity=".28" stroke="#e08a8a" stroke-opacity=".45" stroke-width=".5"/><path d="M993.5 680.1 L989.2 678.3 L991.1 674.5 L996.3 676.2Z" fill="#e98b8b" fill-opacity=".26" stroke="#e08a8a" stroke-opacity=".45" stroke-width=".5"/><ellipse cx="612.7" cy="568.6" rx="2.4" ry="2.1" fill="#e98b8b" fill-opacity=".28" stroke="#e08a8a" stroke-opacity=".45" stroke-width=".5"/><path d="M546.6 750.5 L549.3 749.3 L554.2 750.9 L553.0 754.7 L548.5 755.6 L544.7 754.3Z" fill="#e98b8b" fill-opacity=".26" stroke="#e08a8a" stroke-opacity=".45" stroke-width=".5"/><ellipse cx="791.5" cy="608.4" rx="2.8" ry="2.4" fill="#e98b8b" fill-opacity=".28" stroke="#e08a8a" stroke-opacity=".45" stroke-width=".5"/><ellipse cx="854.1" cy="669.7" rx="4.7" ry="4.1" fill="#e98b8b" fill-opacity=".28" stroke="#e08a8a" stroke-opacity=".45" stroke-width=".5"/><path d="M743.9 694.0 L738.3 688.7 L745.5 685.8 L750.4 690.0Z" fill="#e98b8b" fill-opacity=".26" stroke="#e08a8a" stroke-opacity=".45" stroke-width=".5"/><path d="M948.9 608.8 L945.1 606.1 L948.2 600.8 L955.5 601.3 L957.8 605.8 L954.9 608.8Z" fill="#e98b8b" fill-opacity=".26" stroke="#e08a8a" stroke-opacity=".45" stroke-width=".5"/><ellipse cx="511.4" cy="386.9" rx="5.2" ry="4.5" fill="#e98b8b" fill-opacity=".28" stroke="#e08a8a" stroke-opacity=".45" stroke-width=".5"/><ellipse cx="650.5" cy="574.4" rx="4.1" ry="3.6" fill="#e98b8b" fill-opacity=".28" stroke="#e08a8a" stroke-opacity=".45" stroke-width=".5"/><ellipse cx="555.5" cy="646.1" rx="3.7" ry="3.2" fill="#e98b8b" fill-opacity=".28" stroke="#e08a8a" stroke-opacity=".45" stroke-width=".5"/><ellipse cx="740.2" cy="501.3" rx="6.0" ry="5.2" fill="#e98b8b" fill-opacity=".28" stroke="#e08a8a" stroke-opacity=".45" stroke-width=".5"/><path d="M593.7 361.5 L587.4 362.4 L586.5 359.2 L589.2 356.4 L594.4 357.7Z" fill="#e98b8b" fill-opacity=".26" stroke="#e08a8a" stroke-opacity=".45" stroke-width=".5"/><ellipse cx="545.2" cy="524.2" rx="5.9" ry="5.2" fill="#e98b8b" fill-opacity=".28" stroke="#e08a8a" stroke-opacity=".45" stroke-width=".5"/><path d="M758.4 684.3 L754.5 686.8 L748.8 682.8 L752.4 679.8 L759.7 679.4Z" fill="#e98b8b" fill-opacity=".26" stroke="#e08a8a" stroke-opacity=".45" stroke-width=".5"/><path d="M557.2 488.8 L554.3 495.0 L542.9 492.3 L547.5 488.0Z" fill="#e98b8b" fill-opacity=".26" stroke="#e08a8a" stroke-opacity=".45" stroke-width=".5"/><ellipse cx="762.6" cy="612.6" rx="4.8" ry="4.1" fill="#e98b8b" fill-opacity=".28" stroke="#e08a8a" stroke-opacity=".45" stroke-width=".5"/><path d="M789.0 784.0 L787.6 786.1 L785.3 787.8 L782.0 786.1 L782.0 784.2 L785.1 782.4Z" fill="#e98b8b" fill-opacity=".26" stroke="#e08a8a" stroke-opacity=".45" stroke-width=".5"/><ellipse cx="957.5" cy="736.3" rx="4.0" ry="3.5" fill="#e98b8b" fill-opacity=".28" stroke="#e08a8a" stroke-opacity=".45" stroke-width=".5"/><path d="M972.2 451.6 L972.0 448.0 L974.4 444.9 L981.5 445.3 L983.1 450.1 L979.2 452.3Z" fill="#e98b8b" fill-opacity=".26" stroke="#e08a8a" stroke-opacity=".45" stroke-width=".5"/><ellipse cx="565.8" cy="542.5" rx="2.3" ry="2.0" fill="#e98b8b" fill-opacity=".28" stroke="#e08a8a" stroke-opacity=".45" stroke-width=".5"/><ellipse cx="992.2" cy="505.0" rx="2.6" ry="2.3" fill="#e98b8b" fill-opacity=".28" stroke="#e08a8a" stroke-opacity=".45" stroke-width=".5"/><ellipse cx="744.4" cy="524.6" rx="2.1" ry="1.8" fill="#e98b8b" fill-opacity=".28" stroke="#e08a8a" stroke-opacity=".45" stroke-width=".5"/><ellipse cx="762.7" cy="483.7" rx="6.0" ry="5.2" fill="#e98b8b" fill-opacity=".28" stroke="#e08a8a" stroke-opacity=".45" stroke-width=".5"/><ellipse cx="924.5" cy="709.8" rx="5.2" ry="4.5" fill="#e98b8b" fill-opacity=".28" stroke="#e08a8a" stroke-opacity=".45" stroke-width=".5"/><ellipse cx="750.7" cy="725.5" rx="2.5" ry="2.2" fill="#e98b8b" fill-opacity=".28" stroke="#e08a8a" stroke-opacity=".45" stroke-width=".5"/><path d="M503.8 559.1 L502.9 556.3 L505.3 554.5 L508.9 556.2 L511.5 559.5 L507.4 560.3Z" fill="#e98b8b" fill-opacity=".26" stroke="#e08a8a" stroke-opacity=".45" stroke-width=".5"/><ellipse cx="897.1" cy="484.0" rx="5.7" ry="5.0" fill="#e98b8b" fill-opacity=".28" stroke="#e08a8a" stroke-opacity=".45" stroke-width=".5"/><path d="M655.9 725.9 L657.6 728.0 L654.8 729.8 L653.5 727.2Z" fill="#e98b8b" fill-opacity=".26" stroke="#e08a8a" stroke-opacity=".45" stroke-width=".5"/><path d="M649.5 355.3 L643.9 360.9 L638.2 357.7 L639.3 351.0 L644.8 352.4Z" fill="#e98b8b" fill-opacity=".26" stroke="#e08a8a" stroke-opacity=".45" stroke-width=".5"/><path d="M971.3 775.8 L967.9 775.4 L969.0 773.1 L972.5 773.4Z" fill="#e98b8b" fill-opacity=".26" stroke="#e08a8a" stroke-opacity=".45" stroke-width=".5"/><path d="M527.3 760.2 L532.0 760.3 L537.9 762.4 L537.8 765.6 L531.8 767.2 L525.3 764.4Z" fill="#e98b8b" fill-opacity=".26" stroke="#e08a8a" stroke-opacity=".45" stroke-width=".5"/><ellipse cx="875.6" cy="712.9" rx="3.8" ry="3.3" fill="#e98b8b" fill-opacity=".28" stroke="#e08a8a" stroke-opacity=".45" stroke-width=".5"/><path d="M717.8 491.0 L721.5 492.9 L720.4 497.0 L713.8 497.9 L711.3 492.1Z" fill="#e98b8b" fill-opacity=".26" stroke="#e08a8a" stroke-opacity=".45" stroke-width=".5"/><path d="M829.9 637.8 L825.6 638.5 L825.1 636.1 L827.3 635.4Z" fill="#e98b8b" fill-opacity=".26" stroke="#e08a8a" stroke-opacity=".45" stroke-width=".5"/><path d="M774.9 573.2 L778.5 570.9 L781.3 572.9 L779.2 575.6Z" fill="#e98b8b" fill-opacity=".26" stroke="#e08a8a" stroke-opacity=".45" stroke-width=".5"/><ellipse cx="577.3" cy="380.4" rx="3.1" ry="2.7" fill="#e98b8b" fill-opacity=".28" stroke="#e08a8a" stroke-opacity=".45" stroke-width=".5"/><ellipse cx="994.6" cy="655.8" rx="4.9" ry="4.3" fill="#e98b8b" fill-opacity=".28" stroke="#e08a8a" stroke-opacity=".45" stroke-width=".5"/><path d="M610.2 622.9 L614.8 625.3 L611.8 628.5 L607.7 626.1Z" fill="#e98b8b" fill-opacity=".26" stroke="#e08a8a" stroke-opacity=".45" stroke-width=".5"/><ellipse cx="742.9" cy="723.2" rx="3.1" ry="2.7" fill="#e98b8b" fill-opacity=".28" stroke="#e08a8a" stroke-opacity=".45" stroke-width=".5"/><path d="M700.5 635.5 L697.2 636.7 L694.6 635.0 L693.8 633.4 L697.0 633.0 L700.5 633.6Z" fill="#e98b8b" fill-opacity=".26" stroke="#e08a8a" stroke-opacity=".45" stroke-width=".5"/><path d="M573.1 430.3 L576.1 431.5 L576.7 433.6 L573.1 434.7 L570.9 432.8Z" fill="#e98b8b" fill-opacity=".26" stroke="#e08a8a" stroke-opacity=".45" stroke-width=".5"/><path d="M613.1 632.2 L615.5 631.9 L617.5 633.1 L616.5 634.7 L613.6 634.4Z" fill="#e98b8b" fill-opacity=".26" stroke="#e08a8a" stroke-opacity=".45" stroke-width=".5"/><ellipse cx="535.4" cy="345.6" rx="4.4" ry="3.8" fill="#e98b8b" fill-opacity=".28" stroke="#e08a8a" stroke-opacity=".45" stroke-width=".5"/><path d="M694.0 496.2 L699.2 496.2 L702.2 497.6 L700.2 499.9 L695.1 500.0Z" fill="#e98b8b" fill-opacity=".26" stroke="#e08a8a" stroke-opacity=".45" stroke-width=".5"/><ellipse cx="736.9" cy="396.1" rx="2.2" ry="1.9" fill="#e98b8b" fill-opacity=".28" stroke="#e08a8a" stroke-opacity=".45" stroke-width=".5"/><path d="M953.5 393.7 L962.2 392.4 L966.5 393.5 L963.9 400.2 L959.2 400.2 L951.7 397.0Z" fill="#e98b8b" fill-opacity=".26" stroke="#e08a8a" stroke-opacity=".45" stroke-width=".5"/><ellipse cx="683.2" cy="429.2" rx="6.0" ry="5.2" fill="#e98b8b" fill-opacity=".28" stroke="#e08a8a" stroke-opacity=".45" stroke-width=".5"/><path d="M723.8 474.9 L716.0 473.6 L718.2 469.8 L724.5 469.5 L727.8 473.4Z" fill="#e98b8b" fill-opacity=".26" stroke="#e08a8a" stroke-opacity=".45" stroke-width=".5"/><ellipse cx="645.5" cy="660.2" rx="5.2" ry="4.5" fill="#e98b8b" fill-opacity=".28" stroke="#e08a8a" stroke-opacity=".45" stroke-width=".5"/><path d="M891.9 486.0 L895.1 482.5 L901.1 481.4 L903.9 485.4 L901.4 488.7 L896.2 488.8Z" fill="#e98b8b" fill-opacity=".26" stroke="#e08a8a" stroke-opacity=".45" stroke-width=".5"/><ellipse cx="951.4" cy="771.5" rx="5.1" ry="4.4" fill="#e98b8b" fill-opacity=".28" stroke="#e08a8a" stroke-opacity=".45" stroke-width=".5"/><ellipse cx="676.4" cy="530.3" rx="4.4" ry="3.9" fill="#e98b8b" fill-opacity=".28" stroke="#e08a8a" stroke-opacity=".45" stroke-width=".5"/><path d="M774.5 767.5 L772.4 767.3 L771.8 765.4 L773.4 764.6 L776.1 764.9 L776.9 766.5Z" fill="#e98b8b" fill-opacity=".26" stroke="#e08a8a" stroke-opacity=".45" stroke-width=".5"/><ellipse cx="895.4" cy="707.0" rx="3.7" ry="3.3" fill="#e98b8b" fill-opacity=".28" stroke="#e08a8a" stroke-opacity=".45" stroke-width=".5"/><ellipse cx="619.3" cy="666.5" rx="5.5" ry="4.7" fill="#e98b8b" fill-opacity=".28" stroke="#e08a8a" stroke-opacity=".45" stroke-width=".5"/><path d="M518.8 620.3 L515.3 616.5 L519.1 612.3 L523.8 615.2 L524.6 619.9Z" fill="#e98b8b" fill-opacity=".26" stroke="#e08a8a" stroke-opacity=".45" stroke-width=".5"/><ellipse cx="824.4" cy="719.3" rx="5.6" ry="4.8" fill="#e98b8b" fill-opacity=".28" stroke="#e08a8a" stroke-opacity=".45" stroke-width=".5"/><ellipse cx="682.1" cy="523.9" rx="3.5" ry="3.0" fill="#e98b8b" fill-opacity=".28" stroke="#e08a8a" stroke-opacity=".45" stroke-width=".5"/><path d="M703.6 727.4 L705.0 725.9 L708.9 726.1 L708.8 727.8 L707.9 729.1 L705.0 729.0Z" fill="#e98b8b" fill-opacity=".26" stroke="#e08a8a" stroke-opacity=".45" stroke-width=".5"/><ellipse cx="990.9" cy="684.5" rx="4.8" ry="4.2" fill="#e98b8b" fill-opacity=".28" stroke="#e08a8a" stroke-opacity=".45" stroke-width=".5"/><path d="M529.2 346.8 L528.3 351.4 L522.0 352.6 L518.0 347.9 L524.3 345.3Z" fill="#e98b8b" fill-opacity=".26" stroke="#e08a8a" stroke-opacity=".45" stroke-width=".5"/><ellipse cx="764.7" cy="523.7" rx="4.3" ry="3.8" fill="#e98b8b" fill-opacity=".28" stroke="#e08a8a" stroke-opacity=".45" stroke-width=".5"/><path d="M615.7 519.6 L616.4 516.5 L621.0 517.3 L620.6 519.5Z" fill="#e98b8b" fill-opacity=".26" stroke="#e08a8a" stroke-opacity=".45" stroke-width=".5"/><ellipse cx="634.4" cy="575.8" rx="5.7" ry="5.0" fill="#e98b8b" fill-opacity=".28" stroke="#e08a8a" stroke-opacity=".45" stroke-width=".5"/><ellipse cx="645.1" cy="501.6" rx="4.6" ry="4.0" fill="#e98b8b" fill-opacity=".28" stroke="#e08a8a" stroke-opacity=".45" stroke-width=".5"/><ellipse cx="532.9" cy="764.6" rx="4.8" ry="4.1" fill="#e98b8b" fill-opacity=".28" stroke="#e08a8a" stroke-opacity=".45" stroke-width=".5"/><ellipse cx="705.6" cy="350.5" rx="2.4" ry="2.1" fill="#e98b8b" fill-opacity=".28" stroke="#e08a8a" stroke-opacity=".45" stroke-width=".5"/><path d="M937.7 761.3 L933.6 756.4 L937.3 752.9 L943.0 753.5 L945.5 756.3 L943.5 761.2Z" fill="#e98b8b" fill-opacity=".26" stroke="#e08a8a" stroke-opacity=".45" stroke-width=".5"/><path d="M540.1 763.9 L536.3 759.7 L542.0 755.7 L546.0 760.7Z" fill="#e98b8b" fill-opacity=".26" stroke="#e08a8a" stroke-opacity=".45" stroke-width=".5"/><path d="M613.4 469.6 L611.8 466.5 L616.0 465.9 L620.1 467.7 L617.4 470.5Z" fill="#e98b8b" fill-opacity=".26" stroke="#e08a8a" stroke-opacity=".45" stroke-width=".5"/><path d="M521.7 652.1 L523.0 649.9 L530.0 649.9 L531.6 652.2 L527.9 656.4 L523.9 654.5Z" fill="#e98b8b" fill-opacity=".26" stroke="#e08a8a" stroke-opacity=".45" stroke-width=".5"/><path d="M791.8 783.6 L793.9 779.4 L801.8 778.1 L806.3 783.1 L799.7 785.7Z" fill="#e98b8b" fill-opacity=".26" stroke="#e08a8a" stroke-opacity=".45" stroke-width=".5"/><ellipse cx="753.4" cy="582.7" rx="4.4" ry="3.8" fill="#e98b8b" fill-opacity=".28" stroke="#e08a8a" stroke-opacity=".45" stroke-width=".5"/><path d="M783.6 677.2 L779.8 679.5 L776.8 678.8 L773.8 675.7 L778.3 672.8 L782.6 673.3Z" fill="#e98b8b" fill-opacity=".26" stroke="#e08a8a" stroke-opacity=".45" stroke-width=".5"/><ellipse cx="627.3" cy="367.5" rx="2.3" ry="2.0" fill="#e98b8b" fill-opacity=".28" stroke="#e08a8a" stroke-opacity=".45" stroke-width=".5"/><ellipse cx="701.2" cy="403.4" rx="3.9" ry="3.4" fill="#e98b8b" fill-opacity=".28" stroke="#e08a8a" stroke-opacity=".45" stroke-width=".5"/><ellipse cx="869.0" cy="740.9" rx="3.3" ry="2.9" fill="#e98b8b" fill-opacity=".28" stroke="#e08a8a" stroke-opacity=".45" stroke-width=".5"/><path d="M745.0 747.3 L744.6 750.1 L740.6 749.3 L740.6 747.1Z" fill="#e98b8b" fill-opacity=".26" stroke="#e08a8a" stroke-opacity=".45" stroke-width=".5"/><ellipse cx="570.6" cy="766.4" rx="3.3" ry="2.9" fill="#e98b8b" fill-opacity=".28" stroke="#e08a8a" stroke-opacity=".45" stroke-width=".5"/><ellipse cx="989.2" cy="652.9" rx="3.8" ry="3.3" fill="#e98b8b" fill-opacity=".28" stroke="#e08a8a" stroke-opacity=".45" stroke-width=".5"/><ellipse cx="683.4" cy="462.5" rx="5.8" ry="5.0" fill="#e98b8b" fill-opacity=".28" stroke="#e08a8a" stroke-opacity=".45" stroke-width=".5"/><ellipse cx="537.7" cy="699.1" rx="4.4" ry="3.8" fill="#e98b8b" fill-opacity=".28" stroke="#e08a8a" stroke-opacity=".45" stroke-width=".5"/><path d="M969.1 767.3 L971.3 765.6 L975.0 764.6 L978.1 765.6 L976.7 768.4 L973.5 770.0Z" fill="#e98b8b" fill-opacity=".26" stroke="#e08a8a" stroke-opacity=".45" stroke-width=".5"/><ellipse cx="779.2" cy="488.8" rx="4.4" ry="3.9" fill="#e98b8b" fill-opacity=".28" stroke="#e08a8a" stroke-opacity=".45" stroke-width=".5"/><path d="M971.3 395.0 L977.8 394.5 L980.1 398.4 L977.9 401.3 L971.0 400.4 L967.7 396.7Z" fill="#e98b8b" fill-opacity=".26" stroke="#e08a8a" stroke-opacity=".45" stroke-width=".5"/><path d="M789.2 772.5 L790.5 774.8 L786.2 777.7 L783.1 777.9 L781.4 773.3 L784.1 771.3Z" fill="#e98b8b" fill-opacity=".26" stroke="#e08a8a" stroke-opacity=".45" stroke-width=".5"/><path d="M843.1 785.7 L849.0 789.7 L844.5 792.7 L836.4 789.0Z" fill="#e98b8b" fill-opacity=".26" stroke="#e08a8a" stroke-opacity=".45" stroke-width=".5"/><path d="M863.6 725.8 L864.3 727.8 L860.8 728.3 L858.5 727.1 L858.8 725.2 L861.7 724.4Z" fill="#e98b8b" fill-opacity=".26" stroke="#e08a8a" stroke-opacity=".45" stroke-width=".5"/><path d="M595.5 620.0 L604.0 620.0 L604.2 625.0 L596.5 624.8Z" fill="#e98b8b" fill-opacity=".26" stroke="#e08a8a" stroke-opacity=".45" stroke-width=".5"/><path d="M951.1 790.7 L959.4 791.9 L957.4 797.2 L950.3 797.7 L947.1 795.0Z" fill="#e98b8b" fill-opacity=".26" stroke="#e08a8a" stroke-opacity=".45" stroke-width=".5"/><path d="M999.4 572.1 L1003.6 571.2 L1004.8 574.8 L1000.8 574.9Z" fill="#e98b8b" fill-opacity=".26" stroke="#e08a8a" stroke-opacity=".45" stroke-width=".5"/><ellipse cx="754.9" cy="468.5" rx="2.1" ry="1.8" fill="#e98b8b" fill-opacity=".28" stroke="#e08a8a" stroke-opacity=".45" stroke-width=".5"/><ellipse cx="709.7" cy="485.1" rx="3.4" ry="2.9" fill="#e98b8b" fill-opacity=".28" stroke="#e08a8a" stroke-opacity=".45" stroke-width=".5"/><ellipse cx="961.2" cy="702.4" rx="3.1" ry="2.7" fill="#e98b8b" fill-opacity=".28" stroke="#e08a8a" stroke-opacity=".45" stroke-width=".5"/><ellipse cx="987.3" cy="761.6" rx="4.8" ry="4.2" fill="#e98b8b" fill-opacity=".28" stroke="#e08a8a" stroke-opacity=".45" stroke-width=".5"/><path d="M727.0 733.0 L731.6 731.3 L737.4 733.8 L737.3 737.3 L732.6 739.4 L726.9 737.3Z" fill="#e98b8b" fill-opacity=".26" stroke="#e08a8a" stroke-opacity=".45" stroke-width=".5"/><path d="M908.5 521.6 L903.3 527.2 L897.4 522.3 L904.5 517.5Z" fill="#e98b8b" fill-opacity=".26" stroke="#e08a8a" stroke-opacity=".45" stroke-width=".5"/><ellipse cx="778.1" cy="494.7" rx="2.5" ry="2.2" fill="#e98b8b" fill-opacity=".28" stroke="#e08a8a" stroke-opacity=".45" stroke-width=".5"/><ellipse cx="673.1" cy="554.6" rx="5.6" ry="4.8" fill="#e98b8b" fill-opacity=".28" stroke="#e08a8a" stroke-opacity=".45" stroke-width=".5"/><ellipse cx="784.0" cy="418.9" rx="3.4" ry="3.0" fill="#e98b8b" fill-opacity=".28" stroke="#e08a8a" stroke-opacity=".45" stroke-width=".5"/><path d="M694.9 695.6 L687.8 696.0 L683.9 692.3 L688.7 687.9 L696.8 689.4Z" fill="#e98b8b" fill-opacity=".26" stroke="#e08a8a" stroke-opacity=".45" stroke-width=".5"/><ellipse cx="543.6" cy="332.9" rx="5.8" ry="5.0" fill="#e98b8b" fill-opacity=".28" stroke="#e08a8a" stroke-opacity=".45" stroke-width=".5"/><ellipse cx="908.7" cy="516.7" rx="2.9" ry="2.6" fill="#e98b8b" fill-opacity=".28" stroke="#e08a8a" stroke-opacity=".45" stroke-width=".5"/><ellipse cx="942.3" cy="681.0" rx="3.1" ry="2.7" fill="#e98b8b" fill-opacity=".28" stroke="#e08a8a" stroke-opacity=".45" stroke-width=".5"/><ellipse cx="709.1" cy="661.3" rx="3.2" ry="2.8" fill="#e98b8b" fill-opacity=".28" stroke="#e08a8a" stroke-opacity=".45" stroke-width=".5"/><path d="M755.7 439.8 L750.9 440.0 L749.9 436.7 L750.2 434.3 L754.4 434.7 L757.8 436.8Z" fill="#e98b8b" fill-opacity=".26" stroke="#e08a8a" stroke-opacity=".45" stroke-width=".5"/><path d="M978.4 421.5 L975.2 414.8 L982.2 412.7 L984.1 418.2Z" fill="#e98b8b" fill-opacity=".26" stroke="#e08a8a" stroke-opacity=".45" stroke-width=".5"/><path d="M648.6 514.2 L649.7 511.5 L654.4 511.2 L656.8 512.9 L656.0 517.3 L650.1 516.9Z" fill="#e98b8b" fill-opacity=".26" stroke="#e08a8a" stroke-opacity=".45" stroke-width=".5"/><path d="M528.6 709.4 L530.3 707.6 L534.9 706.3 L535.9 709.9 L532.9 711.0Z" fill="#e98b8b" fill-opacity=".26" stroke="#e08a8a" stroke-opacity=".45" stroke-width=".5"/><ellipse cx="784.9" cy="533.0" rx="2.2" ry="1.9" fill="#e98b8b" fill-opacity=".28" stroke="#e08a8a" stroke-opacity=".45" stroke-width=".5"/><path d="M547.4 748.0 L550.7 744.6 L555.3 743.1 L555.6 746.5 L552.0 750.3Z" fill="#e98b8b" fill-opacity=".26" stroke="#e08a8a" stroke-opacity=".45" stroke-width=".5"/><path d="M670.9 374.7 L670.3 372.4 L671.5 371.5 L674.8 371.7 L675.8 373.1 L674.6 374.5Z" fill="#e98b8b" fill-opacity=".26" stroke="#e08a8a" stroke-opacity=".45" stroke-width=".5"/><path d="M629.4 578.6 L628.7 574.9 L631.5 573.7 L635.9 575.8 L633.4 578.9Z" fill="#e98b8b" fill-opacity=".26" stroke="#e08a8a" stroke-opacity=".45" stroke-width=".5"/><path d="M721.2 534.9 L721.4 539.9 L713.0 541.1 L708.7 537.3 L708.8 533.1 L717.5 531.3Z" fill="#e98b8b" fill-opacity=".26" stroke="#e08a8a" stroke-opacity=".45" stroke-width=".5"/><ellipse cx="652.6" cy="687.2" rx="4.1" ry="3.6" fill="#e98b8b" fill-opacity=".28" stroke="#e08a8a" stroke-opacity=".45" stroke-width=".5"/><path d="M1001.6 692.2 L999.4 695.4 L994.3 693.7 L993.7 691.0 L996.3 688.0 L1000.8 689.7Z" fill="#e98b8b" fill-opacity=".26" stroke="#e08a8a" stroke-opacity=".45" stroke-width=".5"/><path d="M735.1 786.3 L738.1 786.4 L741.6 789.0 L738.5 790.3 L735.6 789.8Z" fill="#e98b8b" fill-opacity=".26" stroke="#e08a8a" stroke-opacity=".45" stroke-width=".5"/><path d="M791.3 431.1 L787.1 432.7 L782.0 430.9 L785.2 426.3 L793.0 427.8Z" fill="#e98b8b" fill-opacity=".26" stroke="#e08a8a" stroke-opacity=".45" stroke-width=".5"/><path d="M508.0 603.5 L509.4 600.3 L516.9 600.1 L516.8 604.1 L514.4 605.9 L510.0 606.7Z" fill="#e98b8b" fill-opacity=".26" stroke="#e08a8a" stroke-opacity=".45" stroke-width=".5"/><path d="M730.9 725.0 L727.6 721.7 L731.6 718.5 L736.6 719.6 L735.3 724.7Z" fill="#e98b8b" fill-opacity=".26" stroke="#e08a8a" stroke-opacity=".45" stroke-width=".5"/><path d="M592.5 670.0 L590.7 668.4 L588.8 665.3 L591.7 663.9 L595.0 665.2 L595.9 668.1Z" fill="#e98b8b" fill-opacity=".26" stroke="#e08a8a" stroke-opacity=".45" stroke-width=".5"/><path d="M599.6 377.4 L595.8 379.5 L591.8 379.0 L590.7 375.9 L596.4 372.1 L599.7 374.1Z" fill="#e98b8b" fill-opacity=".26" stroke="#e08a8a" stroke-opacity=".45" stroke-width=".5"/><path d="M722.5 684.5 L724.5 679.9 L734.4 683.5 L727.9 687.8Z" fill="#e98b8b" fill-opacity=".26" stroke="#e08a8a" stroke-opacity=".45" stroke-width=".5"/><ellipse cx="578.0" cy="558.5" rx="4.0" ry="3.5" fill="#e98b8b" fill-opacity=".28" stroke="#e08a8a" stroke-opacity=".45" stroke-width=".5"/><ellipse cx="894.7" cy="443.0" rx="5.9" ry="5.1" fill="#e98b8b" fill-opacity=".28" stroke="#e08a8a" stroke-opacity=".45" stroke-width=".5"/><ellipse cx="916.6" cy="435.4" rx="4.9" ry="4.3" fill="#e98b8b" fill-opacity=".28" stroke="#e08a8a" stroke-opacity=".45" stroke-width=".5"/><path d="M739.9 444.0 L731.4 444.2 L729.5 438.4 L736.5 438.0 L739.9 440.5Z" fill="#e98b8b" fill-opacity=".26" stroke="#e08a8a" stroke-opacity=".45" stroke-width=".5"/><ellipse cx="697.7" cy="681.6" rx="3.3" ry="2.9" fill="#e98b8b" fill-opacity=".28" stroke="#e08a8a" stroke-opacity=".45" stroke-width=".5"/><ellipse cx="770.5" cy="750.5" rx="4.6" ry="4.0" fill="#e98b8b" fill-opacity=".28" stroke="#e08a8a" stroke-opacity=".45" stroke-width=".5"/><ellipse cx="716.7" cy="433.0" rx="5.2" ry="4.6" fill="#e98b8b" fill-opacity=".28" stroke="#e08a8a" stroke-opacity=".45" stroke-width=".5"/><ellipse cx="722.7" cy="741.7" rx="3.2" ry="2.8" fill="#e98b8b" fill-opacity=".28" stroke="#e08a8a" stroke-opacity=".45" stroke-width=".5"/><path d="M664.6 625.1 L665.1 622.3 L666.9 620.8 L671.3 621.8 L673.1 624.4 L669.2 625.3Z" fill="#e98b8b" fill-opacity=".26" stroke="#e08a8a" stroke-opacity=".45" stroke-width=".5"/><path d="M772.9 592.8 L777.0 591.1 L782.7 591.7 L782.4 596.0 L775.3 596.8Z" fill="#e98b8b" fill-opacity=".26" stroke="#e08a8a" stroke-opacity=".45" stroke-width=".5"/><path d="M752.5 677.5 L755.6 674.6 L761.2 674.9 L762.2 679.1 L758.3 680.6Z" fill="#e98b8b" fill-opacity=".26" stroke="#e08a8a" stroke-opacity=".45" stroke-width=".5"/><ellipse cx="511.3" cy="439.7" rx="4.4" ry="3.8" fill="#e98b8b" fill-opacity=".28" stroke="#e08a8a" stroke-opacity=".45" stroke-width=".5"/><ellipse cx="588.3" cy="723.9" rx="3.4" ry="3.0" fill="#e98b8b" fill-opacity=".28" stroke="#e08a8a" stroke-opacity=".45" stroke-width=".5"/><ellipse cx="648.1" cy="681.9" rx="4.8" ry="4.1" fill="#e98b8b" fill-opacity=".28" stroke="#e08a8a" stroke-opacity=".45" stroke-width=".5"/><path d="M715.9 435.9 L710.8 434.9 L711.2 431.8 L717.0 432.3Z" fill="#e98b8b" fill-opacity=".26" stroke="#e08a8a" stroke-opacity=".45" stroke-width=".5"/><ellipse cx="847.8" cy="685.8" rx="4.7" ry="4.1" fill="#e98b8b" fill-opacity=".28" stroke="#e08a8a" stroke-opacity=".45" stroke-width=".5"/><path d="M983.2 759.1 L981.4 756.8 L982.0 754.3 L986.2 754.1 L989.4 757.0 L986.9 759.3Z" fill="#e98b8b" fill-opacity=".26" stroke="#e08a8a" stroke-opacity=".45" stroke-width=".5"/><ellipse cx="606.9" cy="331.5" rx="5.4" ry="4.7" fill="#e98b8b" fill-opacity=".28" stroke="#e08a8a" stroke-opacity=".45" stroke-width=".5"/><path d="M651.8 770.5 L647.0 771.2 L645.7 767.5 L649.3 766.5Z" fill="#e98b8b" fill-opacity=".26" stroke="#e08a8a" stroke-opacity=".45" stroke-width=".5"/><path d="M870.9 578.2 L870.6 575.1 L875.5 574.7 L876.5 576.7 L875.2 578.9Z" fill="#e98b8b" fill-opacity=".26" stroke="#e08a8a" stroke-opacity=".45" stroke-width=".5"/><ellipse cx="686.1" cy="591.9" rx="3.5" ry="3.1" fill="#e98b8b" fill-opacity=".28" stroke="#e08a8a" stroke-opacity=".45" stroke-width=".5"/><ellipse cx="581.8" cy="686.9" rx="3.8" ry="3.3" fill="#e98b8b" fill-opacity=".28" stroke="#e08a8a" stroke-opacity=".45" stroke-width=".5"/><path d="M941.7 398.3 L937.3 399.3 L935.9 397.1 L938.7 394.6Z" fill="#e98b8b" fill-opacity=".26" stroke="#e08a8a" stroke-opacity=".45" stroke-width=".5"/><path d="M646.7 748.9 L647.9 755.1 L638.6 756.2 L638.2 750.9Z" fill="#e98b8b" fill-opacity=".26" stroke="#e08a8a" stroke-opacity=".45" stroke-width=".5"/><path d="M671.1 701.0 L667.7 701.4 L662.5 699.9 L663.9 697.1 L667.7 695.9 L671.4 698.0Z" fill="#e98b8b" fill-opacity=".26" stroke="#e08a8a" stroke-opacity=".45" stroke-width=".5"/><ellipse cx="803.7" cy="582.0" rx="2.2" ry="1.9" fill="#e98b8b" fill-opacity=".28" stroke="#e08a8a" stroke-opacity=".45" stroke-width=".5"/><path d="M571.6 582.2 L577.3 580.5 L579.9 584.4 L575.3 587.1 L570.6 586.3Z" fill="#e98b8b" fill-opacity=".26" stroke="#e08a8a" stroke-opacity=".45" stroke-width=".5"/><path d="M855.1 705.6 L851.7 699.9 L858.1 699.1 L863.1 701.9 L860.1 706.2Z" fill="#e98b8b" fill-opacity=".26" stroke="#e08a8a" stroke-opacity=".45" stroke-width=".5"/><ellipse cx="568.2" cy="572.0" rx="5.1" ry="4.4" fill="#e98b8b" fill-opacity=".28" stroke="#e08a8a" stroke-opacity=".45" stroke-width=".5"/><ellipse cx="839.6" cy="610.6" rx="5.7" ry="4.9" fill="#e98b8b" fill-opacity=".28" stroke="#e08a8a" stroke-opacity=".45" stroke-width=".5"/><ellipse cx="523.1" cy="579.8" rx="3.4" ry="3.0" fill="#e98b8b" fill-opacity=".28" stroke="#e08a8a" stroke-opacity=".45" stroke-width=".5"/><path d="M695.8 745.5 L696.1 743.7 L696.9 741.2 L700.2 741.6 L702.2 743.9 L699.2 745.7Z" fill="#e98b8b" fill-opacity=".26" stroke="#e08a8a" stroke-opacity=".45" stroke-width=".5"/><path d="M872.7 380.8 L868.4 380.1 L867.2 377.3 L870.2 375.3 L875.6 376.5 L874.7 379.0Z" fill="#e98b8b" fill-opacity=".26" stroke="#e08a8a" stroke-opacity=".45" stroke-width=".5"/><path d="M983.6 753.9 L980.1 757.2 L976.5 754.4 L979.0 751.7Z" fill="#e98b8b" fill-opacity=".26" stroke="#e08a8a" stroke-opacity=".45" stroke-width=".5"/><ellipse cx="639.0" cy="407.4" rx="5.4" ry="4.7" fill="#e98b8b" fill-opacity=".28" stroke="#e08a8a" stroke-opacity=".45" stroke-width=".5"/><path d="M721.5 476.2 L719.0 479.2 L714.2 479.5 L713.0 474.6 L717.3 473.9Z" fill="#e98b8b" fill-opacity=".26" stroke="#e08a8a" stroke-opacity=".45" stroke-width=".5"/><path d="M595.5 448.7 L594.3 451.2 L589.8 451.5 L588.8 449.3 L591.1 447.5Z" fill="#e98b8b" fill-opacity=".26" stroke="#e08a8a" stroke-opacity=".45" stroke-width=".5"/><ellipse cx="507.6" cy="548.9" rx="4.0" ry="3.5" fill="#e98b8b" fill-opacity=".28" stroke="#e08a8a" stroke-opacity=".45" stroke-width=".5"/><ellipse cx="582.1" cy="343.9" rx="5.9" ry="5.2" fill="#e98b8b" fill-opacity=".28" stroke="#e08a8a" stroke-opacity=".45" stroke-width=".5"/><ellipse cx="541.5" cy="429.5" rx="5.0" ry="4.4" fill="#e98b8b" fill-opacity=".28" stroke="#e08a8a" stroke-opacity=".45" stroke-width=".5"/><path d="M850.5 475.3 L845.8 479.3 L836.4 478.2 L837.1 473.1 L847.1 470.9Z" fill="#e98b8b" fill-opacity=".26" stroke="#e08a8a" stroke-opacity=".45" stroke-width=".5"/><path d="M780.5 486.6 L779.6 483.4 L783.9 482.5 L787.2 483.1 L787.0 486.3 L783.1 489.1Z" fill="#e98b8b" fill-opacity=".26" stroke="#e08a8a" stroke-opacity=".45" stroke-width=".5"/><ellipse cx="750.5" cy="790.7" rx="4.3" ry="3.7" fill="#e98b8b" fill-opacity=".28" stroke="#e08a8a" stroke-opacity=".45" stroke-width=".5"/><path d="M743.6 640.5 L738.4 639.5 L739.3 635.0 L746.5 636.0Z" fill="#e98b8b" fill-opacity=".26" stroke="#e08a8a" stroke-opacity=".45" stroke-width=".5"/><path d="M724.0 618.2 L727.0 618.3 L730.6 620.7 L729.5 622.9 L725.1 623.8 L722.1 622.0Z" fill="#e98b8b" fill-opacity=".26" stroke="#e08a8a" stroke-opacity=".45" stroke-width=".5"/><ellipse cx="652.9" cy="475.1" rx="4.8" ry="4.2" fill="#e98b8b" fill-opacity=".28" stroke="#e08a8a" stroke-opacity=".45" stroke-width=".5"/><ellipse cx="742.6" cy="681.4" rx="3.0" ry="2.6" fill="#e98b8b" fill-opacity=".28" stroke="#e08a8a" stroke-opacity=".45" stroke-width=".5"/><ellipse cx="765.2" cy="620.4" rx="2.6" ry="2.3" fill="#e98b8b" fill-opacity=".28" stroke="#e08a8a" stroke-opacity=".45" stroke-width=".5"/><ellipse cx="625.0" cy="488.0" rx="5.2" ry="4.5" fill="#e98b8b" fill-opacity=".28" stroke="#e08a8a" stroke-opacity=".45" stroke-width=".5"/><path d="M785.7 404.2 L781.6 405.6 L775.4 405.3 L774.4 400.8 L778.8 399.4 L784.0 400.6Z" fill="#e98b8b" fill-opacity=".26" stroke="#e08a8a" stroke-opacity=".45" stroke-width=".5"/><path d="M737.9 561.3 L735.8 557.3 L741.9 554.5 L746.3 558.2 L746.3 561.3Z" fill="#e98b8b" fill-opacity=".26" stroke="#e08a8a" stroke-opacity=".45" stroke-width=".5"/><path d="M781.2 362.3 L788.5 365.2 L782.7 369.2 L777.0 364.8Z" fill="#e98b8b" fill-opacity=".26" stroke="#e08a8a" stroke-opacity=".45" stroke-width=".5"/><ellipse cx="799.7" cy="483.4" rx="3.4" ry="2.9" fill="#e98b8b" fill-opacity=".28" stroke="#e08a8a" stroke-opacity=".45" stroke-width=".5"/><ellipse cx="711.7" cy="326.4" rx="3.0" ry="2.6" fill="#e98b8b" fill-opacity=".28" stroke="#e08a8a" stroke-opacity=".45" stroke-width=".5"/><path d="M587.1 362.6 L582.3 363.2 L580.8 359.6 L584.9 359.7Z" fill="#e98b8b" fill-opacity=".26" stroke="#e08a8a" stroke-opacity=".45" stroke-width=".5"/><path d="M783.4 765.7 L789.4 765.1 L790.7 767.6 L788.8 771.8 L784.6 771.3 L782.5 767.5Z" fill="#e98b8b" fill-opacity=".26" stroke="#e08a8a" stroke-opacity=".45" stroke-width=".5"/><ellipse cx="975.9" cy="506.2" rx="4.1" ry="3.5" fill="#e98b8b" fill-opacity=".28" stroke="#e08a8a" stroke-opacity=".45" stroke-width=".5"/><path d="M970.9 785.4 L976.1 782.1 L984.7 783.7 L984.1 790.0 L977.0 790.7Z" fill="#e98b8b" fill-opacity=".26" stroke="#e08a8a" stroke-opacity=".45" stroke-width=".5"/><path d="M530.9 632.7 L533.7 630.8 L536.9 631.6 L537.5 634.3 L533.6 635.0Z" fill="#e98b8b" fill-opacity=".26" stroke="#e08a8a" stroke-opacity=".45" stroke-width=".5"/><path d="M621.7 744.6 L615.7 742.4 L613.4 739.6 L616.6 737.6 L623.9 737.4 L625.2 740.9Z" fill="#e98b8b" fill-opacity=".26" stroke="#e08a8a" stroke-opacity=".45" stroke-width=".5"/><path d="M761.8 489.2 L763.0 486.9 L766.2 487.6 L767.2 489.3 L764.8 490.7Z" fill="#e98b8b" fill-opacity=".26" stroke="#e08a8a" stroke-opacity=".45" stroke-width=".5"/><path d="M549.7 605.2 L547.1 603.6 L547.4 601.6 L551.3 601.8 L551.8 603.3Z" fill="#e98b8b" fill-opacity=".26" stroke="#e08a8a" stroke-opacity=".45" stroke-width=".5"/><ellipse cx="641.5" cy="540.3" rx="4.1" ry="3.6" fill="#e98b8b" fill-opacity=".28" stroke="#e08a8a" stroke-opacity=".45" stroke-width=".5"/><path d="M997.3 732.6 L998.0 734.2 L996.9 736.2 L993.3 736.2 L992.8 734.6 L992.8 732.9Z" fill="#e98b8b" fill-opacity=".26" stroke="#e08a8a" stroke-opacity=".45" stroke-width=".5"/><ellipse cx="714.7" cy="511.7" rx="2.3" ry="2.0" fill="#e98b8b" fill-opacity=".28" stroke="#e08a8a" stroke-opacity=".45" stroke-width=".5"/><path d="M828.4 606.8 L830.4 606.0 L832.9 606.2 L833.9 608.1 L831.8 610.5 L828.1 609.6Z" fill="#e98b8b" fill-opacity=".26" stroke="#e08a8a" stroke-opacity=".45" stroke-width=".5"/><ellipse cx="818.2" cy="740.1" rx="5.1" ry="4.4" fill="#e98b8b" fill-opacity=".28" stroke="#e08a8a" stroke-opacity=".45" stroke-width=".5"/><ellipse cx="933.6" cy="634.5" rx="4.4" ry="3.8" fill="#e98b8b" fill-opacity=".28" stroke="#e08a8a" stroke-opacity=".45" stroke-width=".5"/><path d="M640.8 409.2 L640.7 407.2 L645.0 407.0 L646.5 408.4 L646.6 410.3 L643.2 410.7Z" fill="#e98b8b" fill-opacity=".26" stroke="#e08a8a" stroke-opacity=".45" stroke-width=".5"/><ellipse cx="739.2" cy="406.5" rx="4.4" ry="3.8" fill="#e98b8b" fill-opacity=".28" stroke="#e08a8a" stroke-opacity=".45" stroke-width=".5"/><ellipse cx="834.3" cy="696.6" rx="3.7" ry="3.2" fill="#e98b8b" fill-opacity=".28" stroke="#e08a8a" stroke-opacity=".45" stroke-width=".5"/><path d="M535.4 423.2 L542.4 421.6 L544.1 426.9 L536.1 427.1Z" fill="#e98b8b" fill-opacity=".26" stroke="#e08a8a" stroke-opacity=".45" stroke-width=".5"/><ellipse cx="806.8" cy="516.5" rx="3.8" ry="3.3" fill="#e98b8b" fill-opacity=".28" stroke="#e08a8a" stroke-opacity=".45" stroke-width=".5"/><path d="M778.4 361.9 L783.5 358.6 L789.7 358.8 L788.7 363.1 L783.8 364.5Z" fill="#e98b8b" fill-opacity=".26" stroke="#e08a8a" stroke-opacity=".45" stroke-width=".5"/><ellipse cx="532.9" cy="486.3" rx="2.2" ry="1.9" fill="#e98b8b" fill-opacity=".28" stroke="#e08a8a" stroke-opacity=".45" stroke-width=".5"/><path d="M724.3 328.7 L720.4 330.3 L715.6 329.4 L715.7 326.6 L719.8 326.0Z" fill="#e98b8b" fill-opacity=".26" stroke="#e08a8a" stroke-opacity=".45" stroke-width=".5"/><ellipse cx="544.0" cy="737.1" rx="4.1" ry="3.6" fill="#e98b8b" fill-opacity=".28" stroke="#e08a8a" stroke-opacity=".45" stroke-width=".5"/><path d="M991.2 698.7 L987.5 699.3 L985.1 697.0 L986.4 695.2 L990.5 695.1Z" fill="#e98b8b" fill-opacity=".26" stroke="#e08a8a" stroke-opacity=".45" stroke-width=".5"/><path d="M803.7 782.3 L802.5 779.8 L806.5 776.5 L811.9 778.9 L809.9 783.0Z" fill="#e98b8b" fill-opacity=".26" stroke="#e08a8a" stroke-opacity=".45" stroke-width=".5"/><path d="M673.5 757.6 L670.3 756.9 L671.0 755.4 L674.3 754.8Z" fill="#e98b8b" fill-opacity=".26" stroke="#e08a8a" stroke-opacity=".45" stroke-width=".5"/><path d="M703.0 669.3 L701.1 665.8 L704.7 665.1 L707.0 666.7Z" fill="#e98b8b" fill-opacity=".26" stroke="#e08a8a" stroke-opacity=".45" stroke-width=".5"/><ellipse cx="593.4" cy="350.0" rx="2.4" ry="2.1" fill="#e98b8b" fill-opacity=".28" stroke="#e08a8a" stroke-opacity=".45" stroke-width=".5"/><ellipse cx="643.5" cy="599.5" rx="4.6" ry="4.0" fill="#e98b8b" fill-opacity=".28" stroke="#e08a8a" stroke-opacity=".45" stroke-width=".5"/><ellipse cx="758.7" cy="482.3" rx="4.3" ry="3.8" fill="#e98b8b" fill-opacity=".28" stroke="#e08a8a" stroke-opacity=".45" stroke-width=".5"/><path d="M805.5 324.9 L813.2 320.8 L818.1 324.6 L811.7 328.1Z" fill="#e98b8b" fill-opacity=".26" stroke="#e08a8a" stroke-opacity=".45" stroke-width=".5"/><path d="M756.8 741.8 L760.9 742.8 L760.5 745.9 L757.4 746.7 L753.6 747.1 L753.6 744.0Z" fill="#e98b8b" fill-opacity=".26" stroke="#e08a8a" stroke-opacity=".45" stroke-width=".5"/><path d="M832.0 339.2 L840.4 336.6 L843.2 341.0 L837.7 346.0 L832.2 343.7Z" fill="#e98b8b" fill-opacity=".26" stroke="#e08a8a" stroke-opacity=".45" stroke-width=".5"/><ellipse cx="549.0" cy="490.0" rx="4.7" ry="4.1" fill="#e98b8b" fill-opacity=".28" stroke="#e08a8a" stroke-opacity=".45" stroke-width=".5"/><ellipse cx="949.8" cy="656.3" rx="4.9" ry="4.2" fill="#e98b8b" fill-opacity=".28" stroke="#e08a8a" stroke-opacity=".45" stroke-width=".5"/><ellipse cx="734.4" cy="774.4" rx="2.5" ry="2.2" fill="#e98b8b" fill-opacity=".28" stroke="#e08a8a" stroke-opacity=".45" stroke-width=".5"/><path d="M783.2 646.1 L781.9 650.7 L774.4 649.9 L775.1 644.2Z" fill="#e98b8b" fill-opacity=".26" stroke="#e08a8a" stroke-opacity=".45" stroke-width=".5"/><ellipse cx="537.1" cy="759.2" rx="5.4" ry="4.7" fill="#e98b8b" fill-opacity=".28" stroke="#e08a8a" stroke-opacity=".45" stroke-width=".5"/><ellipse cx="580.2" cy="759.3" rx="5.3" ry="4.6" fill="#e98b8b" fill-opacity=".28" stroke="#e08a8a" stroke-opacity=".45" stroke-width=".5"/><path d="M902.5 602.5 L899.4 600.7 L899.7 598.7 L903.4 597.9 L904.8 600.7Z" fill="#e98b8b" fill-opacity=".26" stroke="#e08a8a" stroke-opacity=".45" stroke-width=".5"/><ellipse cx="793.5" cy="598.4" rx="4.3" ry="3.8" fill="#e98b8b" fill-opacity=".28" stroke="#e08a8a" stroke-opacity=".45" stroke-width=".5"/><path d="M503.9 503.3 L500.0 498.8 L506.5 496.9 L512.7 500.9Z" fill="#e98b8b" fill-opacity=".26" stroke="#e08a8a" stroke-opacity=".45" stroke-width=".5"/><path d="M781.1 794.2 L774.6 792.4 L777.6 787.4 L783.9 790.1Z" fill="#e98b8b" fill-opacity=".26" stroke="#e08a8a" stroke-opacity=".45" stroke-width=".5"/><path d="M903.3 439.5 L896.9 437.7 L900.2 433.4 L904.5 433.7 L905.9 437.9Z" fill="#e98b8b" fill-opacity=".26" stroke="#e08a8a" stroke-opacity=".45" stroke-width=".5"/><ellipse cx="671.8" cy="395.0" rx="2.7" ry="2.4" fill="#e98b8b" fill-opacity=".28" stroke="#e08a8a" stroke-opacity=".45" stroke-width=".5"/><ellipse cx="586.9" cy="372.2" rx="4.1" ry="3.6" fill="#e98b8b" fill-opacity=".28" stroke="#e08a8a" stroke-opacity=".45" stroke-width=".5"/><path d="M755.1 375.3 L751.0 378.1 L748.6 375.3 L752.3 373.1Z" fill="#e98b8b" fill-opacity=".26" stroke="#e08a8a" stroke-opacity=".45" stroke-width=".5"/><path d="M709.8 496.1 L702.5 495.0 L702.5 489.7 L709.8 491.3Z" fill="#e98b8b" fill-opacity=".26" stroke="#e08a8a" stroke-opacity=".45" stroke-width=".5"/><ellipse cx="853.3" cy="391.0" rx="4.0" ry="3.4" fill="#e98b8b" fill-opacity=".28" stroke="#e08a8a" stroke-opacity=".45" stroke-width=".5"/><ellipse cx="828.9" cy="673.1" rx="3.3" ry="2.9" fill="#e98b8b" fill-opacity=".28" stroke="#e08a8a" stroke-opacity=".45" stroke-width=".5"/><path d="M723.3 755.7 L730.7 757.2 L729.2 761.0 L722.0 761.2Z" fill="#e98b8b" fill-opacity=".26" stroke="#e08a8a" stroke-opacity=".45" stroke-width=".5"/><ellipse cx="932.8" cy="692.5" rx="3.4" ry="2.9" fill="#e98b8b" fill-opacity=".28" stroke="#e08a8a" stroke-opacity=".45" stroke-width=".5"/><ellipse cx="830.2" cy="376.8" rx="4.0" ry="3.5" fill="#e98b8b" fill-opacity=".28" stroke="#e08a8a" stroke-opacity=".45" stroke-width=".5"/><ellipse cx="828.3" cy="625.6" rx="4.5" ry="3.9" fill="#e98b8b" fill-opacity=".28" stroke="#e08a8a" stroke-opacity=".45" stroke-width=".5"/><path d="M954.9 656.8 L955.5 662.1 L948.9 663.9 L944.3 659.9 L945.7 656.6 L949.4 655.9Z" fill="#e98b8b" fill-opacity=".26" stroke="#e08a8a" stroke-opacity=".45" stroke-width=".5"/><ellipse cx="541.4" cy="630.5" rx="3.8" ry="3.3" fill="#e98b8b" fill-opacity=".28" stroke="#e08a8a" stroke-opacity=".45" stroke-width=".5"/><path d="M714.2 523.1 L713.5 517.3 L720.5 517.9 L719.5 524.1Z" fill="#e98b8b" fill-opacity=".26" stroke="#e08a8a" stroke-opacity=".45" stroke-width=".5"/><path d="M802.6 789.2 L799.8 788.4 L800.2 786.0 L802.6 785.1 L804.4 786.8Z" fill="#e98b8b" fill-opacity=".26" stroke="#e08a8a" stroke-opacity=".45" stroke-width=".5"/><path d="M822.1 477.9 L823.5 478.8 L822.8 480.4 L820.1 481.6 L818.7 480.0 L819.2 477.8Z" fill="#e98b8b" fill-opacity=".26" stroke="#e08a8a" stroke-opacity=".45" stroke-width=".5"/><ellipse cx="668.7" cy="680.3" rx="5.5" ry="4.8" fill="#e98b8b" fill-opacity=".28" stroke="#e08a8a" stroke-opacity=".45" stroke-width=".5"/><path d="M711.1 432.7 L716.0 430.6 L722.6 433.8 L719.3 437.7 L712.8 436.6Z" fill="#e98b8b" fill-opacity=".26" stroke="#e08a8a" stroke-opacity=".45" stroke-width=".5"/><path d="M708.1 732.1 L712.9 734.8 L708.4 737.7 L706.0 735.1Z" fill="#e98b8b" fill-opacity=".26" stroke="#e08a8a" stroke-opacity=".45" stroke-width=".5"/><ellipse cx="916.0" cy="763.2" rx="4.1" ry="3.6" fill="#e98b8b" fill-opacity=".28" stroke="#e08a8a" stroke-opacity=".45" stroke-width=".5"/><ellipse cx="543.2" cy="445.8" rx="5.9" ry="5.1" fill="#e98b8b" fill-opacity=".28" stroke="#e08a8a" stroke-opacity=".45" stroke-width=".5"/><path d="M640.4 576.1 L638.0 573.7 L639.5 572.1 L642.3 573.5 L642.4 575.5Z" fill="#e98b8b" fill-opacity=".26" stroke="#e08a8a" stroke-opacity=".45" stroke-width=".5"/><path d="M591.1 744.7 L597.7 747.8 L594.8 751.6 L586.8 748.7Z" fill="#e98b8b" fill-opacity=".26" stroke="#e08a8a" stroke-opacity=".45" stroke-width=".5"/><ellipse cx="528.4" cy="795.2" rx="4.2" ry="3.7" fill="#e98b8b" fill-opacity=".28" stroke="#e08a8a" stroke-opacity=".45" stroke-width=".5"/><ellipse cx="536.0" cy="680.8" rx="2.8" ry="2.4" fill="#e98b8b" fill-opacity=".28" stroke="#e08a8a" stroke-opacity=".45" stroke-width=".5"/><ellipse cx="568.7" cy="696.6" rx="4.4" ry="3.9" fill="#e98b8b" fill-opacity=".28" stroke="#e08a8a" stroke-opacity=".45" stroke-width=".5"/><path d="M931.9 655.1 L937.2 655.9 L940.2 658.9 L936.8 663.0 L931.2 662.4 L927.7 659.7Z" fill="#e98b8b" fill-opacity=".26" stroke="#e08a8a" stroke-opacity=".45" stroke-width=".5"/><ellipse cx="611.3" cy="639.9" rx="3.6" ry="3.2" fill="#e98b8b" fill-opacity=".28" stroke="#e08a8a" stroke-opacity=".45" stroke-width=".5"/><path d="M550.3 630.1 L558.2 632.6 L556.2 637.1 L549.6 636.6Z" fill="#e98b8b" fill-opacity=".26" stroke="#e08a8a" stroke-opacity=".45" stroke-width=".5"/><path d="M698.6 460.7 L699.9 463.8 L697.6 465.9 L691.8 464.4 L693.0 460.9Z" fill="#e98b8b" fill-opacity=".26" stroke="#e08a8a" stroke-opacity=".45" stroke-width=".5"/><ellipse cx="679.6" cy="683.6" rx="4.5" ry="3.9" fill="#e98b8b" fill-opacity=".28" stroke="#e08a8a" stroke-opacity=".45" stroke-width=".5"/><ellipse cx="519.3" cy="422.5" rx="5.0" ry="4.4" fill="#e98b8b" fill-opacity=".28" stroke="#e08a8a" stroke-opacity=".45" stroke-width=".5"/><ellipse cx="607.5" cy="367.0" rx="2.2" ry="1.9" fill="#e98b8b" fill-opacity=".28" stroke="#e08a8a" stroke-opacity=".45" stroke-width=".5"/><path d="M984.8 448.3L944.7 455.4L905.9 466.3" fill="none" stroke="#6f7785" stroke-opacity=".45" stroke-width=".7"/><path d="M732.1 629.5L708.7 663.0L670.3 669.4" fill="none" stroke="#6f7785" stroke-opacity=".45" stroke-width=".7"/><path d="M863.7 359.7L901.7 406.7L898.0 439.7" fill="none" stroke="#6f7785" stroke-opacity=".45" stroke-width=".7"/><path d="M668.4 604.0L629.9 624.1L596.1 609.6" fill="none" stroke="#6f7785" stroke-opacity=".45" stroke-width=".7"/><path d="M857.4 647.7L873.6 693.1L854.9 720.1" fill="none" stroke="#6f7785" stroke-opacity=".45" stroke-width=".7"/><path d="M578.3 569.8L657.3 609.5L702.8 640.0" fill="none" stroke="#6f7785" stroke-opacity=".45" stroke-width=".7"/><path d="M767.6 701.0L787.3 728.3L841.3 745.3" fill="none" stroke="#6f7785" stroke-opacity=".45" stroke-width=".7"/><path d="M865.1 394.1L825.3 399.6L815.3 431.9" fill="none" stroke="#6f7785" stroke-opacity=".45" stroke-width=".7"/><path d="M526.7 484.5L457.8 507.4L403.7 496.4" fill="none" stroke="#6f7785" stroke-opacity=".45" stroke-width=".7"/><path d="M643.9 411.7L578.5 446.1L562.0 461.6" fill="none" stroke="#6f7785" stroke-opacity=".45" stroke-width=".7"/><path d="M810.9 518.5L840.3 527.6L889.1 528.2" fill="none" stroke="#6f7785" stroke-opacity=".45" stroke-width=".7"/><path d="M658.4 431.1L587.0 446.5L560.8 446.5" fill="none" stroke="#6f7785" stroke-opacity=".45" stroke-width=".7"/><path d="M641.6 720.4L645.7 761.1L607.2 805.7" fill="none" stroke="#6f7785" stroke-opacity=".45" stroke-width=".7"/><path d="M777.2 756.5L857.3 764.1L902.5 749.2" fill="none" stroke="#6f7785" stroke-opacity=".45" stroke-width=".7"/><path d="M987.7 743.7L996.3 782.8L1001.9 796.0" fill="none" stroke="#6f7785" stroke-opacity=".45" stroke-width=".7"/><path d="M854.9 341.7L912.8 343.2L931.0 318.0" fill="none" stroke="#6f7785" stroke-opacity=".45" stroke-width=".7"/><path d="M936.0 341.0L902.4 418.2L871.8 434.5" fill="none" stroke="#6f7785" stroke-opacity=".45" stroke-width=".7"/><path d="M790.5 752.2L842.4 766.9L867.0 785.0" fill="none" stroke="#6f7785" stroke-opacity=".45" stroke-width=".7"/><path d="M742.6 481.9L707.6 484.2L680.7 521.8" fill="none" stroke="#6f7785" stroke-opacity=".45" stroke-width=".7"/><path d="M637.4 452.6L654.3 513.4L623.7 555.9" fill="none" stroke="#6f7785" stroke-opacity=".45" stroke-width=".7"/><path d="M575.9 534.2L546.0 582.0L489.3 610.5" fill="none" stroke="#6f7785" stroke-opacity=".45" stroke-width=".7"/><path d="M985.7 639.9L1017.8 710.2L1033.4 738.7" fill="none" stroke="#6f7785" stroke-opacity=".45" stroke-width=".7"/><path d="M887.8 606.9L948.1 640.7L967.2 675.3" fill="none" stroke="#6f7785" stroke-opacity=".45" stroke-width=".7"/><path d="M918.2 689.2L874.8 705.3L837.4 725.9" fill="none" stroke="#6f7785" stroke-opacity=".45" stroke-width=".7"/><path d="M768.5 589.0L846.9 613.2L868.4 609.7" fill="none" stroke="#6f7785" stroke-opacity=".45" stroke-width=".7"/><path d="M826.9 352.0L860.9 414.3L910.3 464.7" fill="none" stroke="#6f7785" stroke-opacity=".45" stroke-width=".7"/><path d="M893.5 429.8L910.3 478.6L948.1 512.8" fill="none" stroke="#6f7785" stroke-opacity=".45" stroke-width=".7"/><path d="M973.2 644.3L964.7 733.7L954.0 775.0" fill="none" stroke="#6f7785" stroke-opacity=".45" stroke-width=".7"/><path d="M944.2 355.7L951.4 394.4L963.8 419.8" fill="none" stroke="#6f7785" stroke-opacity=".45" stroke-width=".7"/><path d="M671.3 548.9L707.0 577.0L739.3 623.0" fill="none" stroke="#6f7785" stroke-opacity=".45" stroke-width=".7"/><path d="M894.7 579.0L877.2 637.9L888.7 678.5" fill="none" stroke="#6f7785" stroke-opacity=".45" stroke-width=".7"/><path d="M703.1 777.3L733.9 795.0L754.3 824.9" fill="none" stroke="#6f7785" stroke-opacity=".45" stroke-width=".7"/><path d="M648.0 481.3L674.2 511.0L684.5 518.4" fill="none" stroke="#6f7785" stroke-opacity=".45" stroke-width=".7"/><path d="M801.3 450.3L825.5 472.1L863.0 498.0" fill="none" stroke="#6f7785" stroke-opacity=".45" stroke-width=".7"/><path d="M802.4 720.7 L777.5 740.3 L760.2 720.6 L783.9 699.2Z" fill="none" stroke="#737a84" stroke-opacity=".5" stroke-width=".75"/><path d="M528.5 726.2 L542.1 713.9 L565.3 730.1 L541.9 744.4Z" fill="none" stroke="#737a84" stroke-opacity=".5" stroke-width=".75"/><path d="M611.3 685.1 L605.4 676.1 L604.0 666.2 L622.0 666.1 L634.7 672.6 L629.8 682.7Z" fill="none" stroke="#737a84" stroke-opacity=".5" stroke-width=".75"/><path d="M677.0 523.7 L666.6 514.7 L668.2 504.3 L686.2 498.5 L692.7 505.8 L694.1 519.7Z" fill="none" stroke="#737a84" stroke-opacity=".5" stroke-width=".75"/><path d="M674.6 723.0 L661.1 720.9 L651.6 704.9 L678.5 698.0 L691.2 713.5Z" fill="none" stroke="#737a84" stroke-opacity=".5" stroke-width=".75"/><path d="M783.6 674.7 L790.4 660.4 L807.2 665.8 L811.9 676.0 L791.0 683.3Z" fill="none" stroke="#737a84" stroke-opacity=".5" stroke-width=".75"/><path d="M682.2 543.7 L679.6 556.3 L662.5 551.6 L666.2 541.2Z" fill="none" stroke="#737a84" stroke-opacity=".5" stroke-width=".75"/><path d="M737.4 651.6 L744.7 640.2 L755.0 639.0 L769.2 645.1 L752.1 654.4Z" fill="none" stroke="#737a84" stroke-opacity=".5" stroke-width=".75"/><path d="M546.0 649.1 L558.0 640.6 L570.8 645.8 L580.1 653.0 L570.3 662.2 L551.8 660.0Z" fill="none" stroke="#737a84" stroke-opacity=".5" stroke-width=".75"/><path d="M549.5 606.3 L559.4 586.4 L578.1 591.8 L577.3 611.5Z" fill="none" stroke="#737a84" stroke-opacity=".5" stroke-width=".75"/><path d="M586.4 487.2 L601.7 501.2 L591.1 518.4 L559.7 513.3 L557.3 498.3Z" fill="none" stroke="#737a84" stroke-opacity=".5" stroke-width=".75"/><path d="M730.5 602.0 L750.8 589.1 L763.0 599.5 L762.8 619.8 L737.9 620.0Z" fill="none" stroke="#737a84" stroke-opacity=".5" stroke-width=".75"/><path d="M511.4 516.0 L490.0 503.6 L514.4 484.3 L545.0 495.3Z" fill="none" stroke="#737a84" stroke-opacity=".5" stroke-width=".75"/><path d="M526.3 676.6 L523.7 666.2 L533.7 662.0 L556.5 659.4 L559.3 669.3 L542.7 679.3Z" fill="none" stroke="#737a84" stroke-opacity=".5" stroke-width=".75"/><path d="M782.6 546.6 L788.1 566.2 L763.6 580.8 L748.7 557.1Z" fill="none" stroke="#737a84" stroke-opacity=".5" stroke-width=".75"/><path d="M597.2 631.2 L620.1 629.6 L624.8 645.8 L598.9 654.0 L581.8 645.6Z" fill="none" stroke="#737a84" stroke-opacity=".5" stroke-width=".75"/><path d="M602.8 701.3 L617.6 707.2 L617.4 720.0 L594.4 727.7 L586.3 711.8Z" fill="none" stroke="#737a84" stroke-opacity=".5" stroke-width=".75"/><path d="M592.4 554.0 L600.5 567.8 L585.1 582.5 L568.6 570.8 L571.7 558.7Z" fill="none" stroke="#737a84" stroke-opacity=".5" stroke-width=".75"/><path d="M725.7 734.5 L722.1 721.5 L753.7 722.4 L746.1 739.6Z" fill="none" stroke="#737a84" stroke-opacity=".5" stroke-width=".75"/><path d="M596.0 517.6 L618.1 533.2 L593.5 546.4 L569.5 527.0Z" fill="none" stroke="#737a84" stroke-opacity=".5" stroke-width=".75"/><path d="M531.2 493.8 L555.4 484.2 L567.3 495.4 L543.6 509.0Z" fill="none" stroke="#737a84" stroke-opacity=".5" stroke-width=".75"/><path d="M592.8 720.8 L599.2 715.4 L605.8 721.3 L609.3 729.2 L602.5 731.7 L594.0 727.7Z" fill="none" stroke="#737a84" stroke-opacity=".5" stroke-width=".75"/><path d="M769.1 666.9 L751.4 683.5 L725.7 684.9 L715.0 656.6 L735.5 645.4 L758.8 646.4Z" fill="none" stroke="#737a84" stroke-opacity=".5" stroke-width=".75"/><path d="M682.3 660.8 L663.2 686.1 L632.1 683.0 L636.9 661.8 L661.4 653.7Z" fill="none" stroke="#737a84" stroke-opacity=".5" stroke-width=".75"/><path d="M706.6 615.4 L691.9 633.1 L667.0 624.8 L655.4 602.9 L685.0 600.7Z" fill="none" stroke="#737a84" stroke-opacity=".5" stroke-width=".75"/><path d="M747.5 646.3 L761.0 650.8 L756.4 660.8 L744.7 657.8 L740.6 650.2Z" fill="none" stroke="#737a84" stroke-opacity=".5" stroke-width=".75"/><path d="M695.7 694.3 L664.9 697.1 L658.1 674.5 L696.0 677.3Z" fill="none" stroke="#737a84" stroke-opacity=".5" stroke-width=".75"/><path d="M685.2 592.1 L692.0 581.7 L707.5 587.5 L708.6 594.6 L697.0 603.8 L687.6 598.0Z" fill="none" stroke="#737a84" stroke-opacity=".5" stroke-width=".75"/><path d="M712.2 620.6 L707.5 601.0 L719.1 588.5 L739.8 596.7 L745.7 613.6Z" fill="none" stroke="#737a84" stroke-opacity=".5" stroke-width=".75"/><path d="M518.5 481.5 L558.6 488.9 L557.1 515.1 L523.5 519.8 L511.7 502.2Z" fill="none" stroke="#737a84" stroke-opacity=".5" stroke-width=".75"/><path d="M677.8 599.1 L695.3 614.3 L683.0 627.7 L651.5 635.2 L633.1 616.6 L652.3 600.8Z" fill="none" stroke="#737a84" stroke-opacity=".5" stroke-width=".75"/><path d="M772.9 588.8 L783.0 607.5 L761.1 619.0 L746.1 600.4Z" fill="none" stroke="#737a84" stroke-opacity=".5" stroke-width=".75"/><path d="M557.9 636.4 L558.3 652.8 L525.4 652.4 L516.6 639.0 L540.1 628.5Z" fill="none" stroke="#737a84" stroke-opacity=".5" stroke-width=".75"/><path d="M560.9 607.7 L561.0 592.7 L570.3 582.7 L597.2 579.7 L595.4 595.8 L581.7 607.5Z" fill="none" stroke="#737a84" stroke-opacity=".5" stroke-width=".75"/><path d="M696.0 669.7 L688.2 682.4 L665.5 684.8 L658.9 674.8 L665.4 661.7 L682.6 660.3Z" fill="none" stroke="#737a84" stroke-opacity=".5" stroke-width=".75"/><path d="M628.8 638.8 L637.7 647.3 L627.3 657.3 L619.7 650.3Z" fill="none" stroke="#737a84" stroke-opacity=".5" stroke-width=".75"/><path d="M754.6 624.3 L766.5 622.2 L777.2 628.1 L770.9 638.5 L759.3 635.2Z" fill="none" stroke="#737a84" stroke-opacity=".5" stroke-width=".75"/><path d="M636.1 478.8 L639.6 491.0 L629.0 500.2 L618.4 497.7 L611.5 490.0 L623.9 482.0Z" fill="none" stroke="#737a84" stroke-opacity=".5" stroke-width=".75"/><path d="M683.5 554.2 L646.0 548.6 L658.3 524.3 L695.4 536.0Z" fill="none" stroke="#737a84" stroke-opacity=".5" stroke-width=".75"/><path d="M596.6 510.4 L569.7 517.2 L549.8 496.8 L593.5 490.2Z" fill="none" stroke="#737a84" stroke-opacity=".5" stroke-width=".75"/><path d="M650.7 685.9 L664.7 680.8 L669.4 690.5 L657.6 694.3Z" fill="none" stroke="#737a84" stroke-opacity=".5" stroke-width=".75"/><path d="M674.6 562.6 L702.3 549.4 L718.5 561.4 L732.4 580.1 L706.6 586.5 L679.1 580.0Z" fill="none" stroke="#737a84" stroke-opacity=".5" stroke-width=".75"/><path d="M596.3 676.5 L615.2 674.5 L612.2 687.8 L590.9 684.8Z" fill="none" stroke="#737a84" stroke-opacity=".5" stroke-width=".75"/><path d="M556.2 656.5 L573.3 648.7 L596.4 657.8 L588.2 670.0 L560.6 671.2Z" fill="none" stroke="#737a84" stroke-opacity=".5" stroke-width=".75"/><path d="M550.8 664.4 L552.4 683.5 L515.5 683.2 L501.5 662.5 L531.0 650.2Z" fill="none" stroke="#737a84" stroke-opacity=".5" stroke-width=".75"/><path d="M632.2 516.6 L597.5 510.3 L609.4 487.2 L638.8 489.6 L654.2 508.1Z" fill="none" stroke="#737a84" stroke-opacity=".5" stroke-width=".75"/><path d="M766.4 607.5 L735.8 609.3 L732.3 594.8 L755.1 590.4Z" fill="none" stroke="#737a84" stroke-opacity=".5" stroke-width=".75"/><path d="M585.3 698.2 L601.8 695.3 L608.9 700.1 L605.9 712.1 L593.2 708.3Z" fill="none" stroke="#737a84" stroke-opacity=".5" stroke-width=".75"/><path d="M674.9 547.5 L660.8 542.4 L659.6 529.4 L686.4 525.3 L695.3 537.5Z" fill="none" stroke="#737a84" stroke-opacity=".5" stroke-width=".75"/><path d="M668.1 664.3 L679.3 653.1 L701.7 658.8 L704.1 674.5 L681.3 674.2Z" fill="none" stroke="#737a84" stroke-opacity=".5" stroke-width=".75"/><path d="M551.9 648.5 L563.2 654.9 L558.4 662.6 L547.1 664.1 L537.2 658.1 L542.8 650.3Z" fill="none" stroke="#737a84" stroke-opacity=".5" stroke-width=".75"/><path d="M595.3 581.7 L583.0 581.5 L578.4 572.2 L587.2 568.8 L601.9 573.3Z" fill="none" stroke="#737a84" stroke-opacity=".5" stroke-width=".75"/><path d="M525.1 706.9 L555.3 715.3 L543.7 740.1 L507.8 728.5Z" fill="none" stroke="#737a84" stroke-opacity=".5" stroke-width=".75"/><path d="M585.6 550.9 L591.2 559.1 L577.6 565.6 L572.1 557.1Z" fill="none" stroke="#737a84" stroke-opacity=".5" stroke-width=".75"/><path d="M532.7 616.2 L546.1 618.8 L548.1 626.8 L536.5 629.5 L529.2 627.2 L527.5 621.1Z" fill="none" stroke="#737a84" stroke-opacity=".5" stroke-width=".75"/><path d="M784.7 582.5 L776.8 570.2 L795.4 557.1 L814.1 558.7 L822.8 577.4 L808.0 592.0Z" fill="none" stroke="#737a84" stroke-opacity=".5" stroke-width=".75"/><path d="M709.4 637.9 L717.3 654.7 L703.2 664.5 L688.3 654.8 L690.9 643.1Z" fill="none" stroke="#737a84" stroke-opacity=".5" stroke-width=".75"/><path d="M554.5 543.0 L549.0 537.5 L543.5 528.9 L556.8 526.9 L567.7 532.2 L565.4 540.4Z" fill="none" stroke="#737a84" stroke-opacity=".5" stroke-width=".75"/><path d="M509.5 540.0 L517.4 522.9 L532.9 526.1 L546.3 541.7 L525.5 554.9Z" fill="none" stroke="#737a84" stroke-opacity=".5" stroke-width=".75"/><path d="M717.0 610.5 L710.7 604.5 L714.7 598.7 L724.7 599.3 L723.8 606.5Z" fill="none" stroke="#737a84" stroke-opacity=".5" stroke-width=".75"/><path d="M795.2 728.2 L785.2 734.3 L772.8 733.8 L763.5 729.1 L772.8 720.7 L786.6 719.0Z" fill="none" stroke="#737a84" stroke-opacity=".5" stroke-width=".75"/><path d="M600.9 513.2 L584.5 520.6 L571.3 512.3 L575.6 501.6 L594.1 499.2Z" fill="none" stroke="#737a84" stroke-opacity=".5" stroke-width=".75"/><path d="M644.8 697.0 L642.6 705.4 L632.4 710.4 L622.9 708.6 L622.8 698.2 L630.0 694.5Z" fill="none" stroke="#737a84" stroke-opacity=".5" stroke-width=".75"/><path d="M653.0 657.6 L678.1 660.0 L667.4 676.9 L643.0 670.7Z" fill="none" stroke="#737a84" stroke-opacity=".5" stroke-width=".75"/><path d="M627.4 683.1 L610.4 677.1 L627.0 663.6 L652.2 669.8 L649.1 680.7Z" fill="none" stroke="#737a84" stroke-opacity=".5" stroke-width=".75"/><path d="M636.9 636.9 L648.6 629.9 L662.6 632.7 L667.0 643.9 L648.8 647.0Z" fill="none" stroke="#737a84" stroke-opacity=".5" stroke-width=".75"/><path d="M599.7 640.0 L597.8 625.9 L615.7 626.2 L631.4 627.7 L636.4 642.1 L610.1 646.1Z" fill="none" stroke="#737a84" stroke-opacity=".5" stroke-width=".75"/><path d="M638.2 482.6 L659.1 484.6 L655.0 502.9 L630.8 498.6Z" fill="none" stroke="#737a84" stroke-opacity=".5" stroke-width=".75"/><path d="M551.5 685.9 L541.7 674.4 L540.2 658.0 L564.8 657.4 L584.3 660.1 L579.3 676.7Z" fill="none" stroke="#737a84" stroke-opacity=".5" stroke-width=".75"/><path d="M769.8 644.6 L758.8 625.5 L787.6 622.0 L796.8 646.8Z" fill="none" stroke="#737a84" stroke-opacity=".5" stroke-width=".75"/><path d="M595.7 677.9 L591.6 662.1 L608.8 655.8 L628.5 653.1 L634.7 671.4 L619.2 680.0Z" fill="none" stroke="#737a84" stroke-opacity=".5" stroke-width=".75"/><path d="M633.3 630.7 L644.4 623.4 L656.3 627.0 L654.6 636.2 L646.2 642.0 L634.1 636.7Z" fill="none" stroke="#737a84" stroke-opacity=".5" stroke-width=".75"/><path d="M721.6 650.1 L709.1 649.0 L707.7 643.6 L711.8 638.5 L721.5 636.8 L724.1 644.2Z" fill="none" stroke="#737a84" stroke-opacity=".5" stroke-width=".75"/><path d="M620.0 543.6 L637.2 559.2 L626.1 573.3 L605.5 573.3 L590.2 557.7 L604.9 546.0Z" fill="none" stroke="#737a84" stroke-opacity=".5" stroke-width=".75"/><path d="M580.8 498.4 L597.8 486.3 L622.1 486.9 L624.4 501.6 L612.3 509.7 L595.3 512.6Z" fill="none" stroke="#737a84" stroke-opacity=".5" stroke-width=".75"/><path d="M542.4 539.8 L522.5 554.0 L502.4 531.2 L534.1 523.9Z" fill="none" stroke="#737a84" stroke-opacity=".5" stroke-width=".75"/><path d="M702.8 658.9 L676.3 649.2 L686.3 634.1 L710.6 629.0 L721.3 652.6Z" fill="none" stroke="#737a84" stroke-opacity=".5" stroke-width=".75"/><path d="M638.2 707.0 L644.1 694.2 L663.4 695.2 L677.8 704.7 L664.2 717.6 L649.6 714.9Z" fill="none" stroke="#737a84" stroke-opacity=".5" stroke-width=".75"/><path d="M812.0 593.8 L790.8 608.0 L777.5 602.9 L776.5 588.1 L797.0 586.3Z" fill="none" stroke="#737a84" stroke-opacity=".5" stroke-width=".75"/><path d="M639.8 525.8 L614.8 538.0 L597.9 528.4 L585.3 505.3 L627.1 505.5Z" fill="none" stroke="#737a84" stroke-opacity=".5" stroke-width=".75"/><path d="M659.2 728.3 L643.5 738.4 L622.9 732.0 L628.5 715.6 L656.6 713.3Z" fill="none" stroke="#737a84" stroke-opacity=".5" stroke-width=".75"/><path d="M779.1 629.1 L807.7 618.6 L816.9 636.9 L813.6 650.1 L780.5 646.5Z" fill="none" stroke="#737a84" stroke-opacity=".5" stroke-width=".75"/><path d="M679.1 706.2 L650.1 708.9 L641.4 683.5 L680.2 684.6Z" fill="none" stroke="#737a84" stroke-opacity=".5" stroke-width=".75"/><path d="M687.9 684.2 L700.9 668.0 L730.2 681.9 L743.7 695.1 L723.0 706.5 L692.6 702.8Z" fill="none" stroke="#737a84" stroke-opacity=".5" stroke-width=".75"/><path d="M701.3 694.4 L720.9 709.8 L720.6 725.7 L691.2 733.4 L673.7 723.2 L677.0 704.8Z" fill="none" stroke="#737a84" stroke-opacity=".5" stroke-width=".75"/><path d="M597.1 500.7 L614.8 498.7 L617.5 511.3 L598.1 511.0Z" fill="none" stroke="#737a84" stroke-opacity=".5" stroke-width=".75"/><path d="M640.4 684.1 L655.3 688.9 L662.2 699.9 L650.3 707.2 L635.7 700.5Z" fill="none" stroke="#737a84" stroke-opacity=".5" stroke-width=".75"/><path d="M657.3 724.5 L665.5 712.6 L683.2 711.1 L691.6 722.1 L676.9 732.8Z" fill="none" stroke="#737a84" stroke-opacity=".5" stroke-width=".75"/><path d="M605.7 645.5 L598.5 651.7 L584.1 654.4 L582.5 644.4 L584.6 636.8 L600.4 636.6Z" fill="none" stroke="#737a84" stroke-opacity=".5" stroke-width=".75"/><path d="M631.1 664.9 L632.6 672.1 L624.2 675.7 L619.4 667.4Z" fill="none" stroke="#737a84" stroke-opacity=".5" stroke-width=".75"/><path d="M680.9 614.7 L697.9 616.5 L704.9 626.5 L696.8 636.5 L680.7 634.3 L672.4 624.9Z" fill="none" stroke="#737a84" stroke-opacity=".5" stroke-width=".75"/><path d="M702.8 647.3 L682.6 660.8 L667.8 656.0 L668.2 643.6 L686.1 641.3Z" fill="none" stroke="#737a84" stroke-opacity=".5" stroke-width=".75"/><path d="M622.2 703.3 L616.7 693.6 L626.5 688.6 L642.6 691.2 L640.5 705.0Z" fill="none" stroke="#737a84" stroke-opacity=".5" stroke-width=".75"/><path d="M605.6 622.4 L606.9 628.9 L600.5 635.0 L588.4 634.1 L584.7 626.8 L595.8 621.8Z" fill="none" stroke="#737a84" stroke-opacity=".5" stroke-width=".75"/><path d="M673.7 634.4 L676.0 627.1 L683.2 628.6 L682.5 635.3Z" fill="none" stroke="#737a84" stroke-opacity=".5" stroke-width=".75"/><path d="M699.5 736.8 L688.1 740.3 L674.4 735.2 L680.3 727.5 L690.6 724.2 L698.1 728.2Z" fill="none" stroke="#737a84" stroke-opacity=".5" stroke-width=".75"/><path d="M618.1 672.1 L615.4 665.3 L621.3 659.7 L630.5 659.1 L634.6 667.2 L630.6 671.5Z" fill="none" stroke="#737a84" stroke-opacity=".5" stroke-width=".75"/><path d="M633.4 728.3 L609.2 733.7 L601.7 718.6 L621.1 713.9Z" fill="none" stroke="#737a84" stroke-opacity=".5" stroke-width=".75"/><path d="M636.6 630.5 L651.7 640.1 L633.5 650.3 L619.4 637.9Z" fill="none" stroke="#737a84" stroke-opacity=".5" stroke-width=".75"/><path d="M678.7 641.0 L681.7 633.7 L693.8 638.3 L688.8 643.9Z" fill="none" stroke="#737a84" stroke-opacity=".5" stroke-width=".75"/><path d="M593.0 717.2 L602.8 714.9 L616.9 719.5 L619.1 727.3 L608.7 733.9 L598.9 728.4Z" fill="none" stroke="#737a84" stroke-opacity=".5" stroke-width=".75"/><path d="M683.5 657.6 L683.1 664.1 L675.0 668.9 L665.7 665.0 L663.6 658.5 L672.3 654.0Z" fill="none" stroke="#737a84" stroke-opacity=".5" stroke-width=".75"/><path d="M682.4 719.2 L676.6 724.1 L670.8 721.2 L675.5 715.6Z" fill="none" stroke="#737a84" stroke-opacity=".5" stroke-width=".75"/><path d="M604.1 672.2 L613.1 669.1 L620.1 675.3 L615.6 679.5 L608.1 679.2Z" fill="none" stroke="#737a84" stroke-opacity=".5" stroke-width=".75"/><path d="M657.8 668.9 L647.9 675.7 L635.2 670.7 L645.1 663.3Z" fill="none" stroke="#737a84" stroke-opacity=".5" stroke-width=".75"/><path d="M631.7 712.9 L632.2 718.0 L625.3 724.4 L619.1 720.0 L619.9 710.8Z" fill="none" stroke="#737a84" stroke-opacity=".5" stroke-width=".75"/><path d="M580.4 678.0 L598.7 678.1 L602.5 688.9 L582.9 690.5Z" fill="none" stroke="#737a84" stroke-opacity=".5" stroke-width=".75"/><path d="M681.0 672.0 L692.5 671.9 L688.7 678.3 L679.9 685.1 L672.7 682.5 L668.3 674.8Z" fill="none" stroke="#737a84" stroke-opacity=".5" stroke-width=".75"/><path d="M641.7 695.8 L643.9 702.7 L631.1 706.4 L620.2 706.5 L618.5 697.0 L634.3 690.7Z" fill="none" stroke="#737a84" stroke-opacity=".5" stroke-width=".75"/><path d="M642.8 677.1 L665.0 675.3 L674.8 685.9 L662.0 699.6 L645.1 694.1Z" fill="none" stroke="#737a84" stroke-opacity=".5" stroke-width=".75"/><path d="M681.6 699.8 L695.4 698.2 L695.5 705.0 L688.8 709.3 L680.3 706.4Z" fill="none" stroke="#737a84" stroke-opacity=".5" stroke-width=".75"/><path d="M643.4 715.2 L652.5 696.5 L675.6 705.6 L670.6 722.9Z" fill="none" stroke="#737a84" stroke-opacity=".5" stroke-width=".75"/><path d="M692.8 709.2 L688.0 714.7 L676.0 715.2 L677.6 703.7 L686.8 701.8Z" fill="none" stroke="#737a84" stroke-opacity=".5" stroke-width=".75"/><path d="M597.6 678.9 L621.1 674.4 L622.2 689.8 L599.8 691.5Z" fill="none" stroke="#737a84" stroke-opacity=".5" stroke-width=".75"/></g></g>
<g clip-path="url(#landclip)"><path d="M714.8 646.4 L722.4 641.6 L731.3 642.3 L739.3 638.1 L748.3 638.6 L757.3 638.8 L766.1 640.8 L774.5 637.8" fill="none" stroke="#e7b5b9" stroke-opacity=".7" stroke-width=".7"/><path d="M710.5 405.7 L702.5 401.5 L695.4 396.0 L687.3 391.9 L679.0 388.6 L672.8 382.0 L668.6 374.1 L666.2 365.4 L669.2 356.9 L665.2 348.8" fill="none" stroke="#e7b5b9" stroke-opacity=".7" stroke-width=".7"/><path d="M406.4 830.6 L397.8 827.9 L389.8 823.8 L380.8 824.4 L373.2 829.1 L367.7 836.3 L369.9 845.1 L377.5 850.0" fill="none" stroke="#e7b5b9" stroke-opacity=".7" stroke-width=".7"/><path d="M864.6 558.3 L857.6 552.5 L849.2 549.4 L840.3 550.5 L832.4 554.8" fill="none" stroke="#e7b5b9" stroke-opacity=".7" stroke-width=".7"/><path d="M432.0 765.4 L425.9 772.0 L416.9 772.1 L409.6 766.9 L400.9 769.4 L394.7 775.8 L385.7 776.4" fill="none" stroke="#e7b5b9" stroke-opacity=".7" stroke-width=".7"/><path d="M727.8 888.7 L720.0 893.2 L715.7 901.1 L709.1 907.3 L704.6 915.1" fill="none" stroke="#e7b5b9" stroke-opacity=".7" stroke-width=".7"/><path d="M610.3 332.7 L607.2 341.2 L601.3 348.0 L602.8 356.8 L604.8 365.6" fill="none" stroke="#e7b5b9" stroke-opacity=".7" stroke-width=".7"/><path d="M740.2 716.9 L747.5 722.2 L752.1 729.9 L760.4 733.3 L767.7 738.6 L776.6 738.2 L785.5 736.4 L792.3 730.5 L796.2 722.4" fill="none" stroke="#e7b5b9" stroke-opacity=".7" stroke-width=".7"/><path d="M1098.5 786.8 L1100.1 795.6 L1103.4 804.0 L1101.0 812.7 L1096.5 820.5" fill="none" stroke="#e7b5b9" stroke-opacity=".7" stroke-width=".7"/><path d="M454.2 893.8 L462.3 897.8 L469.5 903.3 L472.3 911.8 L476.8 919.6 L485.5 922.1 L494.2 919.9" fill="none" stroke="#e7b5b9" stroke-opacity=".7" stroke-width=".7"/><path d="M851.1 332.9 L845.6 340.0 L836.6 340.8 L827.6 341.8 L818.6 341.6 L811.7 336.0 L802.7 335.0 L794.9 339.4 L786.1 337.4" fill="none" stroke="#e7b5b9" stroke-opacity=".7" stroke-width=".7"/><path d="M985.2 467.7 L986.5 476.6 L986.9 485.6 L984.4 494.2 L983.6 503.2 L983.1 512.2 L989.0 519.0 L997.9 519.5 L1005.1 514.1 L1012.4 508.7" fill="none" stroke="#e7b5b9" stroke-opacity=".7" stroke-width=".7"/><path d="M568.8 750.1 L559.9 751.0 L550.9 750.4 L542.3 753.0 L536.6 760.0 L528.6 764.2 L525.9 772.7 L527.5 781.6" fill="none" stroke="#e7b5b9" stroke-opacity=".7" stroke-width=".7"/><path d="M793.9 815.0 L785.1 813.2 L779.8 805.9 L778.3 797.1 L770.9 791.8 L762.8 787.9 L753.8 787.8" fill="none" stroke="#e7b5b9" stroke-opacity=".7" stroke-width=".7"/><path d="M414.5 486.4 L406.8 491.0 L403.4 499.4 L400.9 508.0 L401.0 517.0 L397.5 525.3" fill="none" stroke="#e7b5b9" stroke-opacity=".7" stroke-width=".7"/><path d="M766.2 869.4 L758.4 864.9 L749.7 862.6 L740.7 863.3 L735.3 870.5" fill="none" stroke="#e7b5b9" stroke-opacity=".7" stroke-width=".7"/><path d="M822.8 367.1 L831.8 368.0 L836.7 375.5 L845.4 377.6 L854.0 380.4 L860.6 386.4 L861.6 395.4" fill="none" stroke="#e7b5b9" stroke-opacity=".7" stroke-width=".7"/><path d="M925.4 729.3 L925.5 720.3 L928.4 711.8 L936.3 707.4 L945.2 708.8 L954.2 708.8 L961.9 713.4" fill="none" stroke="#e7b5b9" stroke-opacity=".7" stroke-width=".7"/><path d="M1019.0 653.9 L1011.4 649.1 L1002.8 651.9 L998.6 659.8 L1000.8 668.5 L1008.1 673.9 L1016.9 675.6 L1025.9 676.0" fill="none" stroke="#e7b5b9" stroke-opacity=".7" stroke-width=".7"/><path d="M624.3 862.1 L620.3 854.1 L621.6 845.2 L616.6 837.7 L615.2 828.8 L607.7 823.9 L601.1 817.8 L594.4 811.8" fill="none" stroke="#e7b5b9" stroke-opacity=".7" stroke-width=".7"/><path d="M550.4 726.2 L541.7 723.8 L533.0 721.7 L527.8 714.3 L521.0 708.4 L512.0 707.7 L503.4 705.2 L494.8 702.4 L488.4 696.1" fill="none" stroke="#e7b5b9" stroke-opacity=".7" stroke-width=".7"/><path d="M633.5 859.9 L624.9 862.7 L615.9 862.9 L608.4 867.8 L601.4 873.5 L592.5 874.8" fill="none" stroke="#e7b5b9" stroke-opacity=".7" stroke-width=".7"/><path d="M1056.5 831.0 L1047.5 830.8 L1039.6 835.0 L1035.9 843.2 L1034.6 852.1 L1027.7 858.0 L1027.4 867.0 L1033.5 873.6 L1032.4 882.5" fill="none" stroke="#e7b5b9" stroke-opacity=".7" stroke-width=".7"/><path d="M988.2 389.0 L979.9 385.4 L971.1 383.6 L962.4 381.4 L954.7 376.7 L949.4 369.5" fill="none" stroke="#e7b5b9" stroke-opacity=".7" stroke-width=".7"/><path d="M1003.0 683.9 L1002.6 692.9 L1000.5 701.6 L995.8 709.3 L994.3 718.1" fill="none" stroke="#e7b5b9" stroke-opacity=".7" stroke-width=".7"/><path d="M642.1 698.0 L633.4 700.3 L624.9 703.2 L621.6 711.6 L614.1 716.7 L609.8 724.6 L611.1 733.5 L618.5 738.6 L624.5 745.3 L631.1 751.4" fill="none" stroke="#e7b5b9" stroke-opacity=".7" stroke-width=".7"/><path d="M846.2 701.3 L851.9 694.4 L853.2 685.5 L854.2 676.5 L850.1 668.5" fill="none" stroke="#e7b5b9" stroke-opacity=".7" stroke-width=".7"/><path d="M388.0 596.0 L382.0 589.2 L380.1 580.4 L378.8 571.5 L384.3 564.4 L389.8 557.3" fill="none" stroke="#e7b5b9" stroke-opacity=".7" stroke-width=".7"/><path d="M1117.6 415.7 L1126.4 413.7 L1131.5 406.3 L1140.4 404.7 L1149.2 406.6 L1157.3 402.6 L1165.0 398.0 L1173.6 395.3 L1181.8 399.0 L1190.6 400.9" fill="none" stroke="#e7b5b9" stroke-opacity=".7" stroke-width=".7"/><path d="M800.9 830.5 L802.9 821.7 L807.2 813.8 L806.9 804.8 L810.2 796.4 L817.4 791.1 L825.8 787.8" fill="none" stroke="#e7b5b9" stroke-opacity=".7" stroke-width=".7"/><path d="M911.1 446.9 L919.8 448.9 L928.4 451.5 L934.6 458.1 L942.5 462.3" fill="none" stroke="#e7b5b9" stroke-opacity=".7" stroke-width=".7"/><path d="M1053.4 816.9 L1055.3 825.7 L1059.6 833.6 L1065.0 840.8 L1072.8 845.3" fill="none" stroke="#e7b5b9" stroke-opacity=".7" stroke-width=".7"/><path d="M1060.6 449.7 L1069.2 447.1 L1074.9 440.2 L1078.4 431.8 L1085.5 426.3 L1087.8 417.6 L1084.5 409.2 L1081.5 400.7" fill="none" stroke="#e7b5b9" stroke-opacity=".7" stroke-width=".7"/><path d="M915.4 807.8 L913.3 799.1 L914.2 790.1 L919.0 782.5 L922.9 774.4 L927.7 766.8 L936.0 763.2 L944.5 760.5" fill="none" stroke="#e7b5b9" stroke-opacity=".7" stroke-width=".7"/><path d="M501.6 620.2 L507.0 613.0 L510.8 604.8 L518.6 600.4 L527.4 602.2 L536.0 599.4 L544.6 602.1" fill="none" stroke="#e7b5b9" stroke-opacity=".7" stroke-width=".7"/><path d="M1096.6 626.0 L1088.0 623.3 L1079.7 626.8 L1077.2 635.5 L1076.7 644.4 L1075.5 653.4" fill="none" stroke="#e7b5b9" stroke-opacity=".7" stroke-width=".7"/><path d="M412.5 852.4 L404.3 855.9 L400.5 864.1 L402.0 873.0 L396.8 880.4 L392.2 888.1 L383.6 890.6 L374.9 888.3 L365.9 887.5" fill="none" stroke="#e7b5b9" stroke-opacity=".7" stroke-width=".7"/><path d="M562.2 608.0 L557.1 615.4 L558.0 624.3 L560.1 633.1 L568.1 637.2 L577.1 637.7 L585.3 641.3 L588.0 649.9" fill="none" stroke="#e7b5b9" stroke-opacity=".7" stroke-width=".7"/><path d="M406.4 413.6 L415.1 411.4 L423.0 407.0 L431.6 404.4 L436.4 396.9 L443.9 391.9 L446.6 383.3" fill="none" stroke="#e7b5b9" stroke-opacity=".7" stroke-width=".7"/><path d="M757.7 468.3 L754.6 476.8 L759.0 484.6 L761.4 493.3 L758.5 501.9 L754.0 509.6 L749.0 517.1 L740.4 519.9 L731.7 522.2" fill="none" stroke="#e7b5b9" stroke-opacity=".7" stroke-width=".7"/><path d="M541.6 448.5 L536.1 441.4 L527.9 437.7 L522.0 430.8 L520.7 421.9 L525.6 414.4 L527.7 405.6 L526.9 396.7 L532.5 389.6" fill="none" stroke="#e7b5b9" stroke-opacity=".7" stroke-width=".7"/><path d="M541.4 899.1 L550.4 899.0 L557.5 893.4 L558.9 884.5 L558.5 875.5 L557.1 866.6" fill="none" stroke="#e7b5b9" stroke-opacity=".7" stroke-width=".7"/><path d="M1076.5 636.9 L1072.5 628.9 L1071.3 619.9 L1063.8 615.0 L1054.8 614.7 L1046.4 611.5" fill="none" stroke="#e7b5b9" stroke-opacity=".7" stroke-width=".7"/><path d="M1054.4 881.8 L1059.5 889.2 L1066.5 894.9 L1066.4 903.9 L1061.2 911.3 L1053.0 914.9 L1044.9 918.8 L1042.5 927.4 L1036.4 934.1" fill="none" stroke="#e7b5b9" stroke-opacity=".7" stroke-width=".7"/><path d="M833.9 845.3 L826.9 851.0 L823.8 859.5 L816.4 864.6 L807.8 862.2 L803.3 854.4" fill="none" stroke="#e7b5b9" stroke-opacity=".7" stroke-width=".7"/><path d="M450.5 359.7 L454.8 351.8 L452.8 343.0 L449.2 334.8 L444.4 327.1 L437.9 321.0 L429.1 318.9 L420.1 318.8" fill="none" stroke="#e7b5b9" stroke-opacity=".7" stroke-width=".7"/><path d="M849.2 347.5 L852.6 355.8 L852.3 364.8 L853.5 373.8 L859.2 380.7 L867.9 383.3 L876.5 386.0 L884.0 381.1" fill="none" stroke="#e7b5b9" stroke-opacity=".7" stroke-width=".7"/><path d="M1041.0 785.8 L1045.3 777.9 L1050.6 770.6 L1051.3 761.7 L1053.3 752.9 L1052.7 743.9 L1056.3 735.6 L1056.5 726.7 L1050.8 719.6 L1048.7 710.9" fill="none" stroke="#e7b5b9" stroke-opacity=".7" stroke-width=".7"/><path d="M498.4 861.9 L498.9 870.9 L496.2 879.5 L489.9 885.8 L481.3 888.6 L473.3 892.8 L464.4 893.5" fill="none" stroke="#e7b5b9" stroke-opacity=".7" stroke-width=".7"/><path d="M432.2 520.8 L424.3 516.5 L422.6 507.7 L427.3 499.9 L424.8 491.3" fill="none" stroke="#e7b5b9" stroke-opacity=".7" stroke-width=".7"/><path d="M582.0 877.8 L577.0 885.2 L571.0 892.0 L564.7 898.4 L559.8 906.0 L550.8 906.8" fill="none" stroke="#e7b5b9" stroke-opacity=".7" stroke-width=".7"/><path d="M855.3 727.9 L848.9 721.6 L844.0 714.0 L842.6 705.1 L837.6 697.7 L831.4 691.2 L822.4 691.2 L814.7 695.9 L808.3 702.2" fill="none" stroke="#e7b5b9" stroke-opacity=".7" stroke-width=".7"/><path d="M452.9 468.5 L460.6 464.0 L467.7 458.4 L474.9 453.0 L483.9 452.9 L490.6 446.9 L496.6 440.2 L504.2 435.3 L512.1 431.1" fill="none" stroke="#e7b5b9" stroke-opacity=".7" stroke-width=".7"/><path d="M874.6 874.3 L869.2 881.4 L860.2 882.1 L852.6 877.3 L845.4 871.9 L839.2 865.3" fill="none" stroke="#e7b5b9" stroke-opacity=".7" stroke-width=".7"/><path d="M697.9 608.9 L694.5 617.2 L693.1 626.1 L695.2 634.8 L694.8 643.8 L693.5 652.7 L695.6 661.5 L694.2 670.4" fill="none" stroke="#e7b5b9" stroke-opacity=".7" stroke-width=".7"/><path d="M599.1 332.1 L597.2 340.9 L596.8 349.9 L593.5 358.2 L597.3 366.4" fill="none" stroke="#e7b5b9" stroke-opacity=".7" stroke-width=".7"/><path d="M613.2 553.1 L610.9 544.4 L603.2 539.8 L600.6 531.2 L596.9 522.9 L592.8 514.9 L596.2 506.6 L595.6 497.6 L595.3 488.6 L601.5 482.0" fill="none" stroke="#e7b5b9" stroke-opacity=".7" stroke-width=".7"/><path d="M914.8 593.8 L923.8 594.2 L931.0 588.8 L939.2 585.2 L947.1 580.9 L951.8 573.1" fill="none" stroke="#e7b5b9" stroke-opacity=".7" stroke-width=".7"/><path d="M418.5 628.2 L427.4 629.4 L436.4 629.2 L445.3 630.7 L453.6 634.3 L460.2 640.4 L468.1 644.7 L473.4 652.0" fill="none" stroke="#e7b5b9" stroke-opacity=".7" stroke-width=".7"/><path d="M983.2 402.9 L985.2 411.7 L992.3 417.2 L994.1 426.0 L991.5 434.6 L986.9 442.3" fill="none" stroke="#e7b5b9" stroke-opacity=".7" stroke-width=".7"/><path d="M645.8 480.4 L645.3 471.4 L640.2 464.0 L632.6 459.2 L623.6 458.4 L618.0 451.3 L612.5 444.2 L609.2 435.9 L601.9 430.5" fill="none" stroke="#e7b5b9" stroke-opacity=".7" stroke-width=".7"/><path d="M885.5 686.0 L894.5 685.3 L903.4 686.6 L911.0 681.8 L918.9 677.5 L921.7 668.9 L917.8 660.8" fill="none" stroke="#e7b5b9" stroke-opacity=".7" stroke-width=".7"/><path d="M880.4 641.2 L874.1 634.8 L866.4 630.2 L857.6 628.1 L848.9 626.0 L840.7 629.8 L831.9 627.7" fill="none" stroke="#e7b5b9" stroke-opacity=".7" stroke-width=".7"/><path d="M973.7 581.7 L976.8 573.2 L983.2 566.9 L988.2 559.5 L988.0 550.5 L982.5 543.3" fill="none" stroke="#e7b5b9" stroke-opacity=".7" stroke-width=".7"/><path d="M998.9 667.7 L992.2 673.7 L989.7 682.3 L985.0 690.0 L979.3 696.9 L974.0 704.2 L971.2 712.8 L967.8 721.1 L965.4 729.8 L962.0 738.1" fill="none" stroke="#e7b5b9" stroke-opacity=".7" stroke-width=".7"/><path d="M983.3 591.0 L980.6 582.4 L974.0 576.3 L969.5 568.5 L960.9 565.9" fill="none" stroke="#e7b5b9" stroke-opacity=".7" stroke-width=".7"/><path d="M604.8 741.6 L607.8 733.1 L606.2 724.2 L607.2 715.3 L605.4 706.5 L609.9 698.7 L611.8 689.9" fill="none" stroke="#e7b5b9" stroke-opacity=".7" stroke-width=".7"/><path d="M706.3 666.6 L715.3 667.7 L724.3 667.9 L731.9 672.7 L740.7 674.6 L749.6 673.5 L758.2 670.8 L766.2 675.0 L769.5 683.4 L776.1 689.5" fill="none" stroke="#e7b5b9" stroke-opacity=".7" stroke-width=".7"/><path d="M647.7 534.6 L640.8 540.4 L631.9 542.0 L623.2 539.7 L614.2 539.5 L605.4 541.1 L599.1 547.6 L591.9 552.9" fill="none" stroke="#e7b5b9" stroke-opacity=".7" stroke-width=".7"/><path d="M511.2 375.7 L502.5 373.3 L493.8 375.3 L489.1 383.0 L489.7 392.0 L493.5 400.1 L502.2 402.6" fill="none" stroke="#e7b5b9" stroke-opacity=".7" stroke-width=".7"/><path d="M1002.8 567.5 L998.2 559.8 L989.6 557.3 L981.6 561.3 L972.6 561.7 L965.5 556.1 L956.6 556.8" fill="none" stroke="#e7b5b9" stroke-opacity=".7" stroke-width=".7"/><path d="M849.3 406.9 L847.7 398.0 L849.6 389.2 L851.4 380.4 L858.6 375.0 L863.9 367.7 L868.7 360.1 L871.3 351.5 L878.0 345.5 L882.7 337.8" fill="none" stroke="#e7b5b9" stroke-opacity=".7" stroke-width=".7"/><path d="M481.2 605.1 L487.1 598.3 L496.0 597.4 L504.7 595.0 L513.3 597.8" fill="none" stroke="#e7b5b9" stroke-opacity=".7" stroke-width=".7"/><path d="M873.4 815.6 L881.2 811.1 L889.8 813.8 L897.4 818.5 L904.9 823.6" fill="none" stroke="#e7b5b9" stroke-opacity=".7" stroke-width=".7"/><path d="M905.5 786.1 L896.8 783.8 L887.9 785.7 L881.7 792.2 L874.2 797.0 L865.4 799.1 L857.8 803.9 L851.2 810.1" fill="none" stroke="#e7b5b9" stroke-opacity=".7" stroke-width=".7"/><path d="M771.5 481.8 L775.9 474.0 L774.2 465.1 L774.9 456.2 L779.9 448.6 L779.9 439.6 L773.5 433.3 L766.6 427.4" fill="none" stroke="#e7b5b9" stroke-opacity=".7" stroke-width=".7"/><path d="M812.2 847.8 L820.8 845.0 L828.3 840.1 L836.6 836.5 L845.4 834.5" fill="none" stroke="#e7b5b9" stroke-opacity=".7" stroke-width=".7"/><path d="M729.2 617.0 L721.5 621.6 L712.7 619.8 L707.7 612.3 L704.5 603.9 L708.4 595.8 L712.9 588.0" fill="none" stroke="#e7b5b9" stroke-opacity=".7" stroke-width=".7"/><path d="M1011.5 603.2 L1003.0 606.1 L994.1 604.6 L986.5 609.5 L977.6 608.7 L968.6 609.6 L961.2 614.7" fill="none" stroke="#e7b5b9" stroke-opacity=".7" stroke-width=".7"/><path d="M479.4 783.8 L487.9 786.8 L493.7 793.6 L502.7 794.2 L508.8 800.8 L509.2 809.8 L503.9 817.0 L495.1 818.9 L486.4 821.5" fill="none" stroke="#e7b5b9" stroke-opacity=".7" stroke-width=".7"/><path d="M562.4 566.7 L563.9 557.9 L562.5 549.0 L557.5 541.5 L558.2 532.5 L559.1 523.6 L562.2 515.1 L570.7 512.2" fill="none" stroke="#e7b5b9" stroke-opacity=".7" stroke-width=".7"/><path d="M577.2 631.9 L586.2 632.4 L593.5 637.6 L596.3 646.2 L594.0 654.9 L598.3 662.8" fill="none" stroke="#e7b5b9" stroke-opacity=".7" stroke-width=".7"/><path d="M579.7 736.7 L584.9 744.1 L593.7 745.9 L600.9 751.4 L607.5 757.5 L614.2 763.6 L623.1 762.5 L630.1 756.8" fill="none" stroke="#e7b5b9" stroke-opacity=".7" stroke-width=".7"/><path d="M522.9 717.0 L520.0 708.4 L517.7 699.7 L515.9 690.9 L509.3 684.8 L507.3 676.0 L502.5 668.4 L495.4 662.9" fill="none" stroke="#e7b5b9" stroke-opacity=".7" stroke-width=".7"/><path d="M436.3 500.1 L431.3 507.6 L432.9 516.4 L439.6 522.5 L444.1 530.3 L446.0 539.1 L443.9 547.9 L437.8 554.5 L437.2 563.5 L437.5 572.4" fill="none" stroke="#e7b5b9" stroke-opacity=".7" stroke-width=".7"/><path d="M1019.1 734.0 L1010.1 734.3 L1001.2 735.4 L996.3 743.0 L987.4 744.0 L979.2 740.3 L970.2 741.2" fill="none" stroke="#e7b5b9" stroke-opacity=".7" stroke-width=".7"/><path d="M835.9 491.3 L827.4 494.2 L819.4 490.0 L814.2 482.7 L809.6 474.9 L801.0 472.2 L792.3 474.5 L784.4 478.7 L781.0 487.0" fill="none" stroke="#e7b5b9" stroke-opacity=".7" stroke-width=".7"/><path d="M609.2 481.7 L601.3 486.0 L592.3 485.1 L585.1 490.5 L582.6 499.1 L586.4 507.3 L587.6 516.2 L585.3 524.9 L588.2 533.4 L592.6 541.3" fill="none" stroke="#e7b5b9" stroke-opacity=".7" stroke-width=".7"/><path d="M999.3 665.4 L1008.0 663.0 L1015.4 668.1 L1023.4 672.2 L1028.5 679.7 L1035.4 685.4" fill="none" stroke="#e7b5b9" stroke-opacity=".7" stroke-width=".7"/><path d="M989.2 857.9 L991.1 866.7 L988.0 875.1 L986.6 884.0 L987.9 892.9 L990.6 901.5" fill="none" stroke="#e7b5b9" stroke-opacity=".7" stroke-width=".7"/><path d="M391.4 554.8 L391.2 545.8 L392.7 536.9 L386.9 530.1 L379.3 525.2 L370.6 522.7" fill="none" stroke="#e7b5b9" stroke-opacity=".7" stroke-width=".7"/><path d="M861.5 385.2 L857.2 393.1 L856.1 402.0 L861.1 409.5 L862.9 418.3 L868.3 425.5 L873.2 433.1 L880.5 438.4 L889.4 439.8" fill="none" stroke="#e7b5b9" stroke-opacity=".7" stroke-width=".7"/><path d="M832.9 619.7 L830.8 611.0 L829.0 602.2 L830.7 593.3 L837.1 587.0 L839.3 578.3" fill="none" stroke="#e7b5b9" stroke-opacity=".7" stroke-width=".7"/><path d="M1079.2 685.2 L1086.7 690.2 L1094.4 694.9 L1102.7 698.4 L1111.6 699.3" fill="none" stroke="#e7b5b9" stroke-opacity=".7" stroke-width=".7"/><path d="M447.9 826.6 L447.8 835.6 L444.0 843.8 L444.4 852.7 L443.7 861.7" fill="none" stroke="#e7b5b9" stroke-opacity=".7" stroke-width=".7"/><path d="M784.2 360.6 L793.0 362.4 L797.2 370.4 L796.4 379.3 L794.0 388.0 L797.6 396.3" fill="none" stroke="#e7b5b9" stroke-opacity=".7" stroke-width=".7"/><path d="M990.2 490.2 L999.1 488.6 L1007.3 484.8 L1011.9 477.1 L1017.8 470.3 L1026.4 467.6" fill="none" stroke="#e7b5b9" stroke-opacity=".7" stroke-width=".7"/><path d="M716.2 556.4 L712.3 548.2 L712.4 539.2 L717.8 532.0 L726.6 530.2 L735.6 530.3 L744.3 532.6 L751.0 538.6 L759.9 539.7 L768.9 539.3" fill="none" stroke="#e7b5b9" stroke-opacity=".7" stroke-width=".7"/><path d="M404.5 628.0 L413.4 629.4 L422.2 631.1 L430.9 629.1 L439.9 628.1 L448.1 624.4 L457.0 623.0 L461.9 615.5" fill="none" stroke="#e7b5b9" stroke-opacity=".7" stroke-width=".7"/><path d="M876.5 407.4 L881.6 399.9 L884.4 391.4 L892.1 386.8 L901.0 388.6 L909.5 391.5 L918.4 392.8 L927.1 390.7 L935.2 394.7" fill="none" stroke="#e7b5b9" stroke-opacity=".7" stroke-width=".7"/><path d="M723.0 845.5 L715.1 841.2 L706.3 842.9 L698.9 837.8 L690.2 835.2 L681.7 832.2 L672.9 830.5 L665.8 836.1" fill="none" stroke="#e7b5b9" stroke-opacity=".7" stroke-width=".7"/><path d="M1051.4 494.5 L1047.7 486.3 L1045.4 477.6 L1047.3 468.8 L1045.9 459.9 L1046.1 450.9 L1040.0 444.3 L1031.1 443.1" fill="none" stroke="#e7b5b9" stroke-opacity=".7" stroke-width=".7"/><path d="M710.7 613.5 L703.8 619.3 L702.3 628.1 L695.3 633.7 L687.8 638.7" fill="none" stroke="#e7b5b9" stroke-opacity=".7" stroke-width=".7"/><path d="M866.1 865.6 L875.0 866.3 L883.4 869.6 L888.0 877.4 L893.6 884.4 L894.7 893.4 L899.9 900.7 L901.6 909.5 L902.1 918.5 L896.5 925.6" fill="none" stroke="#e7b5b9" stroke-opacity=".7" stroke-width=".7"/><path d="M452.9 780.4 L458.4 787.5 L464.5 794.2 L472.6 798.2 L478.3 805.1 L487.3 805.2 L494.9 800.3 L501.9 794.7 L508.4 788.4" fill="none" stroke="#e7b5b9" stroke-opacity=".7" stroke-width=".7"/><path d="M772.5 405.4 L764.2 402.0 L756.1 405.9 L747.4 403.6 L738.5 404.4 L729.5 405.1" fill="none" stroke="#e7b5b9" stroke-opacity=".7" stroke-width=".7"/><path d="M1071.1 886.9 L1064.3 892.8 L1055.3 893.3 L1046.7 890.8 L1038.8 895.2 L1032.8 901.9" fill="none" stroke="#e7b5b9" stroke-opacity=".7" stroke-width=".7"/><path d="M1015.8 842.0 L1022.2 848.4 L1021.2 857.3 L1025.0 865.5 L1026.7 874.3 L1032.8 880.9 L1033.4 889.9 L1040.3 895.7 L1049.3 895.6 L1057.6 899.0" fill="none" stroke="#e7b5b9" stroke-opacity=".7" stroke-width=".7"/><path d="M611.6 842.6 L620.5 841.3 L628.7 837.5 L637.0 840.9 L642.7 847.9 L649.4 853.9 L658.3 855.2 L664.6 861.6 L673.6 862.5 L681.7 866.5" fill="none" stroke="#e7b5b9" stroke-opacity=".7" stroke-width=".7"/><path d="M579.0 738.8 L571.3 734.3 L562.7 731.6 L555.2 726.6 L552.7 717.9 L551.5 709.0 L546.4 701.6" fill="none" stroke="#e7b5b9" stroke-opacity=".7" stroke-width=".7"/><path d="M602.7 857.8 L594.4 854.4 L587.4 848.7 L580.1 843.5 L571.2 844.7 L563.8 839.6 L554.9 841.0" fill="none" stroke="#e7b5b9" stroke-opacity=".7" stroke-width=".7"/><path d="M1051.5 328.0 L1042.5 327.2 L1035.3 321.8 L1026.3 322.7 L1018.4 327.0 L1009.4 327.2 L1001.5 331.5 L995.8 338.4 L989.5 344.9" fill="none" stroke="#e7b5b9" stroke-opacity=".7" stroke-width=".7"/><path d="M517.9 840.7 L526.8 841.9 L532.5 848.9 L537.0 856.7 L545.9 858.0" fill="none" stroke="#e7b5b9" stroke-opacity=".7" stroke-width=".7"/><path d="M1039.8 358.7 L1043.5 366.9 L1049.7 373.4 L1056.0 379.8 L1065.0 379.3 L1073.2 375.5 L1082.1 377.0 L1090.4 380.5 L1093.0 389.1 L1091.8 398.0" fill="none" stroke="#e7b5b9" stroke-opacity=".7" stroke-width=".7"/><path d="M773.4 666.1 L776.3 657.5 L775.0 648.6 L772.7 639.9 L774.8 631.2" fill="none" stroke="#e7b5b9" stroke-opacity=".7" stroke-width=".7"/><path d="M962.1 779.7 L962.1 788.7 L956.9 796.0 L950.4 802.2 L947.0 810.5 L948.4 819.4 L942.6 826.4 L943.6 835.3" fill="none" stroke="#e7b5b9" stroke-opacity=".7" stroke-width=".7"/><path d="M711.8 831.3 L715.3 839.6 L718.8 847.8 L723.3 855.6 L728.6 862.9 L736.4 867.4 L740.9 875.2 L749.5 877.7 L754.2 885.4" fill="none" stroke="#e7b5b9" stroke-opacity=".7" stroke-width=".7"/><path d="M801.0 636.9 L805.1 628.9 L802.3 620.4 L798.3 612.3 L797.4 603.4 L801.5 595.3" fill="none" stroke="#e7b5b9" stroke-opacity=".7" stroke-width=".7"/><path d="M926.5 773.7 L921.0 766.5 L920.4 757.5 L914.9 750.4 L906.9 746.4 L897.9 747.7 L889.1 745.9 L882.8 739.5" fill="none" stroke="#e7b5b9" stroke-opacity=".7" stroke-width=".7"/><path d="M962.2 359.2 L953.4 361.1 L944.5 359.6 L939.5 352.1 L930.9 349.3 L924.5 343.0 L919.3 335.7" fill="none" stroke="#e7b5b9" stroke-opacity=".7" stroke-width=".7"/></g>
<g clip-path="url(#landclip)"><path d="M694.0 454.0 L700.0 448.0 L712.0 432.0 L722.0 414.0 L727.0 396.0 L742.0 386.0 L760.0 379.0 L777.0 376.0 L781.6 382.4 L780.8 394.4 L777.6 405.6 L771.2 410.0 L779.2 417.6 L774.4 426.4 L772.8 432.8 L758.4 435.2 L755.2 439.2 L759.2 448.8 L758.4 460.0 L752.0 466.4 L744.0 460.0 L734.4 455.2 L727.2 450.4 L718.4 452.0 L710.4 458.4 L697.6 456.8Z" fill="#5f6f85" fill-opacity=".1"/></g>
<path d="M506.0 521.6 L571.6 501.6 L611.6 501.6 L649.2 478.4 L650.0 466.4 L662.4 461.6 L662.4 448.8 L727.2 324.0" fill="none" stroke="#7b8187" stroke-width="1.7" stroke-opacity="1" stroke-linejoin="round"/>
<path d="M661.5 449.5 L694.0 453.0" fill="none" stroke="#7d848c" stroke-width="1.1" stroke-opacity="1" stroke-linejoin="round"/>
<path d="M612.4 501.6 L612.4 623.0 L578.0 623.0 L578.0 716.0" fill="none" stroke="#7d848c" stroke-width="1.2" stroke-opacity="1" stroke-linejoin="round"/>
<path d="M666.7 603.6 L682.7 614.0 L685.0 650.0 L687.0 678.0 L681.0 728.0 L670.0 737.0 L688.8 751.6" fill="none" stroke="#7d848c" stroke-width="1.1" stroke-opacity="1" stroke-linejoin="round"/>
<path d="M522.8 693.2 L576.4 718.0 L578.0 726.0" fill="none" stroke="#7b8187" stroke-width="1.7" stroke-opacity="1" stroke-linejoin="round"/>
<path d="M575.9 723.1 L583.5 728.5 L585.3 733.5 L599.8 737.6 L605.2 742.0 L612.4 741.2 L616.9 745.2 L633.2 744.8 L633.2 740.3 L647.6 743.9 L651.2 748.4 L661.2 752.0 L663.9 754.7 L672.0 753.8 L678.3 756.0 L682.8 752.0 L688.8 752.0" fill="none" stroke="#858689" stroke-width="3" stroke-opacity="1" stroke-linejoin="round"/>
<path d="M575.9 723.1 L583.5 728.5 L585.3 733.5 L599.8 737.6 L605.2 742.0 L612.4 741.2 L616.9 745.2 L633.2 744.8 L633.2 740.3 L647.6 743.9 L651.2 748.4 L661.2 752.0 L663.9 754.7 L672.0 753.8 L678.3 756.0 L682.8 752.0 L688.8 752.0" fill="none" stroke="#dcdcdc" stroke-width="1" stroke-opacity="1" stroke-linejoin="round"/>
<path d="M688.8 752.4 L723.2 766.0 L723.2 797.0" fill="none" stroke="#7b8187" stroke-width="1.7" stroke-opacity="1" stroke-linejoin="round"/>
<path d="M723.2 797.0 L723.2 812.0" fill="none" stroke="#9aa0a6" stroke-width="1.5" stroke-opacity="0.6" stroke-linejoin="round"/>
<path d="M767.0 324.0 L767.0 375.0 L776.8 378.0" fill="none" stroke="#7d848c" stroke-width="1.3" stroke-opacity="1" stroke-linejoin="round"/>
<path d="M799.4 715.0 L839.7 729.6 L839.7 786.0 L807.0 786.0 L800.5 793.5 L800.5 855.0" fill="none" stroke="#5f666e" stroke-width="1.4" stroke-opacity="1" stroke-linejoin="round"/>
<path d="M839.7 729.6 L859.0 715.7 L880.0 710.8 L920.0 712.0 L960.0 712.0" fill="none" stroke="#666c73" stroke-width="1.2" stroke-opacity="1" stroke-linejoin="round"/>
<path d="M549.2 504.0 L549.2 536.8 L572.5 536.8 L572.5 504.0" fill="none" stroke="#8a9098" stroke-width="0.9" stroke-opacity="1" stroke-linejoin="round"/>
<path d="M740.6 855.0 L800.5 855.0 L856.0 886.0" fill="none" stroke="#70767c" stroke-width="1.5" stroke-opacity="1" stroke-linejoin="round"/>
<path d="M900.0 690.0 L912.0 700.0 L947.0 733.0" fill="none" stroke="#59626d" stroke-width="1.2" stroke-opacity="1" stroke-linejoin="round"/>
<path d="M675.0 464.0 L677.5 471.0 L687.8 476.7 L700.0 484.4 L706.7 492.2 L713.3 495.6 L716.7 503.3 L726.7 498.9 L733.3 506.7 L741.1 515.6 L745.6 520.0 L755.6 521.1 L764.4 524.4 L773.3 531.1 L784.4 534.4 L804.4 537.8 L800.0 551.1 L793.3 564.4 L790.0 577.8 L787.8 591.1" fill="none" stroke="#6d5c60" stroke-width="1.3" stroke-opacity=".85" stroke-linejoin="round"/>
<path d="M694.4 453.6 L697.6 456.8 L710.4 458.4 L718.4 452.0 L727.2 450.4 L734.4 455.2 L744.0 460.0 L750.4 466.4" fill="none" stroke="#6d5c60" stroke-width="1.3" stroke-opacity=".85" stroke-linejoin="round"/>
<path d="M776.8 376.0 L781.6 382.4 L780.8 394.4 L777.6 405.6 L771.2 407.2 L771.2 413.6 L777.6 414.4 L779.2 417.6 L774.4 426.4 L772.8 432.8 L758.4 435.2 L755.2 439.2 L759.2 448.8 L758.4 460.0 L752.0 466.4 L753.3 471.1 L757.8 481.1 L763.3 487.8 L757.8 497.8 L764.4 513.3 L764.4 524.4" fill="none" stroke="#6d5c60" stroke-width="1.3" stroke-opacity=".85" stroke-linejoin="round"/>
<path d="M757.8 497.8 L746.7 504.4 L745.6 520.0" fill="none" stroke="#6d5c60" stroke-width="1.3" stroke-opacity=".85" stroke-linejoin="round"/>
<path d="M787.8 591.1 L800.0 587.8 L804.4 584.4 L820.0 580.0 L828.9 582.2 L835.6 586.7 L844.4 591.1 L853.3 586.7 L866.0 589.0 L880.0 590.0 L896.0 583.0 L912.0 580.0 L910.0 568.0 L913.3 562.0 L924.0 558.0" fill="none" stroke="#6d5c60" stroke-width="1.3" stroke-opacity=".85" stroke-linejoin="round"/>
<path d="M894.0 493.0 L906.0 488.0 L920.0 483.0 L937.0 475.0" fill="none" stroke="#6d5c60" stroke-width="1.3" stroke-opacity=".85" stroke-linejoin="round"/>
<path d="M978.0 477.0 L992.0 481.0 L990.0 488.0 L998.0 498.0 L1002.0 497.0" fill="none" stroke="#6d5c60" stroke-width="1.3" stroke-opacity=".85" stroke-linejoin="round"/>
<path d="M894.0 493.0 L903.0 506.0 L905.0 520.0 L918.0 534.0 L930.0 544.0 L934.0 550.0 L924.0 558.0" fill="none" stroke="#6d5c60" stroke-width="1.3" stroke-opacity=".85" stroke-linejoin="round"/>
<path d="M934.0 550.0 L944.0 552.0 L954.0 549.0 L960.0 539.0 L972.0 540.0 L984.0 546.0 L1002.0 548.0" fill="none" stroke="#6d5c60" stroke-width="1.3" stroke-opacity=".85" stroke-linejoin="round"/>
<path d="M787.8 591.1 L775.6 593.1 L770.0 604.4 L762.5 617.5 L756.9 626.9 L758.8 632.5 L768.1 630.6 L774.7 636.3 L774.7 645.6" fill="none" stroke="#6d5c60" stroke-width="1.3" stroke-opacity=".85" stroke-linejoin="round"/>
<path d="M792.5 709.4 L791.6 701.9 L783.1 698.1 L775.6 690.6 L777.5 681.3 L770.9 671.9 L780.3 664.4 L780.3 655.0 L774.7 645.6 L777.5 641.9 L788.8 640.9 L800.0 637.2 L803.8 630.6 L810.3 625.0 L815.0 634.4 L820.6 636.3 L822.5 644.7 L824.4 636.3 L830.0 626.9 L835.6 624.1 L845.0 620.3 L846.9 627.8 L849.7 619.4 L852.5 613.8 L855.3 608.1 L852.5 602.5 L852.5 596.9 L855.3 591.3 L853.3 586.7" fill="none" stroke="#6d5c60" stroke-width="1.3" stroke-opacity=".85" stroke-linejoin="round"/>
<path d="M855.3 608.1 L871.3 608.1 L882.5 605.3 L893.8 604.4 L897.5 611.9 L908.8 617.5 L920.0 620.3 L927.5 622.2 L942.5 624.1 L955.6 619.4 L970.6 616.6 L983.8 611.9 L992.2 613.8 L989.4 602.5 L995.0 591.3 L998.0 584.0 L1002.0 575.0" fill="none" stroke="#6d5c60" stroke-width="1.3" stroke-opacity=".85" stroke-linejoin="round"/>
<path d="M927.5 622.2 L922.8 628.8 L924.7 638.1 L929.4 645.6 L933.1 651.3 L936.9 655.0 L946.3 651.3 L957.5 647.5 L965.0 649.4 L967.8 643.8 L974.4 641.9 L983.8 636.3 L987.5 628.8 L981.9 615.6" fill="none" stroke="#6d5c60" stroke-width="1.3" stroke-opacity=".85" stroke-linejoin="round"/>
<path d="M1000.6 665.3 L987.5 671.9 L978.1 665.3 L979.1 677.5 L983.8 685.0 L987.5 696.3 L995.0 703.8 L1002.5 709.4" fill="none" stroke="#8a8b8d" stroke-width="3" stroke-opacity="1" stroke-linejoin="round"/>
<path d="M1000.6 665.3 L987.5 671.9 L978.1 665.3 L979.1 677.5 L983.8 685.0 L987.5 696.3 L995.0 703.8 L1002.5 709.4" fill="none" stroke="#dcdcdc" stroke-width="1" stroke-opacity="1" stroke-linejoin="round"/>
<path d="M781.7 417.3 L800.0 417.3 L800.0 425.7 L817.5 425.7 L820.8 454.0 L855.8 454.8 L861.0 477.8 L866.7 522.2 L835.6 553.3 L835.6 578.9" fill="none" stroke="#5d646e" stroke-width="1" stroke-opacity="0.8" stroke-linejoin="round"/>
<path d="M748.9 525.6 L727.8 540.0 L745.6 563.3 L736.7 566.7 L716.7 593.3 L728.9 628.9" fill="none" stroke="#5d646e" stroke-width="1" stroke-opacity="0.8" stroke-linejoin="round"/>
<path d="M612.4 560.0 L640.0 565.0 L690.0 600.0 L716.7 593.3" fill="none" stroke="#5d646e" stroke-width="1" stroke-opacity="0.8" stroke-linejoin="round"/>
<path d="M612.4 600.0 L655.6 600.0 L680.0 618.0 L680.0 622.0 L753.0 622.0" fill="none" stroke="#5d646e" stroke-width="1" stroke-opacity="0.8" stroke-linejoin="round"/>
<path d="M855.8 454.8 L873.3 437.3 L891.7 434.0 L906.7 444.0 L920.0 449.0 L937.5 447.3" fill="none" stroke="#5d646e" stroke-width="1" stroke-opacity="0.8" stroke-linejoin="round"/>
<path d="M866.7 522.2 L895.0 500.0" fill="none" stroke="#5d646e" stroke-width="1" stroke-opacity="0.8" stroke-linejoin="round"/>
<path d="M913.4 662.5 L927.5 690.6 L946.3 718.8 L963.1 731.9" fill="none" stroke="#5d646e" stroke-width="1" stroke-opacity="0.8" stroke-linejoin="round"/>
<path d="M803.8 714.0 L837.5 729.0 L852.5 715.0 L871.3 713.1 L927.5 718.8 L946.3 718.8" fill="none" stroke="#5d646e" stroke-width="1" stroke-opacity="0.8" stroke-linejoin="round"/>
<path d="M927.5 690.6 L961.3 675.6 L975.3 675.6" fill="none" stroke="#5d646e" stroke-width="1" stroke-opacity="0.8" stroke-linejoin="round"/>
<path d="M934.0 702.0 L953.8 685.0 L968.0 690.0" fill="none" stroke="#5d646e" stroke-width="1" stroke-opacity="0.8" stroke-linejoin="round"/>
<path d="M961.3 675.6 L958.0 690.0 L940.0 700.0" fill="none" stroke="#5d646e" stroke-width="1" stroke-opacity="0.8" stroke-linejoin="round"/>
<text x="542.5" y="332" text-anchor="middle" font-size="11.5" letter-spacing="1.2" fill="#a9b5c0" stroke="#fff" stroke-width="1.6" stroke-opacity=".7" paint-order="stroke" font-weight="700">UNITED KINGDOM</text>
<text x="437" y="402" text-anchor="middle" font-size="11.5" letter-spacing="1.4" fill="#a9b5c0" stroke="#fff" stroke-width="1.6" stroke-opacity=".7" paint-order="stroke" font-weight="700">IRELAND</text>
<text x="456" y="384" text-anchor="middle" font-size="10.5" letter-spacing="0.3" fill="#8f9eac" stroke="#fff" stroke-width="1.6" stroke-opacity=".7" paint-order="stroke" font-weight="700">Dublin</text>
<text x="587" y="453" text-anchor="middle" font-size="10.5" letter-spacing="0.6" fill="#8f9eac" stroke="#fff" stroke-width="1.6" stroke-opacity=".7" paint-order="stroke" font-weight="700">LONDON</text>
<text x="746" y="426" text-anchor="middle" font-size="11.5" letter-spacing="1.2" fill="#a9b5c0" stroke="#fff" stroke-width="1.6" stroke-opacity=".7" paint-order="stroke" font-weight="700">NETHERLANDS</text>
<text x="725" y="484" text-anchor="middle" font-size="11.5" letter-spacing="1.2" fill="#a9b5c0" stroke="#fff" stroke-width="1.6" stroke-opacity=".7" paint-order="stroke" font-weight="700">BELGIUM</text>
<text x="757" y="514" text-anchor="middle" font-size="11" letter-spacing="1.1" fill="#a9b5c0" stroke="#fff" stroke-width="1.6" stroke-opacity=".7" paint-order="stroke" font-weight="700">LUXEMBOURG</text>
<text x="856" y="466" text-anchor="middle" font-size="11.5" letter-spacing="1.4" fill="#a9b5c0" stroke="#fff" stroke-width="1.6" stroke-opacity=".7" paint-order="stroke" font-weight="700">GERMANY</text>
<text x="899" y="415" text-anchor="middle" font-size="10.5" letter-spacing="0.6" fill="#8f9eac" stroke="#fff" stroke-width="1.6" stroke-opacity=".7" paint-order="stroke" font-weight="700">BERLIN</text>
<text x="818.5" y="376" text-anchor="middle" font-size="10.5" letter-spacing="0.3" fill="#8f9eac" stroke="#fff" stroke-width="1.6" stroke-opacity=".7" paint-order="stroke" font-weight="700">Hamburg</text>
<text x="842" y="503" text-anchor="middle" font-size="10.5" letter-spacing="0.3" fill="#8f9eac" stroke="#fff" stroke-width="1.6" stroke-opacity=".7" paint-order="stroke" font-weight="700">Frankfurt</text>
<text x="926" y="504" text-anchor="middle" font-size="10.5" letter-spacing="0.3" fill="#8f9eac" stroke="#fff" stroke-width="1.6" stroke-opacity=".7" paint-order="stroke" font-weight="700">Prague</text>
<text x="967" y="516" text-anchor="middle" font-size="11.5" letter-spacing="1.2" fill="#a9b5c0" stroke="#fff" stroke-width="1.6" stroke-opacity=".7" paint-order="stroke" font-weight="700">CZECHIA</text>
<text x="1054" y="427" text-anchor="middle" font-size="11.5" letter-spacing="1.4" fill="#a9b5c0" stroke="#fff" stroke-width="1.6" stroke-opacity=".7" paint-order="stroke" font-weight="700">POLAND</text>
<text x="1061" y="551" text-anchor="middle" font-size="11" letter-spacing="1.2" fill="#a9b5c0" stroke="#fff" stroke-width="1.6" stroke-opacity=".7" paint-order="stroke" font-weight="700">SLOVAKIA</text>
<text x="967" y="569" text-anchor="middle" font-size="10.5" letter-spacing="0.6" fill="#8f9eac" stroke="#fff" stroke-width="1.6" stroke-opacity=".7" paint-order="stroke" font-weight="700">VIENNA</text>
<text x="940" y="591" text-anchor="middle" font-size="11.5" letter-spacing="1.2" fill="#a9b5c0" stroke="#fff" stroke-width="1.6" stroke-opacity=".7" paint-order="stroke" font-weight="700">AUSTRIA</text>
<text x="860" y="572" text-anchor="middle" font-size="10.5" letter-spacing="0.3" fill="#8f9eac" stroke="#fff" stroke-width="1.6" stroke-opacity=".7" paint-order="stroke" font-weight="700">Munich</text>
<text x="1062" y="604" text-anchor="middle" font-size="11" letter-spacing="1.2" fill="#a9b5c0" stroke="#fff" stroke-width="1.6" stroke-opacity=".7" paint-order="stroke" font-weight="700">HUNGARY</text>
<text x="835" y="606" text-anchor="middle" font-size="11" letter-spacing="1.1" fill="#a9b5c0" stroke="#fff" stroke-width="1.6" stroke-opacity=".7" paint-order="stroke" font-weight="700">LIECHTENSTEIN</text>
<text x="645" y="548" text-anchor="middle" font-size="10.5" letter-spacing="0.6" fill="#8f9eac" stroke="#fff" stroke-width="1.6" stroke-opacity=".7" paint-order="stroke" font-weight="700">PARIS</text>
<text x="662" y="624" text-anchor="middle" font-size="11.5" letter-spacing="1.6" fill="#a9b5c0" stroke="#fff" stroke-width="1.6" stroke-opacity=".7" paint-order="stroke" font-weight="700">FRANCE</text>
<text x="805" y="618" text-anchor="middle" font-size="11.5" letter-spacing="1.2" fill="#a9b5c0" stroke="#fff" stroke-width="1.6" stroke-opacity=".7" paint-order="stroke" font-weight="700">SWITZERLAND</text>
<text x="731" y="637" text-anchor="middle" font-size="10.5" letter-spacing="0.6" fill="#8f9eac" stroke="#fff" stroke-width="1.6" stroke-opacity=".7" paint-order="stroke" font-weight="700">GENEVA</text>
<text x="714" y="652" text-anchor="middle" font-size="10.5" letter-spacing="0.3" fill="#8f9eac" stroke="#fff" stroke-width="1.6" stroke-opacity=".7" paint-order="stroke" font-weight="700">Lyon</text>
<text x="812" y="661" text-anchor="middle" font-size="10.5" letter-spacing="0.3" fill="#8f9eac" stroke="#fff" stroke-width="1.6" stroke-opacity=".7" paint-order="stroke" font-weight="700">Milan</text>
<text x="955" y="640" text-anchor="middle" font-size="11" letter-spacing="1.1" fill="#a9b5c0" stroke="#fff" stroke-width="1.6" stroke-opacity=".7" paint-order="stroke" font-weight="700">SLOVENIA</text>
<text x="974" y="665" text-anchor="middle" font-size="11" letter-spacing="1.2" fill="#a9b5c0" stroke="#fff" stroke-width="1.6" stroke-opacity=".7" paint-order="stroke" font-weight="700">CROATIA</text>
<text x="787" y="717" text-anchor="middle" font-size="11" letter-spacing="1.1" fill="#a9b5c0" stroke="#fff" stroke-width="1.6" stroke-opacity=".7" paint-order="stroke" font-weight="700">MONACO</text>
<text x="902" y="704" text-anchor="middle" font-size="11" letter-spacing="1.1" fill="#a9b5c0" stroke="#fff" stroke-width="1.6" stroke-opacity=".7" paint-order="stroke" font-weight="700">SAN</text>
<text x="902" y="716" text-anchor="middle" font-size="11" letter-spacing="1.1" fill="#a9b5c0" stroke="#fff" stroke-width="1.6" stroke-opacity=".7" paint-order="stroke" font-weight="700">MARINO</text>
<text x="1058" y="682" text-anchor="middle" font-size="10.5" letter-spacing="0.3" fill="#8f9eac" stroke="#fff" stroke-width="1.6" stroke-opacity=".7" paint-order="stroke" font-weight="700">Belgrade</text>
<text x="1086" y="703" text-anchor="middle" font-size="11" letter-spacing="1.2" fill="#a9b5c0" stroke="#fff" stroke-width="1.6" stroke-opacity=".7" paint-order="stroke" font-weight="700">SERBIA</text>
<text x="1014" y="714" text-anchor="middle" font-size="10.5" letter-spacing="0.3" fill="#8f9eac" stroke="#fff" stroke-width="1.6" stroke-opacity=".7" paint-order="stroke" font-weight="700">Sarajevo</text>
<text x="1054" y="746" text-anchor="middle" font-size="11" letter-spacing="1.2" fill="#a9b5c0" stroke="#fff" stroke-width="1.6" stroke-opacity=".7" paint-order="stroke" font-weight="700">MONTENEGRO</text>
<text x="906" y="750" text-anchor="middle" font-size="11.5" letter-spacing="1.4" fill="#a9b5c0" stroke="#fff" stroke-width="1.6" stroke-opacity=".7" paint-order="stroke" font-weight="700">ITALY</text>
<text x="901" y="768" text-anchor="middle" font-size="11" letter-spacing="1.1" fill="#a9b5c0" stroke="#fff" stroke-width="1.6" stroke-opacity=".7" paint-order="stroke" font-weight="700">VATICAN</text>
<text x="901" y="780" text-anchor="middle" font-size="11" letter-spacing="1.1" fill="#a9b5c0" stroke="#fff" stroke-width="1.6" stroke-opacity=".7" paint-order="stroke" font-weight="700">CITY</text>
<text x="1073" y="800" text-anchor="middle" font-size="11" letter-spacing="1.2" fill="#a9b5c0" stroke="#fff" stroke-width="1.6" stroke-opacity=".7" paint-order="stroke" font-weight="700">ALBANIA</text>
<text x="1091" y="777" font-size="11.5" letter-spacing="1.3" fill="#a9b5c0" stroke="#fff" stroke-width="1.6" stroke-opacity=".7" paint-order="stroke" font-weight="700">NORTH</text>
<text x="1075" y="789" font-size="11.5" letter-spacing="1.3" fill="#a9b5c0" stroke="#fff" stroke-width="1.6" stroke-opacity=".7" paint-order="stroke" font-weight="700">MACEDONIA</text>
<text x="1076" y="811" font-size="10.5" letter-spacing="0.3" fill="#8f9eac" stroke="#fff" stroke-width="1.6" stroke-opacity=".7" paint-order="stroke" font-weight="700">Thessaloniki</text>
<text x="922" y="806" text-anchor="middle" font-size="10.5" letter-spacing="0.3" fill="#8f9eac" stroke="#fff" stroke-width="1.6" stroke-opacity=".7" paint-order="stroke" font-weight="700">Naples</text>
<text x="1091.5" y="861" font-size="12" letter-spacing="1.6" fill="#a9b5c0" stroke="#fff" stroke-width="1.6" stroke-opacity=".7" paint-order="stroke" font-weight="700">GREECE</text>
<text x="898" y="886" text-anchor="middle" font-size="10.5" letter-spacing="0.3" fill="#8f9eac" stroke="#fff" stroke-width="1.6" stroke-opacity=".7" paint-order="stroke" font-weight="700">Palermo</text>
<text x="653" y="754" text-anchor="middle" font-size="11" letter-spacing="1.1" fill="#a9b5c0" stroke="#fff" stroke-width="1.6" stroke-opacity=".7" paint-order="stroke" font-weight="700">ANDORRA</text>
<text x="639" y="789" text-anchor="middle" font-size="10.5" letter-spacing="0.3" fill="#8f9eac" stroke="#fff" stroke-width="1.6" stroke-opacity=".7" paint-order="stroke" font-weight="700">Barcelona</text>
<text x="507" y="817" text-anchor="middle" font-size="10.5" letter-spacing="0.6" fill="#8f9eac" stroke="#fff" stroke-width="1.6" stroke-opacity=".7" paint-order="stroke" font-weight="700">MADRID</text>
<text x="433" y="841" text-anchor="middle" font-size="11.5" letter-spacing="1.4" fill="#a9b5c0" stroke="#fff" stroke-width="1.6" stroke-opacity=".7" paint-order="stroke" font-weight="700">PORTUGAL</text>
<text x="508" y="851" text-anchor="middle" font-size="11.5" letter-spacing="1.4" fill="#a9b5c0" stroke="#fff" stroke-width="1.6" stroke-opacity=".7" paint-order="stroke" font-weight="700">SPAIN</text>
<text x="391" y="869" text-anchor="middle" font-size="10.5" letter-spacing="0.3" fill="#8f9eac" stroke="#fff" stroke-width="1.6" stroke-opacity=".7" paint-order="stroke" font-weight="700">Lisbon</text>
<text x="1103" y="427" font-size="10.5" letter-spacing="0.3" fill="#8f9eac" stroke="#fff" stroke-width="1.6" stroke-opacity=".7" paint-order="stroke" font-weight="700">Warsaw</text>
<text x="1028" y="330" text-anchor="middle" font-size="12.5" letter-spacing="1.3" fill="#b4bec7" font-style="italic" font-weight="700">Østersøen</text>
<text x="1027" y="393" text-anchor="middle" font-size="13.5" letter-spacing="1" fill="#b4bec7" font-weight="700">море</text>
<rect x="474.7" y="379.1" width="2.400" height="2.400" fill="#8494a3"/>
<rect x="614.4" y="448.1" width="2.400" height="2.400" fill="#8494a3"/>
<rect x="921.4" y="409.8" width="2.400" height="2.400" fill="#8494a3"/>
<rect x="814.8" y="498.3" width="2.400" height="2.400" fill="#8494a3"/>
<rect x="945.3" y="498.8" width="2.400" height="2.400" fill="#8494a3"/>
<rect x="990.3" y="563.8" width="2.400" height="2.400" fill="#8494a3"/>
<rect x="879.8" y="566.8" width="2.400" height="2.400" fill="#8494a3"/>
<rect x="727.8" y="646.8" width="2.400" height="2.400" fill="#8494a3"/>
<rect x="827.3" y="655.8" width="2.400" height="2.400" fill="#8494a3"/>
<rect x="532.2" y="812.4" width="2.400" height="2.400" fill="#8494a3"/>
<rect x="409.2" y="863.3" width="2.400" height="2.400" fill="#8494a3"/>
<rect x="1081.8" y="676.8" width="2.400" height="2.400" fill="#8494a3"/>
<rect x="1036.8" y="708.8" width="2.400" height="2.400" fill="#8494a3"/>
<rect x="941.0" y="800.4" width="2.400" height="2.400" fill="#8494a3"/>
<rect x="919.9" y="880.4" width="2.400" height="2.400" fill="#8494a3"/>
<rect x="666.3" y="783.3" width="2.400" height="2.400" fill="#8494a3"/>
<rect x="754.8" y="631.8" width="2.400" height="2.400" fill="#8494a3"/>
<rect x="1096.8" y="421.8" width="2.400" height="2.400" fill="#8494a3"/>
<path d="M733.4 396.6 L740.2 399.6 L745.9 409.0 L736.8 418.4 L733.4 414.6 L734.6 405.3Z" fill="#d0d6d9"/>
</svg>
<div class="zc"><div class="zb" style="border-bottom:1px solid #ccc"><i style="left:9.400px;top:15.700px;width:12.400px;height:2.400px"></i><i style="left:14.500px;top:10.700px;width:2.200px;height:12.400px"></i></div><div class="zb"><i style="left:9.400px;top:15.700px;width:12.400px;height:2.400px"></i></div></div>
<div class="lg"><div class="b1">All NOTAMs <span>(139)</span></div><div class="b2">VFR Only <span>(118)</span></div></div>
<svg width="920" height="576" viewBox="200 324 920 576" style="position:absolute;left:0;top:0"><path d="M676.5 538.4L649.7 715.6" stroke="#262626" stroke-width="2.600" stroke-dasharray="10 5" stroke-linecap="round" fill="none"/></svg>
<div class="apt" style="left:456px;top:202px;background:#28a745"><span style="margin-left:5px">LFPG</span></div>
<div class="cl y" style="left:448.500px;top:213.500px"><div>76</div></div>
<div class="cl g" style="left:429px;top:285.500px"><div>3</div></div>
<div class="cl y" style="left:430.500px;top:368.500px"><div></div></div>
<div class="apt" style="left:429px;top:379px;background:#dc3545"><span style="margin-left:6px">LFBO</span></div>
<div class="am"><div class="bar"></div><div class="a1">amenai</div><div class="a2">technologies</div>
<svg class="pl" width="28" height="30" viewBox="0 0 28 30"><path d="M3 12.500l4.500 0.300 2.200 2.700 6.300-0.300-4.800-12 3.300-0.400 8 11.800 4.800-0.300c2.200 0 2.200 2.600 0 2.700l-4.700 0.400-6.600 9.700-3.200-0.200 3.300-8.600-6.300 0.500-2.300 3.200-2.800 0.100 1.700-4.700z" fill="none" stroke="#fff" stroke-width="1.100" stroke-linejoin="round"/></svg>
<div class="a3">All rights reserved</div></div>
<div class="attr"><svg width="12" height="8" viewBox="0 0 12 8" style="margin-right:3px;vertical-align:0"><rect width="12" height="4" fill="#4c7be1"/><rect y="4" width="12" height="4" fill="#ffd500"/></svg><a>Leaflet</a> <span style="color:#555">|</span> © <a>OpenStreetMap</a> contributors © <a>CARTO</a>, VFR Charts © <a>Open Flightmaps</a></div>
</div>
<div id="pan">
  <div class="hd">
    <div class="tri" style="left:12px;top:16px"></div>
    <div class="abs" style="left:32px;top:11px;font-size:14px;font-weight:700;color:#222;line-height:18px">NOTAMs</div>
    <div class="abs" style="left:97px;top:10px;width:39px;height:19px;border-radius:10px;background:#003a7a;color:#fff;font-size:13px;font-weight:700;text-align:center;line-height:19px">139</div>
  </div>
  <div class="sec">Departure Airport - LFPG (19)</div>
  <div class="card" style="top:92px;height:225px">
    <div class="nb">N</div><div class="id">6038</div><div class="info" style="left:95px">INFO</div>
    <div class="bd" style="left:138px;width:42px">LFPG</div><div class="bd" style="left:188px;width:29px">AD</div>
    <div class="body"><span style="letter-spacing:0.031px">At LFPG. from 2024-11-07 12:47 utc and is</span><br><span style="letter-spacing:0.079px">permanent. The INS checkpoint M23 is</span><br><span style="letter-spacing:0.265px">located at coordinates 48°59'59.93"N,</span><br><span style="letter-spacing:0.202px">002°32'08.95"E, referenced to aerodrome</span><br><span style="letter-spacing:-0.500px">LFPG.</span></div>
    <div class="raw" style="top:140px">Show raw NOTAM text</div>
    <div class="cat" style="top:161px">Aerodrome</div>
    <div class="when" style="top:183px">From 2024-11-07 12:47 UTC and is<br>permanent</div>
  </div>
  <div class="card" style="top:327px;height:300px">
    <div class="nb">N</div><div class="id">1926</div><div class="info" style="left:92px">INFO</div>
    <div class="bd" style="left:135px;width:42px">LFPG</div><div class="bd" style="left:185px;width:29px">AD</div>
    <div class="body"><span style="letter-spacing:0.121px">At LFPG. from 2025-04-16 06:12 utc and</span><br><span style="letter-spacing:0.133px">is permanent. Scheduled restrictions for</span><br><span style="letter-spacing:0.050px">Pogo linking flights between Paris Orly and</span><br><span style="letter-spacing:0.036px">Paris Charles de Gaulle: Aircraft operators</span><br><span style="letter-spacing:0.105px">must schedule their departure from Paris</span><br><span style="letter-spacing:-0.023px">Orly for an arrival at Paris Charles de</span><br><span style="letter-spacing:0.093px">Gaulle after 0800 UTC in the winter</span><br><span style="letter-spacing:-0.022px">(summer minus 1 hour). Instead of Paris</span><br><span style="letter-spacing:0.047px">Charles de Gaulle approach not accepting</span><br><span style="letter-spacing:0.080px">any departure before 1000 local time.</span></div>
    <div class="raw" style="top:235px">Show raw NOTAM text</div>
  </div>
</div>

</body>
</html>
